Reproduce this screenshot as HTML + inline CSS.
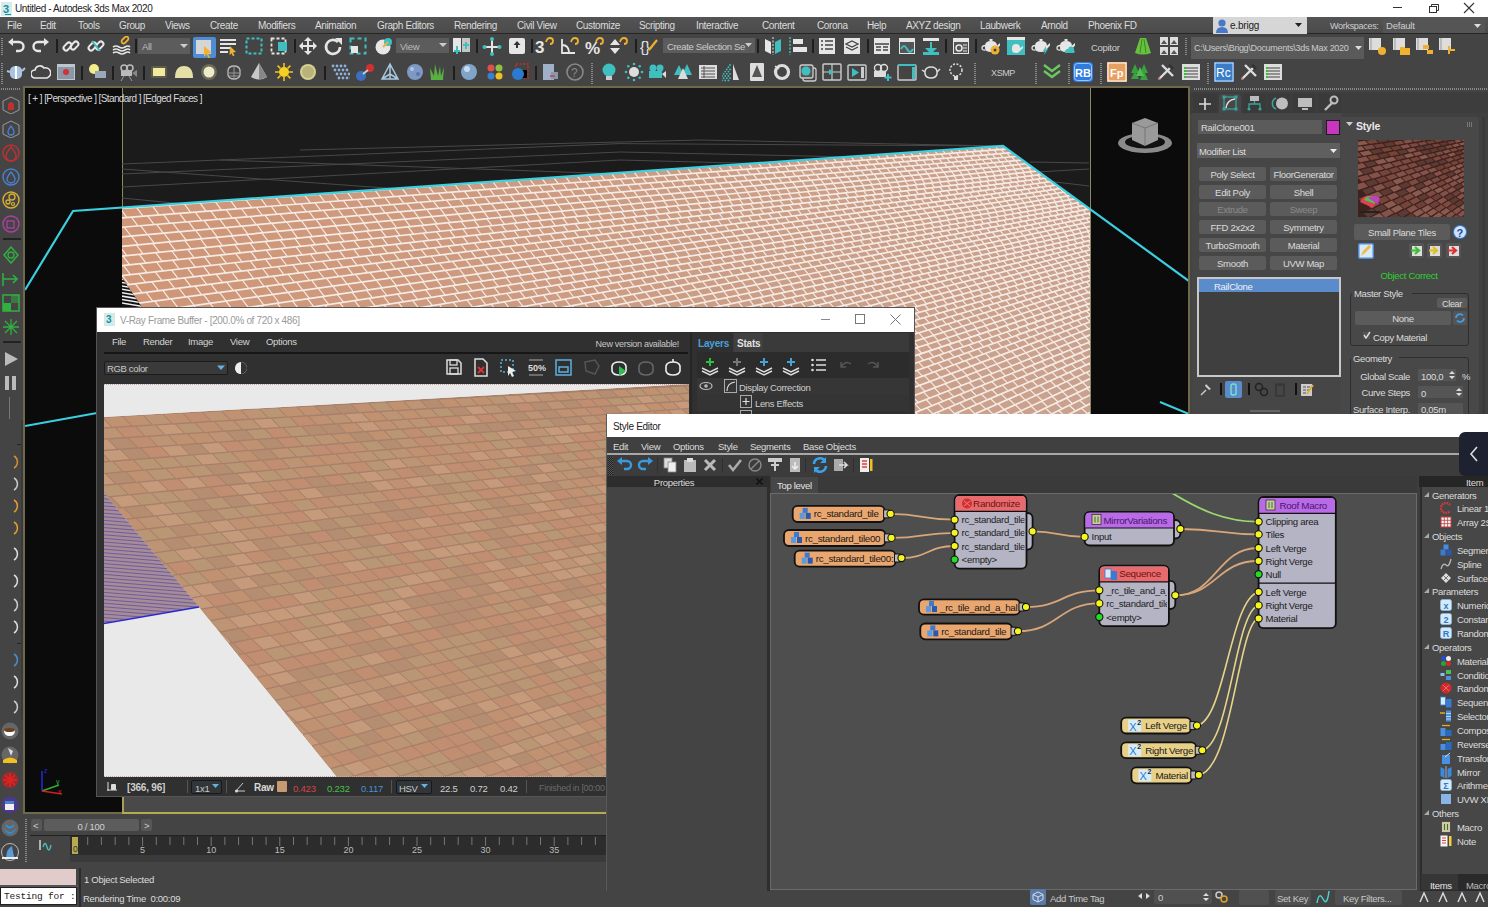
<!DOCTYPE html>
<html><head><meta charset="utf-8">
<style>
*{margin:0;padding:0;box-sizing:border-box}
html,body{width:1488px;height:907px;overflow:hidden;background:#444;position:relative}
body{font-family:"Liberation Sans",sans-serif;font-size:10px;color:#ddd}
.a{position:absolute;display:block}
.t{position:absolute;white-space:nowrap;line-height:1}
</style></head><body>
<div class="a" style="left:0px;top:0px;width:1488px;height:17px;background:#ffffff;"></div>
<div class="a" style="left:1px;top:2px;width:11px;height:14px;background:#d4ecec;"></div>
<div class="t" style="left:3px;top:4px;font-size:11px;color:#1a8e96;letter-spacing:0px;font-weight:bold;">3</div>
<div class="a" style="left:5px;top:14px;width:6px;height:1px;background:#1a8e96;"></div>
<div class="t" style="left:15px;top:4px;font-size:10px;color:#222;letter-spacing:-0.38px;">Untitled - Autodesk 3ds Max 2020</div>
<div class="a" style="left:1393px;top:7px;width:9px;height:1px;background:#333;"></div>
<svg class="a" style="left:1428px;top:3px;" width="11" height="11" viewBox="0 0 11 11"><rect x="1.5" y="3.5" width="7" height="6" fill="none" stroke="#333"/><path d="M3.5 3.5v-2h7v6h-2" fill="none" stroke="#333"/></svg>
<svg class="a" style="left:1463px;top:2px;" width="12" height="12" viewBox="0 0 12 12"><path d="M1 1l10 10M11 1L1 11" stroke="#333" stroke-width="1.1"/></svg>
<div class="a" style="left:0px;top:17px;width:1488px;height:17px;background:linear-gradient(#545454,#4a4a4a);"></div>
<div class="a" style="left:0px;top:33px;width:1488px;height:1px;background:#262626;"></div>
<div class="t" style="left:7px;top:21px;font-size:10px;color:#dcdcdc;letter-spacing:-0.36px;">File</div>
<div class="t" style="left:40px;top:21px;font-size:10px;color:#dcdcdc;letter-spacing:-0.36px;">Edit</div>
<div class="t" style="left:78px;top:21px;font-size:10px;color:#dcdcdc;letter-spacing:-0.36px;">Tools</div>
<div class="t" style="left:119px;top:21px;font-size:10px;color:#dcdcdc;letter-spacing:-0.36px;">Group</div>
<div class="t" style="left:165px;top:21px;font-size:10px;color:#dcdcdc;letter-spacing:-0.36px;">Views</div>
<div class="t" style="left:210px;top:21px;font-size:10px;color:#dcdcdc;letter-spacing:-0.36px;">Create</div>
<div class="t" style="left:258px;top:21px;font-size:10px;color:#dcdcdc;letter-spacing:-0.36px;">Modifiers</div>
<div class="t" style="left:315px;top:21px;font-size:10px;color:#dcdcdc;letter-spacing:-0.36px;">Animation</div>
<div class="t" style="left:377px;top:21px;font-size:10px;color:#dcdcdc;letter-spacing:-0.36px;">Graph Editors</div>
<div class="t" style="left:454px;top:21px;font-size:10px;color:#dcdcdc;letter-spacing:-0.36px;">Rendering</div>
<div class="t" style="left:517px;top:21px;font-size:10px;color:#dcdcdc;letter-spacing:-0.36px;">Civil View</div>
<div class="t" style="left:576px;top:21px;font-size:10px;color:#dcdcdc;letter-spacing:-0.36px;">Customize</div>
<div class="t" style="left:639px;top:21px;font-size:10px;color:#dcdcdc;letter-spacing:-0.36px;">Scripting</div>
<div class="t" style="left:696px;top:21px;font-size:10px;color:#dcdcdc;letter-spacing:-0.36px;">Interactive</div>
<div class="t" style="left:762px;top:21px;font-size:10px;color:#dcdcdc;letter-spacing:-0.36px;">Content</div>
<div class="t" style="left:817px;top:21px;font-size:10px;color:#dcdcdc;letter-spacing:-0.36px;">Corona</div>
<div class="t" style="left:867px;top:21px;font-size:10px;color:#dcdcdc;letter-spacing:-0.36px;">Help</div>
<div class="t" style="left:906px;top:21px;font-size:10px;color:#dcdcdc;letter-spacing:-0.36px;">AXYZ design</div>
<div class="t" style="left:980px;top:21px;font-size:10px;color:#dcdcdc;letter-spacing:-0.36px;">Laubwerk</div>
<div class="t" style="left:1041px;top:21px;font-size:10px;color:#dcdcdc;letter-spacing:-0.36px;">Arnold</div>
<div class="t" style="left:1088px;top:21px;font-size:10px;color:#dcdcdc;letter-spacing:-0.36px;">Phoenix FD</div>
<div class="a" style="left:1213px;top:17px;width:94px;height:17px;background:#d6d6d6;"></div>
<svg class="a" style="left:1215px;top:18px;" width="14" height="15" viewBox="0 0 14 15"><circle cx="7" cy="5" r="3.6" fill="#4a78c8"/><path d="M1 15q0-6 6-6t6 6z" fill="#4a78c8"/></svg>
<div class="t" style="left:1230px;top:21px;font-size:10px;color:#222;letter-spacing:-0.2px;">e.brigg</div>
<svg class="a" style="left:1295px;top:22px;" width="7" height="6" viewBox="0 0 7 6"><path d="M0 1h7L3.5 5z" fill="#222"/></svg>
<div class="t" style="left:1330px;top:22px;font-size:9px;color:#cfcfcf;letter-spacing:-0.3px;">Workspaces:</div>
<div class="a" style="left:1383px;top:18px;width:102px;height:15px;background:#555555;"></div>
<div class="t" style="left:1386px;top:21px;font-size:9.5px;color:#cfcfcf;letter-spacing:-0.2px;">Default</div>
<svg class="a" style="left:1474px;top:23px;" width="7" height="6" viewBox="0 0 7 6"><path d="M0 1h7L3.5 5z" fill="#ddd"/></svg>
<div class="a" style="left:0px;top:34px;width:1488px;height:52px;background:#444444;"></div>
<div class="a" style="left:1px;top:38px;width:2px;height:18px;background:repeating-linear-gradient(#8a8a8a 0 1px,transparent 1px 2px)"></div>
<div class="a" style="left:1px;top:63px;width:2px;height:21px;background:repeating-linear-gradient(#8a8a8a 0 1px,transparent 1px 2px)"></div>
<svg class="a" style="left:6px;top:36px;" width="20" height="20" viewBox="0 0 20 20"><path d="M6 6h7a4.5 4.5 0 0 1 0 9h-3" fill="none" stroke="#e6e6e6" stroke-width="2.4"/><path d="M2 6l5-4v8z" fill="#e6e6e6"/></svg>
<svg class="a" style="left:31px;top:36px;" width="20" height="20" viewBox="0 0 20 20"><path d="M14 6H7a4.5 4.5 0 0 0 0 9h3" fill="none" stroke="#e6e6e6" stroke-width="2.4"/><path d="M18 6l-5-4v8z" fill="#e6e6e6"/></svg>
<div class="a" style="left:56px;top:39px;width:2px;height:14px;background:#1e1e1e;"></div>
<svg class="a" style="left:61px;top:36px;" width="20" height="20" viewBox="0 0 20 20"><g fill="none" stroke="#e6e6e6" stroke-width="2"><rect x="2" y="8" width="9" height="5" rx="2.5" transform="rotate(-45 6.5 10.5)"/><rect x="9" y="7" width="9" height="5" rx="2.5" transform="rotate(-45 13.5 9.5)"/></g></svg>
<svg class="a" style="left:86px;top:36px;" width="20" height="20" viewBox="0 0 20 20"><g fill="none" stroke="#e6e6e6" stroke-width="2"><rect x="2" y="8" width="9" height="5" rx="2.5" transform="rotate(-45 6.5 10.5)"/><rect x="9" y="7" width="9" height="5" rx="2.5" transform="rotate(-45 13.5 9.5)"/></g><path d="M6 5l8 10" stroke="#3fbfbf" stroke-width="2"/></svg>
<svg class="a" style="left:111px;top:36px;" width="20" height="20" viewBox="0 0 20 20"><g fill="none" stroke="#e6e6e6" stroke-width="1.6"><path d="M2 11q3-2 6 0t6 0 5 0"/><path d="M2 14q3-2 6 0t6 0 5 0"/><path d="M2 17q3-2 6 0t6 0 5 0"/></g><rect x="10" y="2" width="8" height="4" rx="2" transform="rotate(-45 14 4)" fill="none" stroke="#f0b030" stroke-width="1.8"/></svg>
<div class="a" style="left:135px;top:39px;width:2px;height:14px;background:#1e1e1e;"></div>
<div class="a" style="left:138px;top:38px;width:52px;height:16px;background:#5c5c5c;"></div>
<div class="t" style="left:142px;top:42px;font-size:9.5px;color:#bbb;letter-spacing:-0.3px;">All</div>
<svg class="a" style="left:180px;top:43px;" width="8" height="6" viewBox="0 0 8 6"><path d="M0 1h8L4 5z" fill="#ccc"/></svg>
<div class="a" style="left:193px;top:37px;width:23px;height:21px;background:#4f8cd6;border-radius:2px"></div>
<div class="a" style="left:196px;top:40px;width:15px;height:14px;background:#d5d5d5;"></div>
<svg class="a" style="left:203px;top:46px;" width="10" height="12" viewBox="0 0 10 12"><path d="M1 0l8 7-4 .5 2 4-1.5.8-2-4L1 11z" fill="#f0b030"/></svg>
<svg class="a" style="left:218px;top:36px;" width="20" height="20" viewBox="0 0 20 20"><g stroke="#e6e6e6" stroke-width="2"><path d="M2 4h16M2 8h16M2 12h10M2 16h8"/></g><path d="M12 10l6 6-3 .5 1.5 3-1.5.8-1.5-3-2 2z" fill="#f0b030"/></svg>
<svg class="a" style="left:244px;top:36px;" width="20" height="20" viewBox="0 0 20 20"><rect x="2.5" y="2.5" width="15" height="15" fill="none" stroke="#3fbfbf" stroke-width="2" stroke-dasharray="3 2"/></svg>
<svg class="a" style="left:269px;top:36px;" width="20" height="20" viewBox="0 0 20 20"><rect x="2.5" y="2.5" width="14" height="15" fill="none" stroke="#e6e6e6" stroke-width="1.8" stroke-dasharray="3 2"/><rect x="9" y="6" width="9" height="9" fill="#3fbfbf"/></svg>
<div class="a" style="left:294px;top:39px;width:2px;height:14px;background:#1e1e1e;"></div>
<svg class="a" style="left:298px;top:36px;" width="20" height="20" viewBox="0 0 20 20"><path d="M10 1l4 4h-3v4h4V6l4 4-4 4v-3h-4v4h3l-4 4-4-4h3v-4H5v3l-4-4 4-4v3h4V5H6z" fill="#e6e6e6"/></svg>
<svg class="a" style="left:323px;top:36px;" width="20" height="20" viewBox="0 0 20 20"><path d="M15 6a7 7 0 1 0 2 5" fill="none" stroke="#e6e6e6" stroke-width="2.6"/><path d="M12 2h7v7z" fill="#e6e6e6"/></svg>
<svg class="a" style="left:348px;top:36px;" width="20" height="20" viewBox="0 0 20 20"><rect x="2.5" y="2.5" width="15" height="15" fill="none" stroke="#3fbfbf" stroke-width="2" stroke-dasharray="4 3"/><rect x="3" y="10" width="7" height="7" fill="#e6e6e6"/></svg>
<svg class="a" style="left:374px;top:36px;" width="20" height="20" viewBox="0 0 20 20"><circle cx="9" cy="11" r="7.5" fill="#e6e6e6"/><circle cx="14" cy="6" r="4" fill="#3fbfbf"/><path d="M9 11l5-5" stroke="#f0b030" stroke-width="2"/></svg>
<div class="a" style="left:396px;top:38px;width:53px;height:15px;background:#5c5c5c;"></div>
<div class="t" style="left:400px;top:42px;font-size:9.5px;color:#bbb;letter-spacing:-0.3px;">View</div>
<svg class="a" style="left:439px;top:42px;" width="8" height="6" viewBox="0 0 8 6"><path d="M0 1h8L4 5z" fill="#ccc"/></svg>
<svg class="a" style="left:452px;top:36px;" width="20" height="20" viewBox="0 0 20 20"><rect x="1" y="2" width="8" height="14" fill="#e6e6e6"/><rect x="10" y="2" width="8" height="14" fill="#e6e6e6" opacity=".8"/><path d="M5 10v8M2 15h6M14 6v7M11 9h6" stroke="#3fbfbf" stroke-width="2"/></svg>
<div class="a" style="left:476px;top:39px;width:2px;height:14px;background:#1e1e1e;"></div>
<svg class="a" style="left:482px;top:36px;" width="20" height="20" viewBox="0 0 20 20"><path d="M10 3v15M2 11h16" stroke="#e6e6e6" stroke-width="2"/><circle cx="10" cy="3" r="2" fill="#3fbfbf"/><circle cx="2.5" cy="11" r="2" fill="#3fbfbf"/><circle cx="17.5" cy="11" r="2" fill="#3fbfbf"/><circle cx="10" cy="18" r="2" fill="#3fbfbf"/></svg>
<svg class="a" style="left:507px;top:36px;" width="20" height="20" viewBox="0 0 20 20"><rect x="2" y="2" width="16" height="16" rx="2" fill="#e6e6e6"/><path d="M10 5l-3.5 4h2.5v3h2V9h2.5z" fill="#333"/></svg>
<div class="a" style="left:531px;top:39px;width:2px;height:14px;background:#1e1e1e;"></div>
<svg class="a" style="left:535px;top:36px;" width="20" height="20" viewBox="0 0 20 20"><text x="0" y="17" font-size="17" font-weight="bold" fill="#e6e6e6" font-family="Liberation Sans">3</text><path d="M11 6q1-4 4-4t3 3-3 3" fill="none" stroke="#f0b030" stroke-width="1.8"/></svg>
<svg class="a" style="left:560px;top:36px;" width="20" height="20" viewBox="0 0 20 20"><path d="M2 3v14h13M2 9q7 0 7 8" fill="none" stroke="#e6e6e6" stroke-width="1.8"/><path d="M11 6q1-4 4-4t3 3-3 3" fill="none" stroke="#f0b030" stroke-width="1.8"/></svg>
<svg class="a" style="left:585px;top:36px;" width="20" height="20" viewBox="0 0 20 20"><text x="0" y="18" font-size="17" font-weight="bold" fill="#e6e6e6" font-family="Liberation Sans">%</text><path d="M11 6q1-4 4-4t3 3-3 3" fill="none" stroke="#f0b030" stroke-width="1.8"/></svg>
<svg class="a" style="left:609px;top:36px;" width="20" height="20" viewBox="0 0 20 20"><path d="M6 3l5 6H1zM6 18l5-6H1z" fill="#e6e6e6"/><path d="M11 6q1-4 4-4t3 3-3 3" fill="none" stroke="#f0b030" stroke-width="1.8"/></svg>
<div class="a" style="left:635px;top:39px;width:2px;height:14px;background:#1e1e1e;"></div>
<svg class="a" style="left:640px;top:36px;" width="20" height="20" viewBox="0 0 20 20"><text x="0" y="16" font-size="15" fill="#e6e6e6" font-family="Liberation Sans">{}</text><path d="M9 14l8-10" stroke="#f0b030" stroke-width="2.2"/></svg>
<div class="a" style="left:663px;top:38px;width:92px;height:15px;background:#5c5c5c;"></div>
<div class="t" style="left:667px;top:42px;font-size:9.5px;color:#ccc;letter-spacing:-0.35px;">Create Selection Se</div>
<svg class="a" style="left:745px;top:42px;" width="7" height="6" viewBox="0 0 7 6"><path d="M0 1h7L3.5 5z" fill="#ccc"/></svg>
<div class="a" style="left:757px;top:39px;width:2px;height:14px;background:#1e1e1e;"></div>
<svg class="a" style="left:763px;top:36px;" width="20" height="20" viewBox="0 0 20 20"><path d="M2 3l6 3v12l-6-3z" fill="#e6e6e6"/><path d="M18 3l-6 3v12l6-3z" fill="#3fbfbf"/><path d="M10 1v18" stroke="#e6e6e6" stroke-width="1" stroke-dasharray="2 1.5"/></svg>
<svg class="a" style="left:788px;top:36px;" width="20" height="20" viewBox="0 0 20 20"><path d="M2 1v18" stroke="#3fbfbf" stroke-width="1.5" stroke-dasharray="2 1.5"/><rect x="5" y="3" width="10" height="5" fill="#e6e6e6"/><rect x="5" y="11" width="14" height="5" fill="#e6e6e6"/></svg>
<div class="a" style="left:812px;top:39px;width:2px;height:14px;background:#1e1e1e;"></div>
<svg class="a" style="left:817px;top:36px;" width="20" height="20" viewBox="0 0 20 20"><rect x="2" y="2" width="16" height="16" fill="#e6e6e6"/><path d="M4 5h2M8 5h8M4 9h2M8 9h8M4 13h2M8 13h8" stroke="#444" stroke-width="1.5"/></svg>
<svg class="a" style="left:842px;top:36px;" width="20" height="20" viewBox="0 0 20 20"><rect x="2" y="2" width="16" height="16" fill="#e6e6e6"/><path d="M10 5l6 3-6 3-6-3zM4 11l6 3 6-3" fill="none" stroke="#444" stroke-width="1.3"/></svg>
<div class="a" style="left:867px;top:39px;width:2px;height:14px;background:#1e1e1e;"></div>
<svg class="a" style="left:872px;top:36px;" width="20" height="20" viewBox="0 0 20 20"><rect x="2" y="2" width="16" height="16" fill="#e6e6e6"/><path d="M3 8h14M4 11h5M11 11h5M4 14h5M11 14h5" stroke="#444" stroke-width="1.5"/></svg>
<svg class="a" style="left:897px;top:36px;" width="20" height="20" viewBox="0 0 20 20"><rect x="2" y="2" width="16" height="16" fill="#e6e6e6"/><rect x="3" y="6" width="14" height="11" fill="#555"/><path d="M4 13q3-6 6 0t6 0" fill="none" stroke="#3fbfbf" stroke-width="2"/></svg>
<svg class="a" style="left:921px;top:36px;" width="20" height="20" viewBox="0 0 20 20"><rect x="2" y="2" width="16" height="3" fill="#e6e6e6"/><path d="M10 6v7" stroke="#3fbfbf" stroke-width="2"/><path d="M4 12l6 6 6-6z" fill="#3fbfbf"/><rect x="2" y="16" width="16" height="3" fill="#3fbfbf"/></svg>
<div class="a" style="left:945px;top:39px;width:2px;height:14px;background:#1e1e1e;"></div>
<svg class="a" style="left:951px;top:36px;" width="20" height="20" viewBox="0 0 20 20"><rect x="2" y="2" width="16" height="16" fill="#e6e6e6"/><rect x="3" y="6" width="14" height="11" fill="#555"/><circle cx="8" cy="12" r="3" fill="none" stroke="#e6e6e6" stroke-width="1.5"/><path d="M12 9h4M12 12h4M12 15h4" stroke="#e6e6e6" stroke-width="1"/></svg>
<div class="a" style="left:975px;top:39px;width:2px;height:14px;background:#1e1e1e;"></div>
<svg class="a" style="left:981px;top:36px;" width="20" height="20" viewBox="0 0 20 20"><path d="M4 10q0-5 6-5t6 5v2q0 4-6 4t-6-4z" fill="#e6e6e6"/><path d="M15.5 10l3.5-3v2.5l-3.5 4z" fill="#e6e6e6"/><path d="M4.5 9.5q-3.5 0-3.5 2.5t3.5 2" fill="none" stroke="#e6e6e6" stroke-width="1.3"/><rect x="8.5" y="3" width="3" height="2" fill="#e6e6e6"/><circle cx="14" cy="14" r="4.5" fill="#f0b030"/><circle cx="14" cy="14" r="1.5" fill="#444"/></svg>
<svg class="a" style="left:1006px;top:36px;" width="20" height="20" viewBox="0 0 20 20"><rect x="1" y="1" width="18" height="18" fill="#3fbfbf"/><rect x="1" y="1" width="18" height="3" fill="#e6e6e6"/><path d="M6 12q0-4 4-4t4 4v2q0 3-4 3t-4-3z" fill="#e6e6e6"/><path d="M14 12l3-2v2l-3 3z" fill="#e6e6e6"/></svg>
<svg class="a" style="left:1031px;top:36px;" width="20" height="20" viewBox="0 0 20 20"><path d="M4 10q0-5 6-5t6 5v2q0 4-6 4t-6-4z" fill="#e6e6e6"/><path d="M15.5 10l3.5-3v2.5l-3.5 4z" fill="#e6e6e6"/><path d="M4.5 9.5q-3.5 0-3.5 2.5t3.5 2" fill="none" stroke="#e6e6e6" stroke-width="1.3"/><rect x="8.5" y="3" width="3" height="2" fill="#e6e6e6"/><path d="M15 10l-3 5h2l-1 4 4-6h-2z" fill="#3fbfbf"/></svg>
<svg class="a" style="left:1056px;top:36px;" width="20" height="20" viewBox="0 0 20 20"><path d="M4 10q0-5 6-5t6 5v2q0 4-6 4t-6-4z" fill="#e6e6e6"/><path d="M15.5 10l3.5-3v2.5l-3.5 4z" fill="#e6e6e6"/><path d="M4.5 9.5q-3.5 0-3.5 2.5t3.5 2" fill="none" stroke="#e6e6e6" stroke-width="1.3"/><rect x="8.5" y="3" width="3" height="2" fill="#e6e6e6"/><path d="M9 17a3 3 0 0 1 3-4 3 3 0 0 1 6 1 2 2 0 0 1 0 3z" fill="#3fbfbf"/></svg>
<div class="t" style="left:1091px;top:43px;font-size:9.5px;color:#ccc;letter-spacing:-0.3px;">Copitor</div>
<svg class="a" style="left:1133px;top:36px;" width="20" height="20" viewBox="0 0 20 20"><path d="M7 2h6l5 15q-8 3-16 0z" fill="#68c040"/><path d="M9 3l-2 14M11 3l2 14" stroke="#3a8a20"/></svg>
<svg class="a" style="left:1159px;top:36px;" width="20" height="20" viewBox="0 0 20 20"><rect x="1" y="1" width="8" height="8" fill="#ddd"/><rect x="11" y="1" width="8" height="8" fill="#ddd"/><rect x="1" y="11" width="8" height="8" fill="#ddd"/><rect x="11" y="11" width="8" height="8" fill="#ddd"/><path d="M2 8l3-4 3 4M12 8l3-4 3 4M2 18l3-4 3 4M12 18l3-4 3 4" fill="#555"/></svg>
<div class="a" style="left:1185px;top:38px;width:2px;height:18px;background:repeating-linear-gradient(#8a8a8a 0 1px,transparent 1px 2px)"></div>
<div class="a" style="left:1191px;top:37px;width:173px;height:22px;background:#5a5a5a;"></div>
<div class="t" style="left:1194px;top:44px;font-size:9px;color:#ccc;letter-spacing:-0.3px;">C:\Users\Brigg\Documents\3ds Max 2020</div>
<svg class="a" style="left:1355px;top:45px;" width="7" height="6" viewBox="0 0 7 6"><path d="M0 1h7L3.5 5z" fill="#ddd"/></svg>
<svg class="a" style="left:1367px;top:36px;" width="20" height="20" viewBox="0 0 20 20"><path d="M2 2h12v12H2z" fill="#ddd"/><path d="M4 2v12" stroke="#999"/><circle cx="15" cy="15" r="4" fill="#f0b030"/></svg>
<svg class="a" style="left:1391px;top:36px;" width="20" height="20" viewBox="0 0 20 20"><path d="M2 2h12v12H2z" fill="#ddd"/><path d="M4 2v12" stroke="#999"/><path d="M9 11h4l1 1h5v7H9z" fill="#f0b030"/></svg>
<svg class="a" style="left:1414px;top:36px;" width="20" height="20" viewBox="0 0 20 20"><path d="M2 2h12v12H2z" fill="#ddd"/><path d="M4 2v12" stroke="#999"/><rect x="9" y="9" width="6" height="4" fill="#f0b030"/><rect x="13" y="14" width="6" height="4" fill="#f0b030"/></svg>
<svg class="a" style="left:1437px;top:36px;" width="20" height="20" viewBox="0 0 20 20"><path d="M2 2h12v12H2z" fill="#ddd"/><path d="M4 2v12" stroke="#999"/><path d="M12 10v8M12 14h6" stroke="#f0b030" stroke-width="2"/></svg>
<svg class="a" style="left:6px;top:62px;" width="20" height="20" viewBox="0 0 20 20"><path d="M4 8q1-4 6-4t6 4v5q-1 4-6 4t-6-4z" fill="#a9c4e0"/><path d="M10 4v13" stroke="#fff" stroke-width="2"/><path d="M16 9l3-3M4 10l-3-1" stroke="#a9c4e0" stroke-width="2"/></svg>
<svg class="a" style="left:31px;top:62px;" width="20" height="20" viewBox="0 0 20 20"><path d="M4 16a4 4 0 0 1 0-8 5 5 0 0 1 9-2 4 4 0 0 1 3 10z" fill="none" stroke="#e6e6e6" stroke-width="1.6"/></svg>
<svg class="a" style="left:56px;top:62px;" width="20" height="20" viewBox="0 0 20 20"><rect x="1" y="2" width="18" height="16" fill="#bfc5cc"/><rect x="2" y="5" width="16" height="12" fill="#8a97a8"/><circle cx="10" cy="10" r="3" fill="#c33"/></svg>
<div class="a" style="left:81px;top:66px;width:2px;height:14px;background:#1e1e1e;"></div>
<svg class="a" style="left:87px;top:62px;" width="20" height="20" viewBox="0 0 20 20"><circle cx="7" cy="7" r="5" fill="#f3ec8a"/><rect x="8" y="9" width="11" height="7" fill="#9aa8b8"/></svg>
<div class="a" style="left:112px;top:66px;width:2px;height:14px;background:#1e1e1e;"></div>
<svg class="a" style="left:118px;top:62px;" width="20" height="20" viewBox="0 0 20 20"><circle cx="6" cy="6" r="3" fill="none" stroke="#bbb" stroke-width="1.5"/><circle cx="12" cy="6" r="3" fill="none" stroke="#bbb" stroke-width="1.5"/><rect x="3" y="9" width="11" height="5" fill="#bbb"/><path d="M14 11l5-3v7z" fill="#888"/><path d="M6 14l-3 5M11 14l3 5" stroke="#999"/></svg>
<div class="a" style="left:143px;top:66px;width:2px;height:14px;background:#1e1e1e;"></div>
<svg class="a" style="left:149px;top:62px;" width="20" height="20" viewBox="0 0 20 20"><rect x="2" y="4" width="16" height="12" rx="2" fill="#5f5e48"/><rect x="4" y="6" width="12" height="8" fill="#f1eaa0"/></svg>
<svg class="a" style="left:174px;top:62px;" width="20" height="20" viewBox="0 0 20 20"><path d="M1 16q0-12 9-12t9 12z" fill="#e5e0a8"/></svg>
<svg class="a" style="left:199px;top:62px;" width="20" height="20" viewBox="0 0 20 20"><circle cx="10" cy="10" r="8" fill="#6a6a55"/><circle cx="10" cy="10" r="5.5" fill="#eeeacc"/></svg>
<svg class="a" style="left:224px;top:62px;" width="20" height="20" viewBox="0 0 20 20"><path d="M4 8q1-4 6-4t6 4v5q-1 4-6 4t-6-4z" fill="none" stroke="#bbb" stroke-width="1.3"/><path d="M5 11h10M5 14h10M10 4v13" stroke="#999"/></svg>
<svg class="a" style="left:249px;top:62px;" width="20" height="20" viewBox="0 0 20 20"><path d="M10 1L2 15q8 5 16 0z" fill="#c8c8c8"/><path d="M10 1L10 18 18 15z" fill="#888"/></svg>
<svg class="a" style="left:274px;top:62px;" width="20" height="20" viewBox="0 0 20 20"><circle cx="10" cy="10" r="5" fill="#f5d020"/><path d="M10 1v4M10 15v4M1 10h4M15 10h4M3.6 3.6l2.8 2.8M13.6 13.6l2.8 2.8M3.6 16.4l2.8-2.8M13.6 6.4l2.8-2.8" stroke="#f5c020" stroke-width="1.6"/></svg>
<svg class="a" style="left:298px;top:62px;" width="20" height="20" viewBox="0 0 20 20"><circle cx="10" cy="10" r="8" fill="#d6d090"/><circle cx="10" cy="10" r="6" fill="#b9b27a"/></svg>
<div class="a" style="left:324px;top:66px;width:2px;height:14px;background:#1e1e1e;"></div>
<svg class="a" style="left:330px;top:62px;" width="20" height="20" viewBox="0 0 20 20"><g fill="#8fb0d8"><circle cx="3" cy="4" r="1.4"/><circle cx="5" cy="8" r="1.4"/><circle cx="7" cy="12" r="1.4"/><circle cx="9" cy="16" r="1.4"/><circle cx="7" cy="4" r="1.4"/><circle cx="9" cy="8" r="1.4"/><circle cx="11" cy="12" r="1.4"/><circle cx="13" cy="16" r="1.4"/><circle cx="11" cy="4" r="1.4"/><circle cx="13" cy="8" r="1.4"/><circle cx="15" cy="12" r="1.4"/><circle cx="17" cy="16" r="1.4"/><circle cx="15" cy="4" r="1.4"/><circle cx="17" cy="8" r="1.4"/><circle cx="19" cy="12" r="1.4"/><circle cx="21" cy="16" r="1.4"/></g></svg>
<svg class="a" style="left:355px;top:62px;" width="20" height="20" viewBox="0 0 20 20"><circle cx="6" cy="14" r="5" fill="#3d6fc0"/><circle cx="15" cy="6" r="4" fill="#d03030"/><path d="M8 12l5-4" stroke="#ccc" stroke-width="2"/></svg>
<svg class="a" style="left:380px;top:62px;" width="20" height="20" viewBox="0 0 20 20"><path d="M10 2L2 17h16z M10 2v15M2 17l8-5 8 5" fill="none" stroke="#a8c8e0" stroke-width="1.5"/></svg>
<svg class="a" style="left:405px;top:62px;" width="20" height="20" viewBox="0 0 20 20"><circle cx="10" cy="10" r="8" fill="#7d99c4"/><circle cx="7" cy="7" r="2" fill="#b0c4e4"/><circle cx="13" cy="12" r="2" fill="#5a78a8"/></svg>
<svg class="a" style="left:428px;top:62px;" width="20" height="20" viewBox="0 0 20 20"><path d="M3 18L2 6l4 8 1-12 3 12 2-10 1 10 3-9-1 13z" fill="#58b040"/></svg>
<div class="a" style="left:453px;top:66px;width:2px;height:14px;background:#1e1e1e;"></div>
<svg class="a" style="left:459px;top:62px;" width="20" height="20" viewBox="0 0 20 20"><circle cx="10" cy="10" r="8" fill="#7fa5c8"/><circle cx="8" cy="7" r="3" fill="#c8dcef"/></svg>
<svg class="a" style="left:485px;top:62px;" width="20" height="20" viewBox="0 0 20 20"><circle cx="6" cy="6" r="3.5" fill="#e05050"/><circle cx="14" cy="6" r="3.5" fill="#90c040"/><circle cx="6" cy="14" r="3.5" fill="#3a80d0"/><circle cx="14" cy="14" r="3.5" fill="#f0c020"/></svg>
<svg class="a" style="left:510px;top:62px;" width="20" height="20" viewBox="0 0 20 20"><rect x="6" y="2" width="12" height="14" fill="none" stroke="#c03030" stroke-width="1.5" stroke-dasharray="2 1.5"/><rect x="11" y="8" width="6" height="8" fill="#000"/><circle cx="8" cy="12" r="6" fill="#2a7ad0"/></svg>
<div class="a" style="left:535px;top:66px;width:2px;height:14px;background:#1e1e1e;"></div>
<svg class="a" style="left:540px;top:62px;" width="20" height="20" viewBox="0 0 20 20"><rect x="3" y="2" width="11" height="16" fill="#a0b0c8"/><rect x="11" y="10" width="7" height="7" fill="#8898b0"/><path d="M10 14h5" stroke="#d04040" stroke-width="1.5"/></svg>
<svg class="a" style="left:565px;top:62px;" width="20" height="20" viewBox="0 0 20 20"><circle cx="10" cy="10" r="8" fill="none" stroke="#888" stroke-width="1.6"/><text x="6" y="15" font-size="12" fill="#888" font-family="Liberation Sans">?</text></svg>
<div class="a" style="left:591px;top:63px;width:2px;height:21px;background:repeating-linear-gradient(#8a8a8a 0 1px,transparent 1px 2px)"></div>
<svg class="a" style="left:599px;top:62px;" width="20" height="20" viewBox="0 0 20 20"><circle cx="10" cy="8" r="6.5" fill="#3fbfbf"/><rect x="7" y="14" width="6" height="4" fill="#ccc"/></svg>
<svg class="a" style="left:624px;top:62px;" width="20" height="20" viewBox="0 0 20 20"><circle cx="10" cy="10" r="5" fill="#ddd"/><g fill="#3fbfbf"><circle cx="10" cy="2" r="1.3"/><circle cx="10" cy="18" r="1.3"/><circle cx="2" cy="10" r="1.3"/><circle cx="18" cy="10" r="1.3"/><circle cx="4.3" cy="4.3" r="1.3"/><circle cx="15.7" cy="15.7" r="1.3"/><circle cx="4.3" cy="15.7" r="1.3"/><circle cx="15.7" cy="4.3" r="1.3"/></g></svg>
<svg class="a" style="left:647px;top:62px;" width="20" height="20" viewBox="0 0 20 20"><circle cx="6" cy="6" r="3.5" fill="#3fbfbf"/><circle cx="13" cy="6" r="3.5" fill="#3fbfbf"/><rect x="2" y="9" width="13" height="7" fill="#3fbfbf"/><path d="M15 12l4-3v7z" fill="#ddd"/></svg>
<svg class="a" style="left:673px;top:62px;" width="20" height="20" viewBox="0 0 20 20"><path d="M6 3l-5 10h10zM14 2l-5 11h10z" fill="#3fbfbf"/><path d="M10 6l-5 11h10z" fill="#ddd"/></svg>
<svg class="a" style="left:698px;top:62px;" width="20" height="20" viewBox="0 0 20 20"><rect x="1" y="3" width="18" height="14" fill="#ddd"/><path d="M3 6h14M3 9h14M3 12h14M3 15h14" stroke="#555"/><path d="M6 4v12" stroke="#555"/></svg>
<svg class="a" style="left:722px;top:62px;" width="20" height="20" viewBox="0 0 20 20"><g fill="#3fbfbf"><circle cx="8.0" cy="3.0" r="0.9"/><circle cx="6.4" cy="5.2" r="0.9"/><circle cx="4.8" cy="7.4" r="0.9"/><circle cx="8.0" cy="7.4" r="0.9"/><circle cx="3.2" cy="9.6" r="0.9"/><circle cx="6.4" cy="9.6" r="0.9"/><circle cx="1.6" cy="11.8" r="0.9"/><circle cx="4.8" cy="11.8" r="0.9"/><circle cx="8.0" cy="11.8" r="0.9"/><circle cx="0.0" cy="14.0" r="0.9"/><circle cx="3.2" cy="14.0" r="0.9"/><circle cx="6.4" cy="14.0" r="0.9"/><circle cx="-1.6" cy="16.2" r="0.9"/><circle cx="1.6" cy="16.2" r="0.9"/><circle cx="4.8" cy="16.2" r="0.9"/><circle cx="8.0" cy="16.2" r="0.9"/><circle cx="-3.2" cy="18.4" r="0.9"/><circle cx="0.0" cy="18.4" r="0.9"/><circle cx="3.2" cy="18.4" r="0.9"/><circle cx="6.4" cy="18.4" r="0.9"/></g><path d="M11 2l6 16h-6z" fill="#ddd"/></svg>
<svg class="a" style="left:747px;top:62px;" width="20" height="20" viewBox="0 0 20 20"><rect x="3" y="1" width="14" height="18" rx="1" fill="#ddd"/><path d="M10 3l-5 12h10z" fill="#555"/></svg>
<svg class="a" style="left:772px;top:62px;" width="20" height="20" viewBox="0 0 20 20"><circle cx="10" cy="10" r="6.5" fill="none" stroke="#ddd" stroke-width="3.2"/><path d="M3 4l4 3M2 9l3 1" stroke="#ddd" stroke-width="1.5"/></svg>
<svg class="a" style="left:797px;top:62px;" width="20" height="20" viewBox="0 0 20 20"><rect x="6" y="6" width="13" height="13" rx="2" fill="none" stroke="#ccc" stroke-width="1.3"/><rect x="3" y="3" width="13" height="13" rx="2" fill="#555" stroke="#ccc" stroke-width="1.3"/><circle cx="9" cy="9" r="4.5" fill="#3fbfbf"/></svg>
<svg class="a" style="left:822px;top:62px;" width="20" height="20" viewBox="0 0 20 20"><rect x="1" y="2" width="18" height="16" rx="1" fill="none" stroke="#ccc" stroke-width="1.4"/><path d="M10 2v16M1 10h18" stroke="#ccc" stroke-width="1.2"/><path d="M7 7l5 3-5 3z" fill="#3fbfbf"/></svg>
<svg class="a" style="left:847px;top:62px;" width="20" height="20" viewBox="0 0 20 20"><rect x="1" y="3" width="18" height="15" rx="1" fill="none" stroke="#ccc" stroke-width="1.4"/><path d="M5 6l7 4.5-7 4.5z" fill="#3fbfbf"/><rect x="14" y="5" width="3" height="11" fill="#ccc"/></svg>
<svg class="a" style="left:872px;top:62px;" width="20" height="20" viewBox="0 0 20 20"><circle cx="6" cy="6" r="3.5" fill="none" stroke="#ddd" stroke-width="1.4"/><circle cx="12" cy="6" r="3.5" fill="none" stroke="#ddd" stroke-width="1.4"/><rect x="2" y="9" width="12" height="6" fill="#ddd"/><path d="M16 12v7M12.5 15.5h7" stroke="#3fbfbf" stroke-width="2"/></svg>
<svg class="a" style="left:897px;top:62px;" width="20" height="20" viewBox="0 0 20 20"><rect x="1" y="3" width="18" height="15" rx="1" fill="none" stroke="#ccc" stroke-width="1.4"/><rect x="1" y="2" width="18" height="2" fill="#3fbfbf"/><rect x="15" y="5" width="3" height="12" fill="#3fbfbf"/></svg>
<svg class="a" style="left:921px;top:62px;" width="20" height="20" viewBox="0 0 20 20"><path d="M4 9q1-4 6-4t6 4v3q-1 4-6 4t-6-4z" fill="none" stroke="#ddd" stroke-width="1.5"/><path d="M16 10l3-3M4 10L1 8" stroke="#ddd" stroke-width="1.5"/></svg>
<svg class="a" style="left:946px;top:62px;" width="20" height="20" viewBox="0 0 20 20"><circle cx="10" cy="8" r="6" fill="none" stroke="#ddd" stroke-width="1.5" stroke-dasharray="2 1.5"/><rect x="8" y="14" width="4" height="4" fill="#ddd"/></svg>
<div class="a" style="left:974px;top:63px;width:2px;height:21px;background:repeating-linear-gradient(#8a8a8a 0 1px,transparent 1px 2px)"></div>
<div class="t" style="left:1003px;transform:translateX(-50%);top:69px;font-size:9px;color:#ccc;letter-spacing:-0.4px;">XSMP</div>
<div class="a" style="left:1035px;top:63px;width:2px;height:21px;background:repeating-linear-gradient(#8a8a8a 0 1px,transparent 1px 2px)"></div>
<svg class="a" style="left:1042px;top:62px;" width="20" height="20" viewBox="0 0 20 20"><path d="M2 3l8 6 8-6M2 9l8 6 8-6" fill="none" stroke="#6cc860" stroke-width="2.4"/></svg>
<div class="a" style="left:1068px;top:63px;width:2px;height:21px;background:repeating-linear-gradient(#8a8a8a 0 1px,transparent 1px 2px)"></div>
<svg class="a" style="left:1073px;top:62px;" width="20" height="20" viewBox="0 0 20 20"><rect x="0" y="0" width="20" height="20" rx="4" fill="#2f7ce0"/><rect x="1.5" y="1.5" width="17" height="17" rx="3" fill="none" stroke="#9cc6ff" stroke-width="1"/><text x="2" y="15" font-size="11" font-weight="bold" fill="#fff" font-family="Liberation Sans">RB</text></svg>
<div class="a" style="left:1100px;top:63px;width:2px;height:21px;background:repeating-linear-gradient(#8a8a8a 0 1px,transparent 1px 2px)"></div>
<svg class="a" style="left:1107px;top:62px;" width="20" height="20" viewBox="0 0 20 20"><rect x="0" y="0" width="20" height="20" fill="#e6a060"/><rect x="1" y="1" width="18" height="18" fill="none" stroke="#fff" stroke-width="1"/><text x="3" y="15" font-size="11" font-weight="bold" fill="#fff" font-family="Liberation Sans">Fp</text></svg>
<svg class="a" style="left:1130px;top:62px;" width="20" height="20" viewBox="0 0 20 20"><path d="M5 2l-4 9h3l-3 6h8l-3-6h3zM14 2l-4 9h3l-3 7h8l-3-7h3z" fill="#3aa040"/><path d="M10 5l-4 9h8z" fill="#50c050"/></svg>
<svg class="a" style="left:1156px;top:62px;" width="20" height="20" viewBox="0 0 20 20"><path d="M3 17L14 6M6 3l11 11" stroke="#ddd" stroke-width="2.4"/><path d="M2 18l3-1-2-2z" fill="#d08070"/><path d="M14 2l4 4-2 2-4-4z" fill="#333"/></svg>
<svg class="a" style="left:1181px;top:62px;" width="20" height="20" viewBox="0 0 20 20"><rect x="1" y="2" width="18" height="16" fill="#ddd"/><path d="M3 6h14M3 9h14M3 12h14M3 15h14" stroke="#777" stroke-width="1.5"/><path d="M3 6h2M3 9h2M3 12h2M3 15h2" stroke="#30c030" stroke-width="2"/></svg>
<div class="a" style="left:1207px;top:63px;width:2px;height:21px;background:repeating-linear-gradient(#8a8a8a 0 1px,transparent 1px 2px)"></div>
<svg class="a" style="left:1214px;top:62px;" width="20" height="20" viewBox="0 0 20 20"><rect x="0" y="0" width="20" height="20" fill="#3a7cc8"/><rect x="1" y="1" width="18" height="18" fill="none" stroke="#cfe3ff" stroke-width="1"/><text x="2" y="15" font-size="12" fill="#fff" font-family="Liberation Sans">Rc</text></svg>
<svg class="a" style="left:1239px;top:62px;" width="20" height="20" viewBox="0 0 20 20"><path d="M3 17L14 6M6 3l11 11" stroke="#ddd" stroke-width="2.4"/><path d="M2 18l3-1-2-2z" fill="#d08070"/><path d="M14 2l4 4-2 2-4-4z" fill="#333"/></svg>
<svg class="a" style="left:1263px;top:62px;" width="20" height="20" viewBox="0 0 20 20"><rect x="1" y="2" width="18" height="16" fill="#ddd"/><path d="M3 6h14M3 9h14M3 12h14M3 15h14" stroke="#777" stroke-width="1.5"/><path d="M3 6h2M3 9h2M3 12h2M3 15h2" stroke="#30c030" stroke-width="2"/></svg>
<div class="a" style="left:23px;top:86px;width:1167px;height:728px;background:#6f684a;"></div>
<div class="a" style="left:25px;top:88px;width:1163px;height:724px;background:#0b0b0b;"></div>
<div class="a" style="left:123px;top:88px;width:967px;height:708px;background:#1b1b1b;"></div>
<div class="a" style="left:123px;top:795px;width:967px;height:17px;background:#494949;"></div>
<div class="a" style="left:122px;top:88px;width:1px;height:724px;background:#8c8a62;"></div>
<div class="a" style="left:1090px;top:88px;width:1px;height:326px;background:#8c8a62;"></div>
<div class="a" style="left:122px;top:795px;width:2px;height:19px;background:#a8a050;"></div>
<div class="a" style="left:122px;top:812px;width:485px;height:2px;background:#b4ac52;"></div>
<div class="t" style="left:28px;top:94px;font-size:10px;color:#d8d8d8;letter-spacing:-0.6px;">[ + ] [Perspective ] [Standard ] [Edged Faces ]</div>
<svg class="a" style="left:0;top:0" width="1488" height="907" viewBox="0 0 1488 907"><defs><clipPath id="vpc"><rect x="25" y="88" width="1163" height="724"/></clipPath></defs><g clip-path="url(#vpc)"><g stroke="#484848" stroke-width="1"><polyline points="122,164 620,143.6 1000,146" fill="none"/><polyline points="122,174 620,152 900,158" fill="none"/><polyline points="122,187 620,160 850,166" fill="none"/><polyline points="122,169 422,190.6 560,198" fill="none"/><polyline points="122,198 215,207" fill="none"/><polyline points="220,160 620,174 800,178" fill="none"/><polyline points="300,150 700,140 1000,146" fill="none"/><polyline points="1030,162 1089,163" fill="none"/><polyline points="1037,172 1089,169" fill="none"/><polyline points="1047,181 1089,186" fill="none"/></g><defs><clipPath id="rc"><polygon points="122,207.6 1003,146 1090,209.5 1090,416 912,416 912,309 143,309 122,278"/></clipPath></defs><defs><linearGradient id="rg" gradientUnits="userSpaceOnUse" x1="122" y1="0" x2="1090" y2="0"><stop offset="0" stop-color="#cf9677"/><stop offset="1" stop-color="#c9a28f"/></linearGradient></defs><g clip-path="url(#rc)"><polygon points="122,207.6 1003,146 1090,209.5 1090,416 912,416 912,309 143,309 122,278" fill="url(#rg)"/><path d="M100 210L1092 138.7M100 219.5L1092 142.3M100 229.1L1092 146M100 238.8L1092 149.6M100 248.5L1092 153.3M100 258.3L1092 157M100 268.1L1092 160.8M100 278.1L1092 164.6M100 288.1L1092 168.4M100 298.2L1092 172.2M100 308.4L1092 176.1M100 318.7L1092 180M100 329.1L1092 183.9M100 339.5L1092 187.9M100 350.2L1092 192M100 360.9L1092 196M100 371.7L1092 200.2M100 382.7L1092 204.3M100 393.8L1092 208.5M100 405.1L1092 212.8M100 416.5L1092 217.2M100 428L1092 221.5M100 439.7L1092 226M100 451.6L1092 230.5M100 463.7L1092 235.1M100 476L1092 239.8M100 488.4L1092 244.5M100 501.1L1092 249.3M100 514L1092 254.2M100 527.1L1092 259.2M100 540.5L1092 264.3M100 554.1L1092 269.5M100 568L1092 274.7M100 582.1L1092 280.1M100 596.6L1092 285.6M100 611.3L1092 291.2M100 626.4L1092 296.9M100 641.8L1092 302.8M100 657.5L1092 308.8M100 673.6L1092 314.9M100 690.2L1092 321.2M100 707.1L1092 327.6M100 724.5L1092 334.2M100 742.3L1092 341M100 760.6L1092 347.9M100 779.4L1092 355.1M100 798.7L1092 362.4M100 818.6L1092 370M100 839.2L1092 377.8M100 860.3L1092 385.8M100 882.1L1092 394.1M100 904.7L1092 402.7M100 928L1092 411.5" stroke="#f6ebe4" stroke-width="1.7" fill="none"/><path d="M103.8 209.7l6.7 9M120.3 208.5l6.6 8.9M136.5 207.3l6.5 8.8M152.6 206.2l6.5 8.7M168.5 205l6.4 8.6M184.3 203.9l6.3 8.6M199.9 202.8l6.3 8.5M215.3 201.7l6.2 8.4M230.6 200.6l6.1 8.3M245.7 199.5l6.1 8.2M260.7 198.4l6 8.1M275.5 197.4l5.9 8M290.2 196.3l5.9 8M304.7 195.3l5.8 7.9M319 194.2l5.8 7.8M333.2 193.2l5.7 7.7M347.3 192.2l5.6 7.6M361.2 191.2l5.6 7.6M375 190.2l5.5 7.5M388.6 189.2l5.5 7.4M402.1 188.3l5.4 7.3M415.5 187.3l5.4 7.2M428.7 186.3l5.3 7.2M441.8 185.4l5.3 7.1M454.7 184.5l5.2 7M467.5 183.6l5.1 7M480.2 182.6l5.1 6.9M492.8 181.7l5 6.8M505.2 180.8l5 6.7M517.5 180l4.9 6.7M529.7 179.1l4.9 6.6M541.7 178.2l4.8 6.5M553.6 177.4l4.8 6.5M565.4 176.5l4.7 6.4M577.1 175.7l4.7 6.3M588.7 174.9l4.6 6.3M600.1 174l4.6 6.2M611.4 173.2l4.5 6.1M622.6 172.4l4.5 6.1M633.7 171.6l4.5 6M644.7 170.8l4.4 6M655.5 170l4.4 5.9M666.3 169.3l4.3 5.8M676.9 168.5l4.3 5.8M687.5 167.8l4.2 5.7M697.9 167l4.2 5.7M708.2 166.3l4.1 5.6M718.4 165.5l4.1 5.5M728.5 164.8l4.1 5.5M738.5 164.1l4 5.4M748.4 163.4l4 5.4M758.2 162.7l3.9 5.3M767.9 162l3.9 5.3M777.5 161.3l3.9 5.2M787 160.6l3.8 5.2M796.4 159.9l3.8 5.1M805.7 159.3l3.7 5M814.9 158.6l3.7 5M824 157.9l3.7 4.9M833 157.3l3.6 4.9M841.9 156.7l3.6 4.8M850.7 156l3.5 4.8M859.5 155.4l3.5 4.7M868.1 154.8l3.5 4.7M876.7 154.2l3.4 4.6M885.2 153.5l3.4 4.6M893.5 152.9l3.4 4.5M901.8 152.3l3.3 4.5M910.1 151.8l3.3 4.5M918.2 151.2l3.3 4.4M926.2 150.6l3.2 4.4M934.2 150l3.2 4.3M942.1 149.5l3.2 4.3M949.9 148.9l3.1 4.2M957.6 148.3l3.1 4.2M965.2 147.8l3.1 4.1M972.8 147.3l3 4.1M980.3 146.7l3 4.1M987.7 146.2l3 4M995 145.7l2.9 4M1002.3 145.1l2.9 3.9M1009.4 144.6l2.9 3.9M1016.6 144.1l2.9 3.9M1023.6 143.6l2.8 3.8M1030.5 143.1l2.8 3.8M1037.4 142.6l2.8 3.7M1044.3 142.1l2.7 3.7M1051 141.6l2.7 3.7M1057.7 141.2l2.7 3.6M1064.3 140.7l2.7 3.6M1070.8 140.2l2.6 3.5M1077.3 139.7l2.6 3.5M1083.7 139.3l2.6 3.5M1090.1 138.8l2.5 3.4M115.1 218.3l6.7 9M131.4 217.1l6.6 8.9M147.6 215.8l6.5 8.8M163.6 214.6l6.5 8.7M179.5 213.3l6.4 8.6M195.2 212.1l6.3 8.5M210.7 210.9l6.3 8.4M226.1 209.7l6.2 8.3M241.3 208.5l6.1 8.2M256.3 207.3l6.1 8.2M271.2 206.2l6 8.1M286 205l5.9 8M300.6 203.9l5.9 7.9M315 202.8l5.8 7.8M329.3 201.7l5.8 7.7M343.4 200.6l5.7 7.7M357.4 199.5l5.6 7.6M371.3 198.4l5.6 7.5M385 197.3l5.5 7.4M398.5 196.3l5.5 7.4M412 195.2l5.4 7.3M425.3 194.2l5.4 7.2M438.4 193.2l5.3 7.1M451.4 192.2l5.2 7.1M464.3 191.2l5.2 7M477.1 190.2l5.1 6.9M489.7 189.2l5.1 6.8M502.2 188.2l5 6.8M514.5 187.3l5 6.7M526.7 186.3l4.9 6.6M538.9 185.4l4.9 6.6M550.8 184.4l4.8 6.5M562.7 183.5l4.8 6.4M574.4 182.6l4.7 6.4M586 181.7l4.7 6.3M597.5 180.8l4.6 6.2M608.9 179.9l4.6 6.2M620.2 179l4.5 6.1M631.3 178.2l4.5 6M642.3 177.3l4.4 6M653.2 176.5l4.4 5.9M664 175.6l4.4 5.9M674.7 174.8l4.3 5.8M685.3 174l4.3 5.7M695.8 173.1l4.2 5.7M706.1 172.3l4.2 5.6M716.4 171.5l4.1 5.6M726.5 170.8l4.1 5.5M736.6 170l4 5.4M746.5 169.2l4 5.4M756.4 168.4l4 5.3M766.1 167.7l3.9 5.3M775.7 166.9l3.9 5.2M785.3 166.2l3.8 5.2M794.7 165.4l3.8 5.1M804 164.7l3.8 5.1M813.3 164l3.7 5M822.4 163.3l3.7 5M831.5 162.6l3.6 4.9M840.4 161.9l3.6 4.9M849.3 161.2l3.6 4.8M858.1 160.5l3.5 4.8M866.8 159.8l3.5 4.7M875.4 159.2l3.5 4.7M883.9 158.5l3.4 4.6M892.3 157.9l3.4 4.6M900.6 157.2l3.4 4.5M908.9 156.6l3.3 4.5M917 155.9l3.3 4.4M925.1 155.3l3.3 4.4M933.1 154.7l3.2 4.3M941 154.1l3.2 4.3M948.9 153.5l3.2 4.2M956.6 152.8l3.1 4.2M964.3 152.3l3.1 4.2M971.9 151.7l3.1 4.1M979.4 151.1l3 4.1M986.8 150.5l3 4M994.2 149.9l3 4M1001.5 149.4l2.9 3.9M1008.7 148.8l2.9 3.9M1015.8 148.2l2.9 3.9M1022.8 147.7l2.8 3.8M1029.8 147.2l2.8 3.8M1036.7 146.6l2.8 3.7M1043.6 146.1l2.8 3.7M1050.4 145.6l2.7 3.7M1057.1 145l2.7 3.6M1063.7 144.5l2.7 3.6M1070.3 144l2.6 3.6M1076.8 143.5l2.6 3.5M1083.2 143l2.6 3.5M1089.6 142.5l2.6 3.4M107.8 228.5l6.7 9M124.3 227.1l6.7 8.9M140.6 225.7l6.6 8.8M156.7 224.4l6.5 8.7M172.7 223l6.5 8.6M188.5 221.7l6.4 8.6M204.1 220.4l6.3 8.5M219.6 219.1l6.3 8.4M234.9 217.8l6.2 8.3M250.1 216.5l6.1 8.2M265.1 215.3l6.1 8.1M279.9 214l6 8M294.6 212.8l5.9 8M309.1 211.6l5.9 7.9M323.5 210.4l5.8 7.8M337.8 209.2l5.8 7.7M351.9 208l5.7 7.6M365.8 206.8l5.6 7.5M379.6 205.7l5.6 7.5M393.3 204.5l5.5 7.4M406.8 203.4l5.5 7.3M420.2 202.3l5.4 7.2M433.4 201.2l5.4 7.2M446.5 200.1l5.3 7.1M459.5 199l5.2 7M472.3 197.9l5.2 6.9M485 196.8l5.1 6.9M497.6 195.8l5.1 6.8M510 194.7l5 6.7M522.3 193.7l5 6.7M534.5 192.7l4.9 6.6M546.6 191.7l4.9 6.5M558.5 190.7l4.8 6.5M570.3 189.7l4.8 6.4M582 188.7l4.7 6.3M593.6 187.7l4.7 6.3M605 186.8l4.6 6.2M616.3 185.8l4.6 6.1M627.5 184.9l4.5 6.1M638.6 184l4.5 6M649.6 183l4.4 5.9M660.5 182.1l4.4 5.9M671.2 181.2l4.3 5.8M681.9 180.3l4.3 5.8M692.4 179.5l4.3 5.7M702.8 178.6l4.2 5.6M713.2 177.7l4.2 5.6M723.4 176.9l4.1 5.5M733.5 176l4.1 5.5M743.5 175.2l4 5.4M753.4 174.3l4 5.4M763.2 173.5l4 5.3M772.8 172.7l3.9 5.2M782.4 171.9l3.9 5.2M791.9 171.1l3.8 5.1M801.3 170.3l3.8 5.1M810.6 169.5l3.8 5M819.8 168.8l3.7 5M828.9 168l3.7 4.9M837.9 167.3l3.6 4.9M846.9 166.5l3.6 4.8M855.7 165.8l3.6 4.8M864.4 165l3.5 4.7M873.1 164.3l3.5 4.7M881.6 163.6l3.5 4.6M890.1 162.9l3.4 4.6M898.5 162.2l3.4 4.5M906.8 161.5l3.4 4.5M915 160.8l3.3 4.4M923.1 160.1l3.3 4.4M931.1 159.4l3.2 4.3M939.1 158.8l3.2 4.3M946.9 158.1l3.2 4.3M954.7 157.5l3.1 4.2M962.4 156.8l3.1 4.2M970.1 156.2l3.1 4.1M977.6 155.5l3.1 4.1M985.1 154.9l3 4M992.5 154.3l3 4M999.8 153.7l3 4M1007.1 153.1l2.9 3.9M1014.2 152.5l2.9 3.9M1021.3 151.9l2.9 3.8M1028.3 151.3l2.8 3.8M1035.3 150.7l2.8 3.8M1042.2 150.1l2.8 3.7M1049 149.6l2.8 3.7M1055.7 149l2.7 3.6M1062.4 148.4l2.7 3.6M1069 147.9l2.7 3.6M1075.5 147.3l2.6 3.5M1082 146.8l2.6 3.5M1088.3 146.3l2.6 3.5M114.9 237.4l6.7 9M131.4 235.9l6.7 8.9M147.7 234.5l6.6 8.8M163.8 233l6.5 8.7M179.7 231.6l6.5 8.6M195.5 230.2l6.4 8.5M211.1 228.8l6.3 8.4M226.5 227.4l6.3 8.4M241.8 226l6.2 8.3M256.9 224.7l6.1 8.2M271.9 223.3l6.1 8.1M286.7 222l6 8M301.4 220.7l5.9 7.9M315.9 219.4l5.9 7.8M330.3 218.1l5.8 7.8M344.5 216.8l5.8 7.7M358.5 215.5l5.7 7.6M372.5 214.3l5.6 7.5M386.2 213l5.6 7.4M399.9 211.8l5.5 7.4M413.4 210.6l5.5 7.3M426.7 209.4l5.4 7.2M439.9 208.2l5.4 7.1M453 207.1l5.3 7.1M465.9 205.9l5.2 7M478.7 204.7l5.2 6.9M491.4 203.6l5.1 6.9M503.9 202.5l5.1 6.8M516.4 201.4l5 6.7M528.6 200.3l5 6.6M540.8 199.2l4.9 6.6M552.8 198.1l4.9 6.5M564.7 197l4.8 6.4M576.5 196l4.8 6.4M588.2 194.9l4.7 6.3M599.7 193.9l4.7 6.2M611.1 192.8l4.6 6.2M622.4 191.8l4.6 6.1M633.6 190.8l4.5 6M644.6 189.8l4.5 6M655.6 188.8l4.4 5.9M666.4 187.9l4.4 5.9M677.2 186.9l4.4 5.8M687.8 186l4.3 5.7M698.3 185l4.3 5.7M708.7 184.1l4.2 5.6M718.9 183.2l4.2 5.6M729.1 182.2l4.1 5.5M739.2 181.3l4.1 5.4M749.2 180.4l4 5.4M759 179.6l4 5.3M768.8 178.7l4 5.3M778.5 177.8l3.9 5.2M788 176.9l3.9 5.2M797.5 176.1l3.8 5.1M806.8 175.3l3.8 5.1M816.1 174.4l3.8 5M825.3 173.6l3.7 5M834.4 172.8l3.7 4.9M843.3 172l3.6 4.9M852.2 171.2l3.6 4.8M861 170.4l3.6 4.8M869.7 169.6l3.5 4.7M878.3 168.8l3.5 4.7M886.9 168.1l3.5 4.6M895.3 167.3l3.4 4.6M903.6 166.6l3.4 4.5M911.9 165.8l3.4 4.5M920.1 165.1l3.3 4.4M928.2 164.4l3.3 4.4M936.2 163.6l3.2 4.3M944.1 162.9l3.2 4.3M952 162.2l3.2 4.2M959.7 161.5l3.1 4.2M967.4 160.8l3.1 4.2M975 160.1l3.1 4.1M982.5 159.5l3.1 4.1M990 158.8l3 4M997.3 158.1l3 4M1004.6 157.5l3 3.9M1011.8 156.8l2.9 3.9M1019 156.2l2.9 3.9M1026 155.6l2.9 3.8M1033 154.9l2.8 3.8M1040 154.3l2.8 3.7M1046.8 153.7l2.8 3.7M1053.6 153.1l2.7 3.7M1060.3 152.5l2.7 3.6M1066.9 151.9l2.7 3.6M1073.5 151.3l2.7 3.6M1080 150.7l2.6 3.5M1086.4 150.1l2.6 3.5M103.3 248.2l6.8 9.1M120 246.6l6.8 9M136.4 245l6.7 8.9M152.7 243.4l6.6 8.8M168.8 241.9l6.6 8.7M184.7 240.4l6.5 8.6M200.5 238.8l6.4 8.5M216.1 237.4l6.4 8.4M231.5 235.9l6.3 8.3M246.8 234.4l6.2 8.3M261.9 233l6.2 8.2M276.9 231.5l6.1 8.1M291.7 230.1l6 8M306.4 228.7l6 7.9M320.9 227.3l5.9 7.8M335.2 225.9l5.8 7.8M349.4 224.6l5.8 7.7M363.5 223.2l5.7 7.6M377.4 221.9l5.7 7.5M391.2 220.6l5.6 7.4M404.8 219.3l5.5 7.4M418.3 218l5.5 7.3M431.6 216.7l5.4 7.2M444.8 215.4l5.4 7.1M457.9 214.2l5.3 7.1M470.8 212.9l5.3 7M483.6 211.7l5.2 6.9M496.3 210.5l5.2 6.8M508.8 209.3l5.1 6.8M521.2 208.1l5 6.7M533.4 206.9l5 6.6M545.6 205.7l4.9 6.6M557.6 204.6l4.9 6.5M569.5 203.5l4.8 6.4M581.3 202.3l4.8 6.4M592.9 201.2l4.7 6.3M604.4 200.1l4.7 6.2M615.8 199l4.6 6.2M627.1 197.9l4.6 6.1M638.3 196.9l4.5 6M649.3 195.8l4.5 6M660.3 194.7l4.5 5.9M671.1 193.7l4.4 5.8M681.8 192.7l4.4 5.8M692.4 191.7l4.3 5.7M702.9 190.7l4.3 5.7M713.2 189.7l4.2 5.6M723.5 188.7l4.2 5.5M733.7 187.7l4.1 5.5M743.7 186.7l4.1 5.4M753.7 185.8l4.1 5.4M763.5 184.8l4 5.3M773.3 183.9l4 5.3M782.9 183l3.9 5.2M792.5 182.1l3.9 5.2M801.9 181.2l3.8 5.1M811.3 180.3l3.8 5M820.5 179.4l3.8 5M829.7 178.5l3.7 4.9M838.7 177.6l3.7 4.9M847.7 176.8l3.6 4.8M856.6 175.9l3.6 4.8M865.3 175.1l3.6 4.7M874 174.2l3.5 4.7M882.6 173.4l3.5 4.6M891.1 172.6l3.5 4.6M899.5 171.8l3.4 4.5M907.9 171l3.4 4.5M916.1 170.2l3.4 4.5M924.3 169.4l3.3 4.4M932.4 168.6l3.3 4.4M940.3 167.9l3.3 4.3M948.2 167.1l3.2 4.3M956.1 166.4l3.2 4.2M963.8 165.6l3.2 4.2M971.5 164.9l3.1 4.1M979.1 164.2l3.1 4.1M986.6 163.4l3.1 4.1M994 162.7l3 4M1001.3 162l3 4M1008.6 161.3l3 3.9M1015.8 160.6l2.9 3.9M1022.9 160l2.9 3.8M1030 159.3l2.9 3.8M1036.9 158.6l2.8 3.8M1043.8 157.9l2.8 3.7M1050.7 157.3l2.8 3.7M1057.4 156.6l2.8 3.7M1064.1 156l2.7 3.6M1070.7 155.4l2.7 3.6M1077.3 154.7l2.7 3.5M1083.8 154.1l2.6 3.5M1090.2 153.5l2.6 3.5M106.2 257.6l6.9 9.1M122.9 255.9l6.8 9M139.3 254.3l6.7 8.9M155.6 252.6l6.7 8.8M171.8 251l6.6 8.7M187.7 249.3l6.5 8.6M203.5 247.7l6.5 8.5M219.1 246.1l6.4 8.4M234.6 244.5l6.3 8.3M249.9 243l6.3 8.3M265 241.4l6.2 8.2M280 239.9l6.1 8.1M294.8 238.4l6.1 8M309.5 236.9l6 7.9M324 235.4l5.9 7.8M338.4 233.9l5.9 7.8M352.6 232.5l5.8 7.7M366.7 231.1l5.8 7.6M380.6 229.6l5.7 7.5M394.4 228.2l5.6 7.4M408 226.8l5.6 7.4M421.5 225.5l5.5 7.3M434.9 224.1l5.5 7.2M448.1 222.8l5.4 7.1M461.1 221.4l5.3 7.1M474.1 220.1l5.3 7M486.9 218.8l5.2 6.9M499.5 217.5l5.2 6.8M512.1 216.2l5.1 6.8M524.5 215l5.1 6.7M536.8 213.7l5 6.6M548.9 212.5l5 6.6M560.9 211.2l4.9 6.5M572.8 210l4.9 6.4M584.6 208.8l4.8 6.4M596.2 207.6l4.8 6.3M607.8 206.5l4.7 6.2M619.2 205.3l4.7 6.2M630.5 204.1l4.6 6.1M641.6 203l4.6 6M652.7 201.9l4.5 6M663.6 200.8l4.5 5.9M674.4 199.7l4.4 5.8M685.1 198.6l4.4 5.8M695.7 197.5l4.3 5.7M706.2 196.4l4.3 5.7M716.6 195.4l4.2 5.6M726.9 194.3l4.2 5.5M737 193.3l4.2 5.5M747.1 192.2l4.1 5.4M757 191.2l4.1 5.4M766.9 190.2l4 5.3M776.6 189.2l4 5.3M786.3 188.2l3.9 5.2M795.8 187.3l3.9 5.1M805.2 186.3l3.9 5.1M814.6 185.4l3.8 5M823.8 184.4l3.8 5M833 183.5l3.7 4.9M842 182.6l3.7 4.9M851 181.6l3.7 4.8M859.9 180.7l3.6 4.8M868.6 179.8l3.6 4.7M877.3 179l3.5 4.7M885.9 178.1l3.5 4.6M894.4 177.2l3.5 4.6M902.8 176.4l3.4 4.5M911.1 175.5l3.4 4.5M919.4 174.7l3.4 4.4M927.5 173.8l3.3 4.4M935.6 173l3.3 4.4M943.6 172.2l3.3 4.3M951.5 171.4l3.2 4.3M959.3 170.6l3.2 4.2M967 169.8l3.2 4.2M974.7 169l3.1 4.1M982.3 168.2l3.1 4.1M989.7 167.5l3.1 4M997.2 166.7l3 4M1004.5 166l3 4M1011.8 165.2l3 3.9M1018.9 164.5l2.9 3.9M1026.1 163.8l2.9 3.8M1033.1 163.1l2.9 3.8M1040.1 162.3l2.8 3.8M1047 161.6l2.8 3.7M1053.8 160.9l2.8 3.7M1060.5 160.3l2.8 3.6M1067.2 159.6l2.7 3.6M1073.8 158.9l2.7 3.6M1080.3 158.2l2.7 3.5M1086.8 157.6l2.6 3.5M106.9 267.4l6.9 9.1M123.6 265.6l6.9 9M140.1 263.8l6.8 8.9M156.5 262l6.7 8.8M172.7 260.3l6.6 8.7M188.7 258.5l6.6 8.6M204.5 256.8l6.5 8.5M220.2 255.1l6.4 8.5M235.7 253.5l6.4 8.4M251 251.8l6.3 8.3M266.2 250.2l6.2 8.2M281.2 248.5l6.2 8.1M296.1 246.9l6.1 8M310.8 245.3l6 7.9M325.4 243.8l6 7.9M339.8 242.2l5.9 7.8M354 240.7l5.9 7.7M368.1 239.1l5.8 7.6M382.1 237.6l5.7 7.5M395.9 236.1l5.7 7.4M409.5 234.6l5.6 7.4M423.1 233.2l5.6 7.3M436.5 231.7l5.5 7.2M449.7 230.3l5.4 7.1M462.8 228.9l5.4 7.1M475.8 227.5l5.3 7M488.6 226.1l5.3 6.9M501.3 224.7l5.2 6.8M513.8 223.4l5.2 6.8M526.3 222l5.1 6.7M538.6 220.7l5 6.6M550.7 219.4l5 6.6M562.8 218.1l4.9 6.5M574.7 216.8l4.9 6.4M586.5 215.5l4.8 6.4M598.2 214.2l4.8 6.3M609.7 213l4.7 6.2M621.1 211.7l4.7 6.2M632.4 210.5l4.6 6.1M643.6 209.3l4.6 6M654.7 208.1l4.5 6M665.6 206.9l4.5 5.9M676.5 205.8l4.4 5.8M687.2 204.6l4.4 5.8M697.8 203.4l4.4 5.7M708.3 202.3l4.3 5.7M718.7 201.2l4.3 5.6M729 200.1l4.2 5.5M739.2 199l4.2 5.5M749.2 197.9l4.1 5.4M759.2 196.8l4.1 5.4M769 195.7l4 5.3M778.8 194.7l4 5.3M788.5 193.6l4 5.2M798 192.6l3.9 5.2M807.5 191.6l3.9 5.1M816.8 190.6l3.8 5M826.1 189.6l3.8 5M835.2 188.6l3.8 4.9M844.3 187.6l3.7 4.9M853.2 186.6l3.7 4.8M862.1 185.7l3.6 4.8M870.9 184.7l3.6 4.7M879.6 183.8l3.6 4.7M888.2 182.8l3.5 4.6M896.7 181.9l3.5 4.6M905.1 181l3.5 4.5M913.4 180.1l3.4 4.5M921.7 179.2l3.4 4.4M929.8 178.3l3.3 4.4M937.9 177.5l3.3 4.4M945.9 176.6l3.3 4.3M953.8 175.7l3.2 4.3M961.6 174.9l3.2 4.2M969.3 174.1l3.2 4.2M977 173.2l3.1 4.1M984.6 172.4l3.1 4.1M992.1 171.6l3.1 4M999.5 170.8l3 4M1006.8 170l3 4M1014.1 169.2l3 3.9M1021.3 168.4l3 3.9M1028.4 167.7l2.9 3.8M1035.4 166.9l2.9 3.8M1042.4 166.2l2.9 3.8M1049.3 165.4l2.8 3.7M1056.1 164.7l2.8 3.7M1062.8 163.9l2.8 3.6M1069.5 163.2l2.7 3.6M1076.1 162.5l2.7 3.6M1082.7 161.8l2.7 3.5M1089.1 161.1l2.7 3.5M105.4 277.5l7 9.1M122.2 275.5l6.9 9M138.8 273.6l6.8 8.9M155.2 271.8l6.8 8.9M171.5 269.9l6.7 8.8M187.5 268.1l6.6 8.7M203.4 266.2l6.6 8.6M219.2 264.4l6.5 8.5M234.8 262.7l6.4 8.4M250.2 260.9l6.4 8.3M265.4 259.1l6.3 8.2M280.5 257.4l6.2 8.1M295.4 255.7l6.2 8M310.2 254l6.1 8M324.8 252.3l6 7.9M339.3 250.7l6 7.8M353.6 249.1l5.9 7.7M367.8 247.4l5.8 7.6M381.8 245.8l5.8 7.6M395.6 244.2l5.7 7.5M409.3 242.7l5.7 7.4M422.9 241.1l5.6 7.3M436.4 239.6l5.5 7.2M449.6 238.1l5.5 7.2M462.8 236.6l5.4 7.1M475.8 235.1l5.4 7M488.7 233.6l5.3 6.9M501.4 232.1l5.3 6.9M514 230.7l5.2 6.8M526.5 229.3l5.1 6.7M538.8 227.9l5.1 6.7M551 226.5l5 6.6M563.1 225.1l5 6.5M575.1 223.7l4.9 6.4M586.9 222.4l4.9 6.4M598.6 221l4.8 6.3M610.2 219.7l4.8 6.2M621.7 218.4l4.7 6.2M633 217.1l4.7 6.1M644.2 215.8l4.6 6.1M655.3 214.5l4.6 6M666.3 213.3l4.5 5.9M677.2 212l4.5 5.9M687.9 210.8l4.4 5.8M698.6 209.6l4.4 5.7M709.1 208.4l4.3 5.7M719.5 207.2l4.3 5.6M729.9 206l4.3 5.6M740.1 204.8l4.2 5.5M750.2 203.7l4.2 5.4M760.1 202.5l4.1 5.4M770 201.4l4.1 5.3M779.8 200.3l4 5.3M789.5 199.2l4 5.2M799.1 198.1l3.9 5.2M808.5 197l3.9 5.1M817.9 195.9l3.9 5.1M827.2 194.9l3.8 5M836.4 193.8l3.8 4.9M845.5 192.8l3.7 4.9M854.4 191.7l3.7 4.8M863.3 190.7l3.7 4.8M872.1 189.7l3.6 4.7M880.8 188.7l3.6 4.7M889.5 187.7l3.6 4.6M898 186.8l3.5 4.6M906.4 185.8l3.5 4.5M914.8 184.8l3.4 4.5M923 183.9l3.4 4.5M931.2 183l3.4 4.4M939.3 182l3.3 4.4M947.3 181.1l3.3 4.3M955.2 180.2l3.3 4.3M963 179.3l3.2 4.2M970.8 178.4l3.2 4.2M978.4 177.6l3.2 4.1M986 176.7l3.1 4.1M993.5 175.8l3.1 4M1001 175l3.1 4M1008.3 174.1l3 4M1015.6 173.3l3 3.9M1022.8 172.5l3 3.9M1029.9 171.7l2.9 3.8M1037 170.9l2.9 3.8M1043.9 170.1l2.9 3.8M1050.8 169.3l2.8 3.7M1057.7 168.5l2.8 3.7M1064.4 167.7l2.8 3.6M1071.1 167l2.8 3.6M1077.7 166.2l2.7 3.6M1084.3 165.5l2.7 3.5M1090.7 164.7l2.7 3.5M101.7 287.9l7.1 9.2M118.6 285.8l7 9.1M135.3 283.8l6.9 9M151.8 281.8l6.8 8.9M168.1 279.9l6.8 8.8M184.3 277.9l6.7 8.7M200.3 276l6.6 8.6M216.1 274.1l6.6 8.5M231.8 272.2l6.5 8.4M247.3 270.3l6.4 8.4M262.6 268.5l6.4 8.3M277.8 266.6l6.3 8.2M292.8 264.8l6.2 8.1M307.7 263l6.2 8M322.4 261.3l6.1 7.9M336.9 259.5l6 7.8M351.3 257.8l6 7.8M365.6 256l5.9 7.7M379.6 254.3l5.8 7.6M393.6 252.7l5.8 7.5M407.4 251l5.7 7.4M421 249.3l5.7 7.4M434.5 247.7l5.6 7.3M447.9 246.1l5.5 7.2M461.1 244.5l5.5 7.1M474.2 242.9l5.4 7.1M487.1 241.4l5.4 7M499.9 239.8l5.3 6.9M512.6 238.3l5.2 6.8M525.1 236.8l5.2 6.8M537.5 235.3l5.1 6.7M549.8 233.8l5.1 6.6M562 232.3l5 6.5M574 230.9l5 6.5M585.9 229.5l4.9 6.4M597.6 228l4.9 6.3M609.3 226.6l4.8 6.3M620.8 225.2l4.8 6.2M632.2 223.9l4.7 6.1M643.5 222.5l4.7 6.1M654.6 221.2l4.6 6M665.6 219.8l4.6 5.9M676.6 218.5l4.5 5.9M687.4 217.2l4.5 5.8M698.1 215.9l4.4 5.8M708.6 214.6l4.4 5.7M719.1 213.4l4.3 5.6M729.5 212.1l4.3 5.6M739.7 210.9l4.2 5.5M749.8 209.7l4.2 5.5M759.9 208.5l4.2 5.4M769.8 207.3l4.1 5.4M779.6 206.1l4.1 5.3M789.3 204.9l4 5.2M799 203.7l4 5.2M808.5 202.6l3.9 5.1M817.9 201.5l3.9 5.1M827.2 200.3l3.9 5M836.4 199.2l3.8 5M845.5 198.1l3.8 4.9M854.6 197l3.7 4.9M863.5 196l3.7 4.8M872.3 194.9l3.7 4.8M881 193.8l3.6 4.7M889.7 192.8l3.6 4.7M898.2 191.8l3.5 4.6M906.7 190.7l3.5 4.6M915.1 189.7l3.5 4.5M923.4 188.7l3.4 4.5M931.6 187.7l3.4 4.4M939.7 186.8l3.4 4.4M947.7 185.8l3.3 4.3M955.7 184.8l3.3 4.3M963.5 183.9l3.3 4.2M971.3 182.9l3.2 4.2M979 182l3.2 4.1M986.6 181.1l3.2 4.1M994.1 180.2l3.1 4.1M1001.6 179.3l3.1 4M1009 178.4l3.1 4M1016.3 177.5l3 3.9M1023.5 176.6l3 3.9M1030.6 175.8l3 3.9M1037.7 174.9l2.9 3.8M1044.7 174.1l2.9 3.8M1051.6 173.3l2.9 3.7M1058.4 172.4l2.8 3.7M1065.2 171.6l2.8 3.7M1071.9 170.8l2.8 3.6M1078.5 170l2.7 3.6M1085.1 169.2l2.7 3.5M1091.6 168.4l2.7 3.5M112.6 296.6l7.1 9.2M129.4 294.5l7 9.1M146.1 292.3l6.9 9M162.6 290.2l6.9 8.9M178.9 288.2l6.8 8.8M195 286.1l6.7 8.7M210.9 284.1l6.6 8.6M226.7 282.1l6.6 8.5M242.3 280.1l6.5 8.4M257.8 278.2l6.4 8.3M273.1 276.2l6.4 8.2M288.2 274.3l6.3 8.2M303.2 272.4l6.2 8.1M318 270.5l6.2 8M332.6 268.6l6.1 7.9M347.1 266.8l6 7.8M361.5 265l6 7.7M375.7 263.2l5.9 7.6M389.7 261.4l5.8 7.6M403.6 259.6l5.8 7.5M417.3 257.9l5.7 7.4M430.9 256.2l5.7 7.3M444.4 254.5l5.6 7.3M457.7 252.8l5.5 7.2M470.9 251.1l5.5 7.1M483.9 249.4l5.4 7M496.8 247.8l5.4 6.9M509.6 246.2l5.3 6.9M522.2 244.6l5.3 6.8M534.7 243l5.2 6.7M547 241.4l5.1 6.7M559.2 239.9l5.1 6.6M571.3 238.3l5 6.5M583.3 236.8l5 6.4M595.1 235.3l4.9 6.4M606.8 233.8l4.9 6.3M618.4 232.4l4.8 6.2M629.9 230.9l4.8 6.2M641.2 229.5l4.7 6.1M652.5 228l4.7 6M663.6 226.6l4.6 6M674.6 225.2l4.6 5.9M685.4 223.8l4.5 5.9M696.2 222.5l4.5 5.8M706.8 221.1l4.4 5.7M717.4 219.8l4.4 5.7M727.8 218.5l4.3 5.6M738.1 217.2l4.3 5.6M748.3 215.9l4.2 5.5M758.4 214.6l4.2 5.4M768.4 213.3l4.2 5.4M778.2 212.1l4.1 5.3M788 210.8l4.1 5.3M797.7 209.6l4 5.2M807.2 208.4l4 5.2M816.7 207.2l3.9 5.1M826.1 206l3.9 5M835.3 204.8l3.9 5M844.5 203.6l3.8 4.9M853.6 202.5l3.8 4.9M862.5 201.4l3.7 4.8M871.4 200.2l3.7 4.8M880.2 199.1l3.7 4.7M888.9 198l3.6 4.7M897.5 196.9l3.6 4.6M906 195.8l3.5 4.6M914.4 194.8l3.5 4.5M922.7 193.7l3.5 4.5M931 192.7l3.4 4.4M939.1 191.6l3.4 4.4M947.2 190.6l3.4 4.3M955.2 189.6l3.3 4.3M963.1 188.6l3.3 4.3M970.9 187.6l3.3 4.2M978.6 186.6l3.2 4.2M986.3 185.6l3.2 4.1M993.8 184.7l3.1 4.1M1001.3 183.7l3.1 4M1008.7 182.8l3.1 4M1016.1 181.9l3 3.9M1023.3 180.9l3 3.9M1030.5 180l3 3.9M1037.6 179.1l3 3.8M1044.6 178.2l2.9 3.8M1051.5 177.3l2.9 3.7M1058.4 176.5l2.9 3.7M1065.2 175.6l2.8 3.7M1072 174.8l2.8 3.6M1078.6 173.9l2.8 3.6M1085.2 173.1l2.7 3.6M1091.7 172.2l2.7 3.5M104.3 307.8l7.2 9.3M121.3 305.5l7.1 9.2M138.1 303.3l7 9.1M154.7 301.1l7 9M171.2 298.9l6.9 8.9M187.5 296.7l6.8 8.8M203.6 294.6l6.7 8.7M219.5 292.4l6.7 8.6M235.3 290.3l6.6 8.5M250.8 288.3l6.5 8.4M266.3 286.2l6.5 8.3M281.5 284.2l6.4 8.2M296.6 282.2l6.3 8.1M311.6 280.2l6.2 8.1M326.4 278.2l6.2 8M341 276.2l6.1 7.9M355.5 274.3l6.1 7.8M369.8 272.4l6 7.7M383.9 270.5l5.9 7.6M398 268.6l5.9 7.6M411.8 266.8l5.8 7.5M425.5 265l5.7 7.4M439.1 263.2l5.7 7.3M452.5 261.4l5.6 7.2M465.8 259.6l5.6 7.2M478.9 257.8l5.5 7.1M491.9 256.1l5.4 7M504.8 254.4l5.4 6.9M517.5 252.7l5.3 6.9M530.1 251l5.3 6.8M542.6 249.4l5.2 6.7M554.9 247.7l5.2 6.6M567.1 246.1l5.1 6.6M579.2 244.5l5 6.5M591.1 242.9l5 6.4M602.9 241.3l4.9 6.4M614.6 239.8l4.9 6.3M626.1 238.2l4.8 6.2M637.6 236.7l4.8 6.2M648.9 235.2l4.7 6.1M660.1 233.7l4.7 6M671.1 232.2l4.6 6M682.1 230.8l4.6 5.9M692.9 229.3l4.5 5.8M703.7 227.9l4.5 5.8M714.3 226.5l4.4 5.7M724.8 225.1l4.4 5.7M735.1 223.7l4.3 5.6M745.4 222.3l4.3 5.5M755.6 221l4.3 5.5M765.6 219.6l4.2 5.4M775.6 218.3l4.2 5.4M785.4 217l4.1 5.3M795.2 215.7l4.1 5.2M804.8 214.4l4 5.2M814.3 213.1l4 5.1M823.8 211.9l3.9 5.1M833.1 210.6l3.9 5M842.3 209.4l3.9 5M851.4 208.2l3.8 4.9M860.5 207l3.8 4.9M869.4 205.8l3.7 4.8M878.3 204.6l3.7 4.8M887 203.4l3.7 4.7M895.7 202.3l3.6 4.7M904.2 201.1l3.6 4.6M912.7 200l3.5 4.6M921.1 198.9l3.5 4.5M929.4 197.8l3.5 4.5M937.6 196.7l3.4 4.4M945.7 195.6l3.4 4.4M953.7 194.5l3.4 4.3M961.7 193.5l3.3 4.3M969.5 192.4l3.3 4.2M977.3 191.4l3.3 4.2M985 190.4l3.2 4.1M992.6 189.3l3.2 4.1M1000.2 188.3l3.1 4.1M1007.6 187.3l3.1 4M1015 186.4l3.1 4M1022.3 185.4l3 3.9M1029.5 184.4l3 3.9M1036.6 183.5l3 3.8M1043.7 182.5l3 3.8M1050.7 181.6l2.9 3.8M1057.6 180.7l2.9 3.7M1064.4 179.8l2.9 3.7M1071.2 178.9l2.8 3.6M1077.9 178l2.8 3.6M1084.5 177.1l2.8 3.6M1091.1 176.2l2.7 3.5M161.1 310.1l7 9M177.6 307.8l6.9 8.9M193.9 305.5l6.8 8.8M210 303.3l6.8 8.7M225.9 301.1l6.7 8.6M241.7 298.9l6.6 8.5M257.3 296.7l6.6 8.4M272.7 294.5l6.5 8.3M288 292.4l6.4 8.2M303.1 290.3l6.3 8.1M318 288.2l6.3 8.1M332.8 286.1l6.2 8M347.4 284.1l6.1 7.9M361.9 282.1l6.1 7.8M376.2 280.1l6 7.7M390.4 278.1l6 7.6M404.4 276.1l5.9 7.5M418.2 274.2l5.8 7.5M431.9 272.3l5.8 7.4M445.5 270.4l5.7 7.3M458.9 268.5l5.6 7.2M472.2 266.6l5.6 7.2M485.3 264.8l5.5 7.1M498.3 263l5.5 7M511.2 261.2l5.4 6.9M523.9 259.4l5.3 6.9M536.5 257.7l5.3 6.8M548.9 255.9l5.2 6.7M561.2 254.2l5.2 6.6M573.4 252.5l5.1 6.6M585.4 250.8l5.1 6.5M597.4 249.1l5 6.4M609.2 247.5l5 6.4M620.8 245.9l4.9 6.3M632.4 244.2l4.9 6.2M643.8 242.7l4.8 6.2M655.1 241.1l4.7 6.1M666.3 239.5l4.7 6M677.3 238l4.6 6M688.2 236.4l4.6 5.9M699.1 234.9l4.5 5.8M709.8 233.4l4.5 5.8M720.4 231.9l4.5 5.7M730.8 230.5l4.4 5.6M741.2 229l4.4 5.6M751.5 227.6l4.3 5.5M761.6 226.2l4.3 5.5M771.6 224.8l4.2 5.4M781.6 223.4l4.2 5.4M791.4 222l4.1 5.3M801.1 220.7l4.1 5.2M810.7 219.3l4 5.2M820.2 218l4 5.1M829.6 216.7l4 5.1M839 215.4l3.9 5M848.2 214.1l3.9 5M857.3 212.8l3.8 4.9M866.3 211.5l3.8 4.9M875.2 210.3l3.7 4.8M884 209.1l3.7 4.8M892.8 207.8l3.7 4.7M901.4 206.6l3.6 4.7M909.9 205.4l3.6 4.6M918.4 204.3l3.6 4.6M926.7 203.1l3.5 4.5M935 201.9l3.5 4.5M943.2 200.8l3.4 4.4M951.3 199.7l3.4 4.4M959.3 198.5l3.4 4.3M967.2 197.4l3.3 4.3M975.1 196.3l3.3 4.2M982.8 195.3l3.3 4.2M990.5 194.2l3.2 4.1M998.1 193.1l3.2 4.1M1005.6 192.1l3.2 4M1013 191l3.1 4M1020.3 190l3.1 4M1027.6 189l3.1 3.9M1034.8 188l3 3.9M1041.9 187l3 3.8M1049 186l3 3.8M1055.9 185l2.9 3.8M1062.8 184.1l2.9 3.7M1069.6 183.1l2.9 3.7M1076.4 182.2l2.8 3.6M1083 181.2l2.8 3.6M1089.6 180.3l2.8 3.6M230.2 310l6.7 8.6M246 307.7l6.7 8.5M261.6 305.4l6.6 8.4M277.1 303.1l6.5 8.3M292.4 300.9l6.5 8.2M307.5 298.7l6.4 8.2M322.5 296.5l6.3 8.1M337.3 294.3l6.3 8M351.9 292.2l6.2 7.9M366.4 290.1l6.1 7.8M380.8 288l6.1 7.7M394.9 285.9l6 7.6M409 283.9l5.9 7.6M422.8 281.8l5.9 7.5M436.6 279.8l5.8 7.4M450.1 277.8l5.7 7.3M463.6 275.9l5.7 7.2M476.8 273.9l5.6 7.2M490 272l5.6 7.1M503 270.1l5.5 7M515.9 268.2l5.4 6.9M528.6 266.4l5.4 6.9M541.2 264.5l5.3 6.8M553.6 262.7l5.3 6.7M565.9 260.9l5.2 6.6M578.1 259.1l5.1 6.6M590.2 257.3l5.1 6.5M602.1 255.6l5 6.4M613.9 253.9l5 6.4M625.6 252.2l4.9 6.3M637.1 250.5l4.9 6.2M648.5 248.8l4.8 6.2M659.8 247.2l4.8 6.1M671 245.5l4.7 6M682.1 243.9l4.7 6M693 242.3l4.6 5.9M703.8 240.7l4.6 5.8M714.5 239.2l4.5 5.8M725.1 237.6l4.5 5.7M735.6 236.1l4.4 5.6M746 234.6l4.4 5.6M756.2 233.1l4.3 5.5M766.4 231.6l4.3 5.5M776.4 230.1l4.2 5.4M786.3 228.7l4.2 5.4M796.1 227.2l4.1 5.3M805.9 225.8l4.1 5.2M815.5 224.4l4.1 5.2M825 223l4 5.1M834.4 221.6l4 5.1M843.7 220.3l3.9 5M852.9 218.9l3.9 5M862 217.6l3.8 4.9M871 216.3l3.8 4.9M879.9 215l3.8 4.8M888.7 213.7l3.7 4.8M897.4 212.4l3.7 4.7M906.1 211.1l3.6 4.6M914.6 209.9l3.6 4.6M923 208.7l3.6 4.6M931.4 207.4l3.5 4.5M939.6 206.2l3.5 4.5M947.8 205l3.5 4.4M955.9 203.9l3.4 4.4M963.9 202.7l3.4 4.3M971.8 201.5l3.3 4.3M979.6 200.4l3.3 4.2M987.4 199.2l3.3 4.2M995 198.1l3.2 4.1M1002.6 197l3.2 4.1M1010.1 195.9l3.2 4M1017.5 194.8l3.1 4M1024.8 193.8l3.1 4M1032.1 192.7l3.1 3.9M1039.3 191.7l3 3.9M1046.4 190.6l3 3.8M1053.4 189.6l3 3.8M1060.3 188.6l2.9 3.7M1067.2 187.6l2.9 3.7M1074 186.6l2.9 3.7M1080.7 185.6l2.8 3.6M1087.4 184.6l2.8 3.6M294.8 309.8l6.5 8.3M309.9 307.5l6.4 8.2M324.9 305.2l6.4 8.1M339.8 302.9l6.3 8M354.5 300.7l6.2 7.9M369 298.4l6.2 7.8M383.4 296.2l6.1 7.8M397.6 294.1l6 7.7M411.7 291.9l6 7.6M425.6 289.8l5.9 7.5M439.4 287.7l5.8 7.4M453 285.6l5.8 7.3M466.4 283.5l5.7 7.3M479.8 281.5l5.7 7.2M492.9 279.5l5.6 7.1M506 277.5l5.5 7M518.9 275.5l5.5 7M531.6 273.6l5.4 6.9M544.2 271.6l5.4 6.8M556.7 269.7l5.3 6.7M569.1 267.9l5.2 6.7M581.3 266l5.2 6.6M593.4 264.1l5.1 6.5M605.3 262.3l5.1 6.4M617.1 260.5l5 6.4M628.8 258.7l5 6.3M640.4 257l4.9 6.2M651.8 255.2l4.9 6.2M663.2 253.5l4.8 6.1M674.4 251.8l4.8 6M685.4 250.1l4.7 6M696.4 248.4l4.7 5.9M707.2 246.7l4.6 5.8M718 245.1l4.6 5.8M728.6 243.5l4.5 5.7M739.1 241.9l4.5 5.7M749.4 240.3l4.4 5.6M759.7 238.7l4.4 5.5M769.9 237.2l4.3 5.5M779.9 235.6l4.3 5.4M789.8 234.1l4.2 5.4M799.7 232.6l4.2 5.3M809.4 231.1l4.1 5.2M819 229.7l4.1 5.2M828.5 228.2l4 5.1M837.9 226.8l4 5.1M847.2 225.3l4 5M856.4 223.9l3.9 5M865.6 222.5l3.9 4.9M874.6 221.2l3.8 4.9M883.5 219.8l3.8 4.8M892.3 218.4l3.7 4.8M901 217.1l3.7 4.7M909.7 215.8l3.7 4.7M918.2 214.5l3.6 4.6M926.6 213.2l3.6 4.6M935 211.9l3.5 4.5M943.2 210.7l3.5 4.5M951.4 209.4l3.5 4.4M959.5 208.2l3.4 4.4M967.5 207l3.4 4.3M975.4 205.7l3.4 4.3M983.2 204.6l3.3 4.2M991 203.4l3.3 4.2M998.6 202.2l3.3 4.1M1006.2 201l3.2 4.1M1013.7 199.9l3.2 4M1021.1 198.8l3.1 4M1028.4 197.6l3.1 4M1035.7 196.5l3.1 3.9M1042.9 195.4l3 3.9M1050 194.4l3 3.8M1057 193.3l3 3.8M1063.9 192.2l3 3.7M1070.8 191.2l2.9 3.7M1077.6 190.1l2.9 3.7M1084.3 189.1l2.9 3.6M1091 188.1l2.8 3.6M355.1 309.5l6.3 8M369.7 307.1l6.2 7.9M384.1 304.8l6.2 7.8M398.4 302.6l6.1 7.7M412.5 300.3l6 7.6M426.5 298.1l6 7.5M440.3 295.9l5.9 7.5M454 293.7l5.8 7.4M467.5 291.5l5.8 7.3M480.9 289.4l5.7 7.2M494.1 287.3l5.7 7.1M507.2 285.2l5.6 7.1M520.2 283.1l5.5 7M533 281.1l5.5 6.9M545.6 279.1l5.4 6.8M558.2 277.1l5.4 6.8M570.6 275.1l5.3 6.7M582.8 273.2l5.2 6.6M595 271.2l5.2 6.5M607 269.3l5.1 6.5M618.8 267.4l5.1 6.4M630.6 265.5l5 6.3M642.2 263.7l5 6.3M653.7 261.9l4.9 6.2M665 260l4.9 6.1M676.3 258.3l4.8 6.1M687.4 256.5l4.7 6M698.4 254.7l4.7 5.9M709.2 253l4.6 5.9M720 251.3l4.6 5.8M730.6 249.6l4.5 5.7M741.2 247.9l4.5 5.7M751.6 246.2l4.4 5.6M761.9 244.6l4.4 5.6M772 243l4.4 5.5M782.1 241.4l4.3 5.4M792.1 239.8l4.3 5.4M801.9 238.2l4.2 5.3M811.7 236.7l4.2 5.3M821.3 235.1l4.1 5.2M830.9 233.6l4.1 5.1M840.3 232.1l4 5.1M849.6 230.6l4 5M858.9 229.1l3.9 5M868 227.7l3.9 4.9M877 226.2l3.9 4.9M886 224.8l3.8 4.8M894.8 223.4l3.8 4.8M903.5 222l3.7 4.7M912.2 220.6l3.7 4.7M920.7 219.3l3.7 4.6M929.2 217.9l3.6 4.6M937.6 216.6l3.6 4.5M945.8 215.3l3.5 4.5M954 214l3.5 4.4M962.1 212.7l3.5 4.4M970.1 211.4l3.4 4.3M978.1 210.1l3.4 4.3M985.9 208.9l3.3 4.2M993.7 207.6l3.3 4.2M1001.3 206.4l3.3 4.1M1008.9 205.2l3.2 4.1M1016.4 204l3.2 4M1023.8 202.8l3.2 4M1031.2 201.7l3.1 4M1038.4 200.5l3.1 3.9M1045.6 199.4l3.1 3.9M1052.7 198.2l3 3.8M1059.7 197.1l3 3.8M1066.7 196l3 3.7M1073.6 194.9l2.9 3.7M1080.4 193.8l2.9 3.7M1087.1 192.7l2.9 3.6M411.4 309.1l6.1 7.7M425.5 306.8l6 7.6M439.4 304.5l6 7.5M453.1 302.2l5.9 7.4M466.8 299.9l5.9 7.3M480.2 297.7l5.8 7.3M493.5 295.5l5.7 7.2M506.7 293.3l5.7 7.1M519.7 291.1l5.6 7M532.6 289l5.5 7M545.4 286.9l5.5 6.9M558 284.8l5.4 6.8M570.4 282.7l5.4 6.7M582.7 280.7l5.3 6.7M594.9 278.6l5.2 6.6M607 276.6l5.2 6.5M618.9 274.6l5.1 6.4M630.7 272.7l5.1 6.4M642.4 270.7l5 6.3M654 268.8l5 6.2M665.4 266.9l4.9 6.2M676.7 265l4.9 6.1M687.8 263.2l4.8 6M698.9 261.4l4.7 6M709.8 259.5l4.7 5.9M720.6 257.7l4.6 5.8M731.3 256l4.6 5.8M741.9 254.2l4.5 5.7M752.3 252.5l4.5 5.6M762.7 250.8l4.4 5.6M772.9 249.1l4.4 5.5M783 247.4l4.4 5.5M793 245.7l4.3 5.4M802.9 244.1l4.3 5.3M812.7 242.4l4.2 5.3M822.4 240.8l4.2 5.2M832 239.2l4.1 5.2M841.5 237.7l4.1 5.1M850.8 236.1l4 5.1M860.1 234.6l4 5M869.3 233l3.9 4.9M878.3 231.5l3.9 4.9M887.3 230l3.9 4.8M896.2 228.6l3.8 4.8M905 227.1l3.8 4.7M913.6 225.7l3.7 4.7M922.2 224.2l3.7 4.6M930.7 222.8l3.6 4.6M939.1 221.4l3.6 4.5M947.4 220.1l3.6 4.5M955.6 218.7l3.5 4.4M963.8 217.3l3.5 4.4M971.8 216l3.5 4.3M979.7 214.7l3.4 4.3M987.6 213.4l3.4 4.2M995.4 212.1l3.3 4.2M1003.1 210.8l3.3 4.2M1010.7 209.5l3.3 4.1M1018.2 208.3l3.2 4.1M1025.6 207.1l3.2 4M1033 205.8l3.2 4M1040.3 204.6l3.1 3.9M1047.5 203.4l3.1 3.9M1054.6 202.2l3.1 3.8M1061.6 201.1l3 3.8M1068.6 199.9l3 3.8M1075.5 198.8l3 3.7M1082.3 197.6l2.9 3.7M1089.1 196.5l2.9 3.6M464.1 308.7l5.9 7.4M477.7 306.4l5.9 7.3M491.1 304.1l5.8 7.2M504.4 301.8l5.7 7.2M517.5 299.5l5.7 7.1M530.5 297.3l5.6 7M543.3 295l5.6 6.9M556 292.9l5.5 6.9M568.6 290.7l5.4 6.8M581 288.5l5.4 6.7M593.3 286.4l5.3 6.6M605.4 284.3l5.3 6.6M617.4 282.2l5.2 6.5M629.3 280.2l5.1 6.4M641.1 278.1l5.1 6.3M652.7 276.1l5 6.3M664.2 274.1l5 6.2M675.6 272.2l4.9 6.1M686.8 270.2l4.9 6.1M697.9 268.3l4.8 6M708.9 266.4l4.8 5.9M719.8 264.5l4.7 5.9M730.6 262.7l4.7 5.8M741.2 260.8l4.6 5.7M751.7 259l4.6 5.7M762.1 257.2l4.5 5.6M772.4 255.4l4.5 5.6M782.6 253.7l4.4 5.5M792.7 251.9l4.4 5.4M802.6 250.2l4.3 5.4M812.5 248.5l4.3 5.3M822.2 246.8l4.2 5.3M831.9 245.1l4.2 5.2M841.4 243.5l4.1 5.1M850.8 241.9l4.1 5.1M860.2 240.2l4 5M869.4 238.7l4 5M878.5 237.1l3.9 4.9M887.5 235.5l3.9 4.9M896.4 234l3.9 4.8M905.2 232.5l3.8 4.8M914 230.9l3.8 4.7M922.6 229.4l3.7 4.7M931.1 228l3.7 4.6M939.6 226.5l3.7 4.6M947.9 225.1l3.6 4.5M956.2 223.6l3.6 4.5M964.3 222.2l3.5 4.4M972.4 220.8l3.5 4.4M980.4 219.5l3.5 4.3M988.3 218.1l3.4 4.3M996.1 216.7l3.4 4.2M1003.8 215.4l3.3 4.2M1011.5 214.1l3.3 4.1M1019 212.8l3.3 4.1M1026.5 211.5l3.2 4M1033.9 210.2l3.2 4M1041.2 208.9l3.2 3.9M1048.5 207.7l3.1 3.9M1055.6 206.4l3.1 3.9M1062.7 205.2l3.1 3.8M1069.7 204l3 3.8M1076.6 202.8l3 3.7M1083.4 201.6l3 3.7M1090.2 200.5l2.9 3.7M500.1 310.7l5.8 7.2M513.4 308.4l5.8 7.2M526.5 306l5.7 7.1M539.4 303.7l5.6 7M552.3 301.4l5.6 6.9M564.9 299.1l5.5 6.9M577.5 296.8l5.5 6.8M589.9 294.6l5.4 6.7M602.1 292.4l5.3 6.6M614.2 290.2l5.3 6.6M626.2 288.1l5.2 6.5M638.1 285.9l5.2 6.4M649.8 283.8l5.1 6.3M661.4 281.7l5 6.3M672.9 279.7l5 6.2M684.2 277.6l4.9 6.1M695.4 275.6l4.9 6.1M706.5 273.6l4.8 6M717.5 271.7l4.8 5.9M728.4 269.7l4.7 5.9M739.1 267.8l4.7 5.8M749.7 265.9l4.6 5.7M760.2 264l4.6 5.7M770.6 262.1l4.5 5.6M780.8 260.3l4.5 5.5M791 258.4l4.4 5.5M801 256.6l4.4 5.4M810.9 254.9l4.3 5.4M820.8 253.1l4.3 5.3M830.5 251.3l4.2 5.2M840.1 249.6l4.2 5.2M849.6 247.9l4.1 5.1M859 246.2l4.1 5.1M868.3 244.6l4 5M877.4 242.9l4 5M886.5 241.3l4 4.9M895.5 239.7l3.9 4.9M904.4 238.1l3.9 4.8M913.2 236.5l3.8 4.7M921.9 234.9l3.8 4.7M930.5 233.4l3.7 4.6M939 231.8l3.7 4.6M947.4 230.3l3.7 4.5M955.7 228.8l3.6 4.5M963.9 227.4l3.6 4.4M972 225.9l3.5 4.4M980.1 224.5l3.5 4.3M988 223l3.5 4.3M995.9 221.6l3.4 4.2M1003.6 220.2l3.4 4.2M1011.3 218.8l3.3 4.2M1018.9 217.5l3.3 4.1M1026.5 216.1l3.3 4.1M1033.9 214.8l3.2 4M1041.3 213.4l3.2 4M1048.5 212.1l3.2 3.9M1055.7 210.8l3.1 3.9M1062.8 209.6l3.1 3.8M1069.9 208.3l3.1 3.8M1076.8 207.1l3 3.8M1083.7 205.8l3 3.7M1090.5 204.6l3 3.7M546.7 310.4l5.7 7M559.5 308l5.6 6.9M572.2 305.6l5.6 6.9M584.7 303.3l5.5 6.8M597.1 301l5.4 6.7M609.3 298.7l5.4 6.6M621.5 296.4l5.3 6.6M633.4 294.2l5.3 6.5M645.3 292l5.2 6.4M657 289.8l5.1 6.3M668.6 287.6l5.1 6.3M680.1 285.5l5 6.2M691.4 283.4l5 6.1M702.6 281.3l4.9 6.1M713.7 279.2l4.9 6M724.6 277.1l4.8 5.9M735.5 275.1l4.7 5.9M746.2 273.1l4.7 5.8M756.8 271.1l4.6 5.7M767.3 269.2l4.6 5.7M777.6 267.3l4.5 5.6M787.9 265.3l4.5 5.5M798 263.4l4.4 5.5M808 261.6l4.4 5.4M817.9 259.7l4.3 5.4M827.7 257.9l4.3 5.3M837.4 256.1l4.2 5.2M847 254.3l4.2 5.2M856.5 252.5l4.2 5.1M865.9 250.8l4.1 5.1M875.1 249l4.1 5M884.3 247.3l4 5M893.4 245.6l4 4.9M902.3 244l3.9 4.8M911.2 242.3l3.9 4.8M920 240.7l3.8 4.7M928.6 239.1l3.8 4.7M937.2 237.5l3.8 4.6M945.7 235.9l3.7 4.6M954.1 234.3l3.7 4.5M962.3 232.8l3.6 4.5M970.5 231.2l3.6 4.4M978.6 229.7l3.6 4.4M986.7 228.2l3.5 4.3M994.6 226.7l3.5 4.3M1002.4 225.3l3.4 4.2M1010.2 223.8l3.4 4.2M1017.8 222.4l3.4 4.1M1025.4 221l3.3 4.1M1032.9 219.6l3.3 4.1M1040.3 218.2l3.2 4M1047.7 216.8l3.2 4M1054.9 215.5l3.2 3.9M1062.1 214.1l3.1 3.9M1069.2 212.8l3.1 3.8M1076.2 211.5l3.1 3.8M1083.1 210.2l3 3.7M1090 208.9l3 3.7M590.2 310.1l5.5 6.8M602.6 307.7l5.5 6.7M614.9 305.3l5.4 6.6M627 302.9l5.4 6.6M639 300.6l5.3 6.5M650.9 298.3l5.2 6.4M662.6 296l5.2 6.4M674.2 293.8l5.1 6.3M685.7 291.6l5.1 6.2M697 289.4l5 6.1M708.2 287.2l4.9 6.1M719.3 285l4.9 6M730.3 282.9l4.8 5.9M741.1 280.8l4.8 5.9M751.9 278.7l4.7 5.8M762.5 276.7l4.7 5.7M773 274.6l4.6 5.7M783.3 272.6l4.6 5.6M793.6 270.6l4.5 5.6M803.7 268.7l4.5 5.5M813.7 266.7l4.4 5.4M823.6 264.8l4.4 5.4M833.4 262.9l4.3 5.3M843.1 261l4.3 5.2M852.7 259.2l4.2 5.2M862.2 257.4l4.2 5.1M871.6 255.5l4.1 5.1M880.8 253.7l4.1 5M890 252l4 5M899 250.2l4 4.9M908 248.5l4 4.9M916.9 246.8l3.9 4.8M925.6 245.1l3.9 4.7M934.3 243.4l3.8 4.7M942.8 241.7l3.8 4.6M951.3 240.1l3.7 4.6M959.7 238.5l3.7 4.5M968 236.9l3.7 4.5M976.1 235.3l3.6 4.4M984.2 233.7l3.6 4.4M992.2 232.2l3.5 4.3M1000.2 230.6l3.5 4.3M1008 229.1l3.5 4.2M1015.7 227.6l3.4 4.2M1023.4 226.1l3.4 4.1M1030.9 224.7l3.3 4.1M1038.4 223.2l3.3 4.1M1045.8 221.8l3.3 4M1053.1 220.3l3.2 4M1060.4 218.9l3.2 3.9M1067.5 217.6l3.2 3.9M1074.6 216.2l3.1 3.8M1081.6 214.8l3.1 3.8M1088.5 213.5l3.1 3.7M630.9 309.8l5.4 6.6M642.9 307.4l5.3 6.5M654.8 305l5.3 6.5M666.6 302.6l5.2 6.4M678.2 300.3l5.2 6.3M689.7 298l5.1 6.2M701.1 295.7l5.1 6.2M712.4 293.4l5 6.1M723.5 291.2l4.9 6M734.5 289l4.9 6M745.3 286.8l4.8 5.9M756.1 284.6l4.8 5.8M766.7 282.5l4.7 5.8M777.2 280.4l4.7 5.7M787.6 278.3l4.6 5.6M797.9 276.2l4.6 5.6M808 274.2l4.5 5.5M818.1 272.2l4.5 5.4M828 270.2l4.4 5.4M837.8 268.2l4.4 5.3M847.5 266.3l4.3 5.3M857.1 264.3l4.3 5.2M866.6 262.4l4.2 5.1M876 260.5l4.2 5.1M885.3 258.7l4.1 5M894.5 256.8l4.1 5M903.5 255l4 4.9M912.5 253.2l4 4.9M921.4 251.4l3.9 4.8M930.1 249.7l3.9 4.8M938.8 247.9l3.8 4.7M947.4 246.2l3.8 4.6M955.8 244.5l3.8 4.6M964.2 242.8l3.7 4.5M972.5 241.2l3.7 4.5M980.7 239.5l3.6 4.4M988.8 237.9l3.6 4.4M996.8 236.3l3.6 4.3M1004.7 234.7l3.5 4.3M1012.5 233.1l3.5 4.2M1020.3 231.6l3.4 4.2M1027.9 230l3.4 4.1M1035.5 228.5l3.4 4.1M1043 227l3.3 4.1M1050.4 225.5l3.3 4M1057.7 224l3.2 4M1064.9 222.6l3.2 3.9M1072.1 221.2l3.2 3.9M1079.1 219.7l3.1 3.8M1086.1 218.3l3.1 3.8M669 309.6l5.3 6.4M680.7 307.2l5.2 6.3M692.2 304.8l5.2 6.3M703.6 302.4l5.1 6.2M714.9 300l5.1 6.1M726.1 297.7l5 6.1M737.2 295.4l4.9 6M748.1 293.1l4.9 5.9M758.9 290.9l4.8 5.9M769.5 288.7l4.8 5.8M780.1 286.5l4.7 5.7M790.5 284.3l4.7 5.7M800.8 282.1l4.6 5.6M811 280l4.6 5.5M821.1 277.9l4.5 5.5M831.1 275.9l4.5 5.4M840.9 273.8l4.4 5.3M850.7 271.8l4.4 5.3M860.3 269.8l4.3 5.2M869.8 267.8l4.3 5.2M879.2 265.8l4.2 5.1M888.5 263.9l4.2 5M897.7 262l4.1 5M906.8 260.1l4.1 4.9M915.8 258.2l4 4.9M924.7 256.4l4 4.8M933.5 254.5l3.9 4.8M942.2 252.7l3.9 4.7M950.8 250.9l3.8 4.7M959.3 249.2l3.8 4.6M967.7 247.4l3.8 4.6M976 245.7l3.7 4.5M984.2 244l3.7 4.5M992.3 242.3l3.6 4.4M1000.3 240.6l3.6 4.4M1008.2 239l3.5 4.3M1016.1 237.3l3.5 4.3M1023.8 235.7l3.5 4.2M1031.5 234.1l3.4 4.2M1039.1 232.6l3.4 4.1M1046.6 231l3.4 4.1M1054 229.5l3.3 4M1061.3 227.9l3.3 4M1068.6 226.4l3.2 3.9M1075.7 224.9l3.2 3.9M1082.8 223.5l3.2 3.8M1089.8 222l3.1 3.8M704.6 309.5l5.2 6.2M715.9 307l5.1 6.2M727.2 304.6l5.1 6.1M738.3 302.2l5 6M749.3 299.8l4.9 6M760.1 297.5l4.9 5.9M770.9 295.2l4.8 5.8M781.5 292.9l4.8 5.8M792 290.6l4.7 5.7M802.3 288.4l4.7 5.6M812.6 286.2l4.6 5.6M822.7 284l4.6 5.5M832.7 281.9l4.5 5.4M842.6 279.7l4.5 5.4M852.4 277.6l4.4 5.3M862.1 275.5l4.4 5.3M871.7 273.5l4.3 5.2M881.1 271.4l4.3 5.1M890.5 269.4l4.2 5.1M899.7 267.4l4.2 5M908.9 265.5l4.1 5M917.9 263.5l4.1 4.9M926.8 261.6l4 4.9M935.7 259.7l4 4.8M944.4 257.8l3.9 4.7M953 255.9l3.9 4.7M961.6 254.1l3.8 4.6M970 252.3l3.8 4.6M978.3 250.5l3.8 4.5M986.6 248.7l3.7 4.5M994.7 247l3.7 4.4M1002.8 245.2l3.6 4.4M1010.7 243.5l3.6 4.3M1018.6 241.8l3.5 4.3M1026.4 240.1l3.5 4.2M1034.1 238.5l3.5 4.2M1041.7 236.8l3.4 4.1M1049.2 235.2l3.4 4.1M1056.6 233.6l3.3 4M1064 232l3.3 4M1071.3 230.5l3.3 3.9M1078.4 228.9l3.2 3.9M1085.5 227.4l3.2 3.9M737.8 309.5l5.1 6.1M748.9 307l5 6M759.9 304.6l5 6M770.7 302.1l4.9 5.9M781.4 299.8l4.9 5.8M791.9 297.4l4.8 5.7M802.4 295.1l4.7 5.7M812.7 292.8l4.7 5.6M822.9 290.5l4.6 5.6M833 288.2l4.6 5.5M843 286l4.5 5.4M852.9 283.8l4.5 5.4M862.6 281.6l4.4 5.3M872.2 279.5l4.4 5.2M881.8 277.4l4.3 5.2M891.2 275.3l4.3 5.1M900.5 273.2l4.2 5.1M909.7 271.2l4.2 5M918.8 269.1l4.1 4.9M927.8 267.1l4.1 4.9M936.7 265.1l4 4.8M945.5 263.2l4 4.8M954.1 261.2l3.9 4.7M962.7 259.3l3.9 4.7M971.2 257.4l3.9 4.6M979.6 255.6l3.8 4.6M987.9 253.7l3.8 4.5M996.1 251.9l3.7 4.5M1004.2 250.1l3.7 4.4M1012.2 248.3l3.6 4.4M1020.1 246.5l3.6 4.3M1027.9 244.8l3.6 4.3M1035.7 243.1l3.5 4.2M1043.3 241.4l3.5 4.2M1050.9 239.7l3.4 4.1M1058.3 238l3.4 4.1M1065.7 236.4l3.4 4M1073 234.8l3.3 4M1080.2 233.1l3.3 3.9M1087.4 231.6l3.2 3.9M768.9 309.6l5 5.9M779.7 307.1l4.9 5.9M790.4 304.6l4.9 5.8M800.9 302.2l4.8 5.7M811.4 299.8l4.8 5.7M821.7 297.4l4.7 5.6M831.9 295.1l4.7 5.5M841.9 292.7l4.6 5.5M851.9 290.4l4.6 5.4M861.7 288.2l4.5 5.4M871.4 285.9l4.4 5.3M881.1 283.7l4.4 5.2M890.6 281.5l4.3 5.2M899.9 279.4l4.3 5.1M909.2 277.2l4.2 5.1M918.4 275.1l4.2 5M927.5 273l4.1 4.9M936.4 271l4.1 4.9M945.3 268.9l4 4.8M954 266.9l4 4.8M962.7 264.9l4 4.7M971.2 262.9l3.9 4.7M979.7 261l3.9 4.6M988 259.1l3.8 4.5M996.3 257.2l3.8 4.5M1004.5 255.3l3.7 4.4M1012.5 253.4l3.7 4.4M1020.5 251.6l3.6 4.3M1028.4 249.8l3.6 4.3M1036.2 248l3.6 4.2M1043.9 246.2l3.5 4.2M1051.5 244.4l3.5 4.1M1059 242.7l3.4 4.1M1066.4 241l3.4 4M1073.8 239.3l3.4 4M1081 237.6l3.3 4M1088.2 236l3.3 3.9M797.9 309.8l4.9 5.8M808.5 307.3l4.9 5.7M818.9 304.8l4.8 5.7M829.2 302.3l4.7 5.6M839.4 299.9l4.7 5.6M849.5 297.5l4.6 5.5M859.4 295.2l4.6 5.4M869.2 292.8l4.5 5.4M878.9 290.5l4.5 5.3M888.6 288.2l4.4 5.2M898 286l4.4 5.2M907.4 283.7l4.3 5.1M916.7 281.5l4.3 5.1M925.8 279.3l4.2 5M934.9 277.2l4.2 4.9M943.8 275l4.1 4.9M952.7 272.9l4.1 4.8M961.4 270.9l4 4.8M970.1 268.8l4 4.7M978.6 266.8l3.9 4.7M987 264.8l3.9 4.6M995.4 262.8l3.8 4.5M1003.6 260.8l3.8 4.5M1011.8 258.9l3.8 4.4M1019.8 257l3.7 4.4M1027.8 255.1l3.7 4.3M1035.6 253.2l3.6 4.3M1043.4 251.3l3.6 4.2M1051.1 249.5l3.5 4.2M1058.7 247.7l3.5 4.1M1066.2 245.9l3.5 4.1M1073.6 244.2l3.4 4M1080.9 242.4l3.4 4M1088.1 240.7l3.3 3.9M825 310.2l4.9 5.7M835.3 307.6l4.8 5.6M845.5 305.1l4.7 5.6M855.6 302.6l4.7 5.5M865.5 300.2l4.6 5.4M875.4 297.8l4.6 5.4M885.1 295.4l4.5 5.3M894.7 293l4.5 5.2M904.2 290.7l4.4 5.2M913.6 288.4l4.4 5.1M922.9 286.1l4.3 5.1M932 283.8l4.3 5M941.1 281.6l4.2 4.9M950.1 279.4l4.2 4.9M958.9 277.2l4.1 4.8M967.6 275.1l4.1 4.8M976.3 273l4 4.7M984.8 270.9l4 4.7M993.2 268.8l3.9 4.6M1001.6 266.7l3.9 4.5M1009.8 264.7l3.8 4.5M1018 262.7l3.8 4.4M1026 260.7l3.7 4.4M1033.9 258.8l3.7 4.3M1041.8 256.8l3.6 4.3M1049.6 254.9l3.6 4.2M1057.2 253.1l3.6 4.2M1064.8 251.2l3.5 4.1M1072.3 249.3l3.5 4.1M1079.7 247.5l3.4 4M1087 245.7l3.4 4M850.2 310.7l4.8 5.6M860.3 308.1l4.7 5.5M870.3 305.6l4.7 5.5M880.2 303.1l4.6 5.4M889.9 300.6l4.6 5.3M899.6 298.2l4.5 5.3M909.1 295.7l4.5 5.2M918.5 293.4l4.4 5.1M927.8 291l4.4 5.1M937 288.7l4.3 5M946.1 286.4l4.3 5M955 284.1l4.2 4.9M963.9 281.8l4.2 4.8M972.7 279.6l4.1 4.8M981.3 277.4l4.1 4.7M989.9 275.2l4 4.7M998.3 273.1l4 4.6M1006.7 271l3.9 4.6M1014.9 268.9l3.9 4.5M1023.1 266.8l3.8 4.5M1031.1 264.8l3.8 4.4M1039.1 262.8l3.7 4.3M1046.9 260.8l3.7 4.3M1054.7 258.8l3.6 4.2M1062.4 256.8l3.6 4.2M1070 254.9l3.6 4.1M1077.5 253l3.5 4.1M1084.9 251.1l3.5 4M883.5 308.8l4.7 5.4M893.4 306.2l4.6 5.4M903 303.7l4.6 5.3M912.6 301.2l4.5 5.2M922.1 298.7l4.5 5.2M931.4 296.3l4.4 5.1M940.6 293.9l4.4 5M949.8 291.5l4.3 5M958.8 289.1l4.3 4.9M967.7 286.8l4.2 4.9M976.5 284.5l4.2 4.8M985.1 282.2l4.1 4.8M993.7 280l4.1 4.7M1002.2 277.7l4 4.6M1010.6 275.5l4 4.6M1018.9 273.4l3.9 4.5M1027 271.2l3.9 4.5M1035.1 269.1l3.8 4.4M1043.1 267l3.8 4.4M1051 265l3.7 4.3M1058.8 262.9l3.7 4.3M1066.5 260.9l3.6 4.2M1074.1 258.9l3.6 4.2M1081.6 256.9l3.5 4.1M1089 255l3.5 4.1M905.1 309.7l4.6 5.3M914.8 307.1l4.6 5.3M924.3 304.5l4.5 5.2M933.7 302l4.5 5.2M943 299.4l4.4 5.1M952.2 297l4.4 5M961.2 294.5l4.3 5M970.2 292.1l4.3 4.9M979 289.7l4.2 4.8M987.8 287.4l4.2 4.8M996.4 285l4.1 4.7M1004.9 282.7l4.1 4.7M1013.4 280.4l4 4.6M1021.7 278.2l4 4.6M1029.9 276l3.9 4.5M1038 273.8l3.9 4.4M1046.1 271.6l3.8 4.4M1054 269.5l3.8 4.3M1061.8 267.4l3.7 4.3M1069.6 265.3l3.7 4.2M1077.2 263.2l3.6 4.2M1084.8 261.2l3.6 4.1M905.8 316.1l4.7 5.4M915.5 313.4l4.7 5.3M925.1 310.7l4.6 5.3M934.6 308.1l4.6 5.2M944 305.5l4.5 5.1M953.2 302.9l4.4 5.1M962.4 300.4l4.4 5M971.4 297.9l4.3 5M980.3 295.4l4.3 4.9M989.2 292.9l4.2 4.8M997.9 290.5l4.2 4.8M1006.5 288.1l4.1 4.7M1014.9 285.7l4.1 4.7M1023.3 283.4l4 4.6M1031.6 281.1l4 4.5M1039.8 278.8l3.9 4.5M1047.9 276.6l3.9 4.4M1055.9 274.3l3.8 4.4M1063.8 272.1l3.8 4.3M1071.6 270l3.7 4.3M1079.2 267.8l3.7 4.2M1086.8 265.7l3.7 4.2M905 323.1l4.8 5.5M914.8 320.3l4.8 5.4M924.5 317.5l4.7 5.3M934.1 314.7l4.6 5.3M943.6 312l4.6 5.2M953 309.3l4.5 5.1M962.2 306.7l4.5 5.1M971.3 304.1l4.4 5M980.4 301.5l4.4 4.9M989.3 298.9l4.3 4.9M998 296.4l4.3 4.8M1006.7 293.9l4.2 4.8M1015.3 291.5l4.2 4.7M1023.8 289l4.1 4.7M1032.1 286.6l4.1 4.6M1040.4 284.3l4 4.5M1048.6 281.9l4 4.5M1056.6 279.6l3.9 4.4M1064.6 277.3l3.9 4.4M1072.4 275.1l3.8 4.3M1080.2 272.8l3.8 4.3M1087.9 270.6l3.7 4.2M902.6 330.7l4.9 5.5M912.6 327.7l4.9 5.5M922.5 324.8l4.8 5.4M932.2 322l4.8 5.3M941.8 319.1l4.7 5.3M951.3 316.3l4.6 5.2M960.6 313.6l4.6 5.1M969.9 310.8l4.5 5.1M979 308.1l4.5 5M988 305.5l4.4 5M996.9 302.8l4.4 4.9M1005.7 300.2l4.3 4.8M1014.4 297.7l4.2 4.8M1023 295.1l4.2 4.7M1031.4 292.6l4.1 4.7M1039.8 290.2l4.1 4.6M1048 287.7l4 4.5M1056.2 285.3l4 4.5M1064.2 282.9l3.9 4.4M1072.2 280.6l3.9 4.4M1080 278.3l3.8 4.3M1087.8 276l3.8 4.3M908.8 335.9l5 5.6M918.8 332.8l4.9 5.5M928.7 329.8l4.9 5.4M938.4 326.9l4.8 5.4M948.1 323.9l4.8 5.3M957.6 321l4.7 5.2M967 318.2l4.6 5.2M976.2 315.3l4.6 5.1M985.4 312.6l4.5 5M994.4 309.8l4.5 5M1003.3 307.1l4.4 4.9M1012.1 304.4l4.3 4.8M1020.8 301.8l4.3 4.8M1029.4 299.2l4.2 4.7M1037.9 296.6l4.2 4.7M1046.3 294l4.1 4.6M1054.5 291.5l4.1 4.5M1062.7 289l4 4.5M1070.8 286.6l4 4.4M1078.7 284.1l3.9 4.4M1086.6 281.8l3.9 4.3M903.3 344.7l5.1 5.7M913.5 341.5l5.1 5.6M923.6 338.4l5 5.5M933.5 335.3l4.9 5.5M943.3 332.2l4.9 5.4M953 329.2l4.8 5.3M962.5 326.2l4.8 5.3M972 323.2l4.7 5.2M981.3 320.3l4.6 5.1M990.5 317.4l4.6 5.1M999.5 314.6l4.5 5M1008.5 311.8l4.5 4.9M1017.3 309l4.4 4.9M1026.1 306.3l4.3 4.8M1034.7 303.6l4.3 4.7M1043.2 300.9l4.2 4.7M1051.6 298.3l4.2 4.6M1059.9 295.7l4.1 4.6M1068.1 293.1l4.1 4.5M1076.2 290.6l4 4.5M1084.1 288.1l4 4.4M906.4 351.1l5.2 5.7M916.7 347.8l5.2 5.7M926.9 344.5l5.1 5.6M936.9 341.3l5 5.5M946.7 338.1l5 5.4M956.5 334.9l4.9 5.4M966.1 331.8l4.8 5.3M975.6 328.8l4.8 5.2M985 325.7l4.7 5.2M994.2 322.7l4.7 5.1M1003.4 319.8l4.6 5M1012.4 316.9l4.5 5M1021.3 314l4.5 4.9M1030.1 311.2l4.4 4.8M1038.7 308.4l4.4 4.8M1047.3 305.6l4.3 4.7M1055.8 302.9l4.2 4.7M1064.1 300.2l4.2 4.6M1072.3 297.5l4.1 4.5M1080.4 294.9l4.1 4.5M1088.5 292.3l4 4.4M908 358l5.3 5.8M918.4 354.6l5.3 5.7M928.6 351.2l5.2 5.6M938.7 347.8l5.1 5.6M948.7 344.5l5.1 5.5M958.6 341.2l5 5.4M968.3 338l4.9 5.4M977.9 334.8l4.9 5.3M987.3 331.7l4.8 5.2M996.7 328.6l4.7 5.2M1005.9 325.5l4.7 5.1M1015 322.5l4.6 5M1024 319.5l4.6 5M1032.8 316.6l4.5 4.9M1041.6 313.7l4.4 4.8M1050.2 310.8l4.4 4.8M1058.7 308l4.3 4.7M1067.1 305.2l4.3 4.6M1075.4 302.4l4.2 4.6M1083.6 299.7l4.2 4.5M1091.7 297l4.1 4.5M907.9 365.7l5.5 5.9M918.5 362.1l5.4 5.8M928.8 358.5l5.3 5.7M939.1 355l5.2 5.6M949.2 351.6l5.2 5.6M959.1 348.2l5.1 5.5M969 344.8l5 5.4M978.7 341.5l5 5.4M988.2 338.2l4.9 5.3M997.7 335l4.8 5.2M1007 331.8l4.8 5.1M1016.2 328.7l4.7 5.1M1025.3 325.6l4.7 5M1034.3 322.5l4.6 4.9M1043.1 319.5l4.5 4.9M1051.8 316.5l4.5 4.8M1060.4 313.6l4.4 4.7M1068.9 310.7l4.4 4.7M1077.3 307.8l4.3 4.6M1085.5 305l4.2 4.6M906.2 374.1l5.6 6M916.9 370.3l5.5 5.9M927.4 366.6l5.5 5.8M937.8 363l5.4 5.7M948.1 359.4l5.3 5.7M958.2 355.8l5.2 5.6M968.2 352.3l5.2 5.5M978 348.8l5.1 5.4M987.7 345.4l5 5.4M997.3 342.1l5 5.3M1006.7 338.7l4.9 5.2M1016.1 335.5l4.8 5.1M1025.3 332.2l4.8 5.1M1034.3 329l4.7 5M1043.3 325.9l4.6 4.9M1052.1 322.8l4.6 4.9M1060.9 319.7l4.5 4.8M1069.4 316.7l4.4 4.7M1077.9 313.7l4.4 4.7M1086.3 310.8l4.3 4.6M902.7 383.4l5.8 6.1M913.6 379.4l5.7 6M924.3 375.5l5.6 5.9M934.9 371.7l5.5 5.8M945.3 367.9l5.5 5.8M955.6 364.2l5.4 5.7M965.7 360.5l5.3 5.6M975.8 356.9l5.2 5.5M985.6 353.4l5.2 5.5M995.4 349.8l5.1 5.4M1005 346.4l5 5.3M1014.5 342.9l5 5.2M1023.8 339.5l4.9 5.2M1033 336.2l4.8 5.1M1042.1 332.9l4.8 5M1051.1 329.7l4.7 5M1060 326.5l4.6 4.9M1068.7 323.3l4.6 4.8M1077.3 320.2l4.5 4.8M1085.8 317.1l4.4 4.7M908.4 389.5l5.9 6.1M919.3 385.4l5.8 6M930.1 381.4l5.7 6M940.8 377.4l5.6 5.9M951.3 373.5l5.5 5.8M961.6 369.7l5.5 5.7M971.9 365.9l5.4 5.6M981.9 362.1l5.3 5.6M991.9 358.4l5.2 5.5M1001.7 354.8l5.2 5.4M1011.3 351.2l5.1 5.3M1020.9 347.6l5 5.3M1030.3 344.1l5 5.2M1039.5 340.7l4.9 5.1M1048.7 337.3l4.8 5M1057.7 333.9l4.8 5M1066.6 330.6l4.7 4.9M1075.3 327.4l4.6 4.8M1084 324.1l4.6 4.8M901.2 400.6l6.1 6.3M912.4 396.3l6 6.2M923.5 392.1l5.9 6.1M934.4 387.9l5.8 6M945.2 383.8l5.7 5.9M955.8 379.7l5.7 5.9M966.2 375.7l5.6 5.8M976.5 371.8l5.5 5.7M986.7 367.9l5.4 5.6M996.7 364.1l5.3 5.5M1006.6 360.3l5.3 5.5M1016.3 356.5l5.2 5.4M1025.9 352.9l5.1 5.3M1035.4 349.3l5 5.2M1044.7 345.7l5 5.2M1053.9 342.2l4.9 5.1M1063 338.7l4.8 5M1071.9 335.3l4.8 4.9M1080.8 331.9l4.7 4.9M1089.5 328.6l4.6 4.8M903.5 408.4l6.2 6.4M914.8 403.9l6.1 6.3M926 399.5l6 6.2M937.1 395.1l5.9 6.1M948 390.9l5.9 6M958.7 386.6l5.8 5.9M969.3 382.5l5.7 5.8M979.7 378.4l5.6 5.8M990 374.3l5.5 5.7M1000.1 370.4l5.5 5.6M1010.1 366.4l5.4 5.5M1019.9 362.6l5.3 5.4M1029.6 358.7l5.2 5.4M1039.2 355l5.2 5.3M1048.6 351.3l5.1 5.2M1057.9 347.6l5 5.1M1067.1 344l4.9 5.1M1076.1 340.5l4.9 5M1085 337l4.8 4.9M904 417l6.4 6.5M915.5 412.4l6.3 6.4M926.9 407.8l6.2 6.3M938.1 403.2l6.1 6.2M949.1 398.8l6 6.1M960 394.4l5.9 6M970.7 390l5.8 5.9M981.3 385.7l5.8 5.8M991.7 381.5l5.7 5.7M1002 377.4l5.6 5.7M1012.1 373.3l5.5 5.6M1022.1 369.2l5.4 5.5M1031.9 365.3l5.3 5.4M1041.6 361.4l5.3 5.3M1051.1 357.5l5.2 5.3M1060.5 353.7l5.1 5.2M1069.8 349.9l5 5.1M1078.9 346.2l5 5M1087.9 342.6l4.9 5M926 417l6.4 6.4M937.4 412.2l6.3 6.3M948.6 407.6l6.2 6.2M959.7 403l6.1 6.1M970.6 398.4l6 6M981.3 394l5.9 5.9M991.9 389.5l5.8 5.8M1002.4 385.2l5.7 5.7M1012.6 380.9l5.7 5.7M1022.8 376.7l5.6 5.6M1032.8 372.6l5.5 5.5M1042.6 368.5l5.4 5.4M1052.3 364.4l5.3 5.3M1061.8 360.5l5.3 5.3M1071.2 356.6l5.2 5.2M1080.5 352.7l5.1 5.1M1089.6 348.9l5 5M946.3 417.4l6.4 6.3M957.6 412.6l6.3 6.2M968.7 407.8l6.2 6.1M979.7 403.1l6.1 6M990.5 398.5l6 5.9M1001.1 393.9l5.9 5.8M1011.6 389.5l5.8 5.8M1021.9 385l5.7 5.7M1032.1 380.7l5.7 5.6M1042.1 376.4l5.6 5.5M1052 372.2l5.5 5.4M1061.7 368l5.4 5.3M1071.3 363.9l5.3 5.3M1080.7 359.9l5.2 5.2M1090 355.9l5.2 5.1M976.3 413.3l6.3 6.2M987.3 408.5l6.2 6.1M998.2 403.7l6.1 6M1008.9 399l6 5.9M1019.5 394.3l5.9 5.8M1029.9 389.7l5.8 5.7M1040.1 385.2l5.7 5.6M1050.2 380.8l5.7 5.5M1060.1 376.5l5.6 5.4M1069.9 372.2l5.5 5.4M1079.5 367.9l5.4 5.3M1089 363.8l5.3 5.2M993.5 414.5l6.3 6.1M1004.5 409.6l6.2 6M1015.3 404.7l6.1 5.9M1026 399.9l6 5.8M1036.5 395.1l6 5.7M1046.8 390.4l5.9 5.6M1056.9 385.8l5.8 5.6M1066.9 381.3l5.7 5.5M1076.8 376.9l5.6 5.4M1086.5 372.5l5.5 5.3M1009.3 416.2l6.4 6.1M1020.3 411.1l6.3 6M1031.1 406.1l6.2 5.9M1041.7 401.2l6.1 5.8M1052.1 396.3l6 5.7M1062.4 391.6l5.9 5.6M1072.5 386.9l5.8 5.5M1082.4 382.2l5.7 5.4M1034.7 413.2l6.4 5.9M1045.5 408.1l6.2 5.9M1056.1 403l6.1 5.8M1066.5 398l6 5.7M1076.8 393.1l6 5.6M1086.8 388.3l5.9 5.5M1047.9 415.8l6.4 5.9M1058.7 410.5l6.3 5.8M1069.3 405.3l6.2 5.7M1079.7 400.2l6.1 5.6M1089.9 395.1l6 5.5M1070.7 413.5l6.4 5.8M1081.3 408.1l6.3 5.7M1091.7 402.8l6.2 5.6M1081.5 417l6.5 5.8" stroke="#f6ebe4" stroke-width="1.2" fill="none"/></g><defs><clipPath id="st"><polygon points="122,278 143,309 122,309"/></clipPath></defs><g clip-path="url(#st)"><rect x="122" y="276" width="24" height="34" fill="#111"/><path d="M120 272.0l30 5" stroke="#eee" stroke-width="1.5"/><path d="M120 275.4l30 5" stroke="#eee" stroke-width="1.5"/><path d="M120 278.8l30 5" stroke="#eee" stroke-width="1.5"/><path d="M120 282.2l30 5" stroke="#eee" stroke-width="1.5"/><path d="M120 285.6l30 5" stroke="#eee" stroke-width="1.5"/><path d="M120 289.0l30 5" stroke="#eee" stroke-width="1.5"/><path d="M120 292.4l30 5" stroke="#eee" stroke-width="1.5"/><path d="M120 295.8l30 5" stroke="#eee" stroke-width="1.5"/><path d="M120 299.2l30 5" stroke="#eee" stroke-width="1.5"/><path d="M120 302.6l30 5" stroke="#eee" stroke-width="1.5"/></g><polyline points="25,290 73,211 1003,146 1189,281" fill="none" stroke="#3ccfe0" stroke-width="2.2"/><polyline points="25,426 97,413" fill="none" stroke="#3ccfe0" stroke-width="2"/><polyline points="1160,402 1189,414" fill="none" stroke="#3ccfe0" stroke-width="2"/></g></svg>
<svg class="a" style="left:1115px;top:115px;" width="60" height="42" viewBox="0 0 60 42"><ellipse cx="30" cy="28" rx="27" ry="10" fill="#8a8a8a"/><ellipse cx="30" cy="27" rx="20" ry="6.5" fill="#111"/><path d="M17 8l13-5 13 5v17l-13 6-13-6z" fill="#9a9a9a"/><path d="M30 13v18M17 8l13 5 13-5" stroke="#777" fill="none"/></svg>
<svg class="a" style="left:36px;top:765px;" width="32" height="32" viewBox="0 0 32 32"><path d="M6 26V6" stroke="#2a2adc" stroke-width="1.5"/><path d="M6 26l17-6" stroke="#30b030" stroke-width="1.5"/><path d="M6 26l20 3" stroke="#d02020" stroke-width="1.5"/><text x="8" y="8" font-size="7" fill="#2a2adc" font-family="Liberation Sans">z</text><text x="20" y="19" font-size="7" fill="#30b030" font-family="Liberation Sans">y</text><text x="22" y="29" font-size="7" fill="#d02020" font-family="Liberation Sans">x</text></svg>
<div class="a" style="left:0px;top:86px;width:23px;height:780px;background:#444444;"></div>
<div class="a" style="left:1px;top:88px;width:20px;height:2px;background:repeating-linear-gradient(90deg,#8a8a8a 0 1px,transparent 1px 2px)"></div>
<svg class="a" style="left:2px;top:96px;" width="18" height="18" viewBox="0 0 18 18"><path d="M9 1l8 4v9l-8 4-8-4V5z" fill="none" stroke="#999" stroke-width="1"/><path d="M6 8q3-4 6 0v6H6z" fill="#c03030"/></svg>
<svg class="a" style="left:2px;top:120px;" width="18" height="18" viewBox="0 0 18 18"><path d="M9 1l8 4v9l-8 4-8-4V5z" fill="none" stroke="#999" stroke-width="1"/><path d="M9 6q-3 4-3 6a3 3 0 0 0 6 0q0-2-3-6z" fill="none" stroke="#4a80d0" stroke-width="1.3"/></svg>
<svg class="a" style="left:2px;top:144px;" width="18" height="18" viewBox="0 0 18 18"><circle cx="9" cy="9" r="8" fill="none" stroke="#c03030" stroke-width="1.4"/><path d="M9 3q-5 6-5 9a5 5 0 0 0 10 0q0-3-5-9z" fill="none" stroke="#c03030" stroke-width="1.4"/></svg>
<svg class="a" style="left:2px;top:168px;" width="18" height="18" viewBox="0 0 18 18"><circle cx="9" cy="9" r="8" fill="none" stroke="#4a80d0" stroke-width="1.4"/><path d="M9 4q-4 5-4 7a4 4 0 0 0 8 0q0-2-4-7z" fill="none" stroke="#4a80d0" stroke-width="1.4"/></svg>
<svg class="a" style="left:2px;top:191px;" width="18" height="18" viewBox="0 0 18 18"><circle cx="9" cy="9" r="8" fill="none" stroke="#d8b030" stroke-width="1.4"/><circle cx="10" cy="6" r="3" fill="none" stroke="#d8b030" stroke-width="1.3"/><circle cx="6" cy="11" r="2" fill="none" stroke="#d8b030" stroke-width="1.3"/><circle cx="11" cy="13" r="1.5" fill="none" stroke="#d8b030" stroke-width="1.2"/></svg>
<svg class="a" style="left:2px;top:215px;" width="18" height="18" viewBox="0 0 18 18"><circle cx="9" cy="9" r="8" fill="none" stroke="#b040a0" stroke-width="1.4"/><rect x="5" y="6" width="7" height="7" fill="none" stroke="#b040a0" stroke-width="1.3"/></svg>
<svg class="a" style="left:2px;top:246px;" width="18" height="18" viewBox="0 0 18 18"><path d="M9 1l7 8-7 8-7-8z" fill="none" stroke="#30b040" stroke-width="1.5"/><circle cx="9" cy="9" r="3" fill="none" stroke="#30b040" stroke-width="1.3"/></svg>
<svg class="a" style="left:2px;top:270px;" width="18" height="18" viewBox="0 0 18 18"><path d="M1 3v13M1 9h14M11 5l4 4-4 4" fill="none" stroke="#30b040" stroke-width="1.6"/></svg>
<svg class="a" style="left:2px;top:294px;" width="18" height="18" viewBox="0 0 18 18"><rect x="1" y="1" width="16" height="16" fill="none" stroke="#30b040" stroke-width="1.5"/><rect x="1" y="9" width="8" height="8" fill="#30b040"/><rect x="9" y="1" width="8" height="8" fill="#30b040" opacity=".5"/></svg>
<svg class="a" style="left:2px;top:318px;" width="18" height="18" viewBox="0 0 18 18"><g stroke="#30b040" stroke-width="1.3"><path d="M9 1v16M1 9h16M3 3l12 12M15 3L3 15"/></g></svg>
<svg class="a" style="left:2px;top:350px;" width="18" height="18" viewBox="0 0 18 18"><path d="M3 2l13 7-13 7z" fill="#bbb"/></svg>
<svg class="a" style="left:2px;top:374px;" width="18" height="18" viewBox="0 0 18 18"><rect x="3" y="2" width="4" height="14" fill="#bbb"/><rect x="10" y="2" width="4" height="14" fill="#bbb"/></svg>
<div class="a" style="left:3px;top:238px;width:18px;height:2px;background:#222;"></div>
<div class="a" style="left:3px;top:341px;width:18px;height:2px;background:#222;"></div>
<div class="a" style="left:9px;top:397px;width:1px;height:22px;background:#777;"></div>
<svg class="a" style="left:12px;top:455px;" width="10" height="14" viewBox="0 0 10 14"><path d="M2 1a7 7 0 0 1 0 12" fill="none" stroke="#d89030" stroke-width="1.5"/></svg>
<svg class="a" style="left:12px;top:477px;" width="10" height="14" viewBox="0 0 10 14"><path d="M2 1a7 7 0 0 1 0 12" fill="none" stroke="#ccc" stroke-width="1.5"/></svg>
<svg class="a" style="left:12px;top:499px;" width="10" height="14" viewBox="0 0 10 14"><path d="M2 1a7 7 0 0 1 0 12" fill="none" stroke="#e0a030" stroke-width="1.5"/></svg>
<svg class="a" style="left:12px;top:521px;" width="10" height="14" viewBox="0 0 10 14"><path d="M2 1a7 7 0 0 1 0 12" fill="none" stroke="#e0a030" stroke-width="1.5"/></svg>
<svg class="a" style="left:12px;top:547px;" width="10" height="14" viewBox="0 0 10 14"><path d="M2 1a7 7 0 0 1 0 12" fill="none" stroke="#ddd" stroke-width="1.5"/></svg>
<svg class="a" style="left:12px;top:574px;" width="10" height="14" viewBox="0 0 10 14"><path d="M2 1a7 7 0 0 1 0 12" fill="none" stroke="#ddd" stroke-width="1.5"/></svg>
<svg class="a" style="left:12px;top:598px;" width="10" height="14" viewBox="0 0 10 14"><path d="M2 1a7 7 0 0 1 0 12" fill="none" stroke="#ccc" stroke-width="1.5"/></svg>
<svg class="a" style="left:12px;top:620px;" width="10" height="14" viewBox="0 0 10 14"><path d="M2 1a7 7 0 0 1 0 12" fill="none" stroke="#ddd" stroke-width="1.5"/></svg>
<svg class="a" style="left:12px;top:653px;" width="10" height="14" viewBox="0 0 10 14"><path d="M2 1a7 7 0 0 1 0 12" fill="none" stroke="#4a90d0" stroke-width="1.5"/></svg>
<svg class="a" style="left:12px;top:675px;" width="10" height="14" viewBox="0 0 10 14"><path d="M2 1a7 7 0 0 1 0 12" fill="none" stroke="#ddd" stroke-width="1.5"/></svg>
<svg class="a" style="left:12px;top:700px;" width="10" height="14" viewBox="0 0 10 14"><path d="M2 1a7 7 0 0 1 0 12" fill="none" stroke="#ccc" stroke-width="1.5"/></svg>
<div class="a" style="left:17px;top:444px;width:6px;height:1px;background:#222;"></div>
<div class="a" style="left:17px;top:643px;width:6px;height:1px;background:#222;"></div>
<div class="a" style="left:21px;top:420px;width:2px;height:300px;background:#3a3a3a;"></div>
<svg class="a" style="left:1px;top:722px;" width="18" height="18" viewBox="0 0 18 18"><circle cx="9" cy="9" r="8.5" fill="#666"/><path d="M3 8h11q0 6-5.5 6T3 8z" fill="#fff"/><ellipse cx="8.5" cy="8" rx="5.5" ry="2" fill="#6a4020"/></svg>
<svg class="a" style="left:1px;top:746px;" width="18" height="18" viewBox="0 0 18 18"><circle cx="9" cy="9" r="8.5" fill="#666"/><path d="M2 14q7-5 14 0v3H2z" fill="#f0c020"/><path d="M7 2l5 3-2 5z" fill="#ddd"/></svg>
<svg class="a" style="left:1px;top:771px;" width="18" height="18" viewBox="0 0 18 18"><circle cx="9" cy="9" r="8.5" fill="#8a3030"/><path d="M4 4l10 10M14 4L4 14M9 2v14M2 9h14" stroke="#e02020" stroke-width="2"/></svg>
<svg class="a" style="left:1px;top:796px;" width="18" height="18" viewBox="0 0 18 18"><circle cx="9" cy="9" r="8.5" fill="#4a3a8a"/><rect x="4" y="5" width="9" height="9" fill="#eee"/><rect x="4" y="5" width="9" height="3" fill="#4a80d0"/></svg>
<svg class="a" style="left:1px;top:819px;" width="18" height="18" viewBox="0 0 18 18"><circle cx="9" cy="9" r="8.5" fill="#666"/><path d="M2 8q7 10 14 0q-3 7-7 7T2 8z" fill="#2a90e0"/><path d="M5 6q4 5 8 0" fill="none" stroke="#2a90e0" stroke-width="2"/></svg>
<svg class="a" style="left:1px;top:843px;" width="18" height="18" viewBox="0 0 18 18"><circle cx="9" cy="9" r="8.5" fill="none" stroke="#bbb" stroke-width="1"/><path d="M5 16q0-10 6-13 1 8 3 13z" fill="#5a9ad8"/><path d="M1 15h16" stroke="#eee" stroke-width="2"/></svg>
<div class="a" style="left:23px;top:814px;width:584px;height:52px;background:#444444;"></div>
<div class="a" style="left:25px;top:819px;width:2px;height:44px;background:repeating-linear-gradient(#8a8a8a 0 1px,transparent 1px 2px)"></div>
<div class="a" style="left:31px;top:819px;width:11px;height:12px;background:#575757;border-radius:2px"></div>
<div class="t" style="left:33px;top:821px;font-size:9.5px;color:#ccc;letter-spacing:0px;">&lt;</div>
<div class="a" style="left:44px;top:819px;width:95px;height:12px;background:#5c5c5c;border-radius:2px"></div>
<div class="t" style="left:91px;transform:translateX(-50%);top:822px;font-size:9.5px;color:#d0d0d0;letter-spacing:-0.3px;">0 / 100</div>
<div class="a" style="left:141px;top:819px;width:11px;height:12px;background:#575757;border-radius:2px"></div>
<div class="t" style="left:144px;top:821px;font-size:9.5px;color:#ccc;letter-spacing:0px;">&gt;</div>
<div class="a" style="left:30px;top:835px;width:577px;height:1px;background:#222;"></div>
<div class="a" style="left:70px;top:836px;width:537px;height:19px;background:#2c2c2c;"></div>
<div class="a" style="left:70px;top:855px;width:537px;height:7px;background:#3a3a3a;"></div>
<svg class="a" style="left:38px;top:839px;" width="14" height="12" viewBox="0 0 14 12"><rect x="1" y="1" width="2" height="10" fill="#ccc" opacity=".8"/><path d="M5 8q2-7 4 0t4-2" fill="none" stroke="#4ac0c0" stroke-width="1.3"/></svg>
<div class="a" style="left:72px;top:837px;width:6px;height:17px;background:#b8a850;"></div>
<div class="t" style="left:73px;top:845px;font-size:8.5px;color:#333;letter-spacing:0px;">0</div>
<svg class="a" style="left:0px;top:0px;" width="607" height="907" viewBox="0 0 607 907"><path d="M87.7 837v8" stroke="#777" stroke-width="1"/><path d="M101.4 837v8" stroke="#777" stroke-width="1"/><path d="M115.2 837v8" stroke="#777" stroke-width="1"/><path d="M128.9 837v8" stroke="#777" stroke-width="1"/><path d="M142.6 837v9" stroke="#777" stroke-width="1"/><text x="142.6" y="853" text-anchor="middle" font-size="9" fill="#bbb" font-family="Liberation Sans">5</text><path d="M156.3 837v8" stroke="#777" stroke-width="1"/><path d="M170.0 837v8" stroke="#777" stroke-width="1"/><path d="M183.8 837v8" stroke="#777" stroke-width="1"/><path d="M197.5 837v8" stroke="#777" stroke-width="1"/><path d="M211.2 837v9" stroke="#777" stroke-width="1"/><text x="211.2" y="853" text-anchor="middle" font-size="9" fill="#bbb" font-family="Liberation Sans">10</text><path d="M224.9 837v8" stroke="#777" stroke-width="1"/><path d="M238.6 837v8" stroke="#777" stroke-width="1"/><path d="M252.4 837v8" stroke="#777" stroke-width="1"/><path d="M266.1 837v8" stroke="#777" stroke-width="1"/><path d="M279.8 837v9" stroke="#777" stroke-width="1"/><text x="279.8" y="853" text-anchor="middle" font-size="9" fill="#bbb" font-family="Liberation Sans">15</text><path d="M293.5 837v8" stroke="#777" stroke-width="1"/><path d="M307.2 837v8" stroke="#777" stroke-width="1"/><path d="M321.0 837v8" stroke="#777" stroke-width="1"/><path d="M334.7 837v8" stroke="#777" stroke-width="1"/><path d="M348.4 837v9" stroke="#777" stroke-width="1"/><text x="348.4" y="853" text-anchor="middle" font-size="9" fill="#bbb" font-family="Liberation Sans">20</text><path d="M362.1 837v8" stroke="#777" stroke-width="1"/><path d="M375.8 837v8" stroke="#777" stroke-width="1"/><path d="M389.6 837v8" stroke="#777" stroke-width="1"/><path d="M403.3 837v8" stroke="#777" stroke-width="1"/><path d="M417.0 837v9" stroke="#777" stroke-width="1"/><text x="417.0" y="853" text-anchor="middle" font-size="9" fill="#bbb" font-family="Liberation Sans">25</text><path d="M430.7 837v8" stroke="#777" stroke-width="1"/><path d="M444.4 837v8" stroke="#777" stroke-width="1"/><path d="M458.2 837v8" stroke="#777" stroke-width="1"/><path d="M471.9 837v8" stroke="#777" stroke-width="1"/><path d="M485.6 837v9" stroke="#777" stroke-width="1"/><text x="485.6" y="853" text-anchor="middle" font-size="9" fill="#bbb" font-family="Liberation Sans">30</text><path d="M499.3 837v8" stroke="#777" stroke-width="1"/><path d="M513.0 837v8" stroke="#777" stroke-width="1"/><path d="M526.8 837v8" stroke="#777" stroke-width="1"/><path d="M540.5 837v8" stroke="#777" stroke-width="1"/><path d="M554.2 837v9" stroke="#777" stroke-width="1"/><text x="554.2" y="853" text-anchor="middle" font-size="9" fill="#bbb" font-family="Liberation Sans">35</text><path d="M567.9 837v8" stroke="#777" stroke-width="1"/><path d="M581.6 837v8" stroke="#777" stroke-width="1"/><path d="M595.4 837v8" stroke="#777" stroke-width="1"/></svg>
<div class="a" style="left:0px;top:866px;width:607px;height:41px;background:#444444;"></div>
<div class="a" style="left:0px;top:869px;width:76px;height:16px;background:#e2cbcb;"></div>
<div class="a" style="left:0px;top:885px;width:78px;height:2px;background:#555;"></div>
<div class="a" style="left:0px;top:887px;width:77px;height:18px;background:#ffffff;border:1px solid #222"></div>
<div class="t" style="left:4px;top:892px;font-size:9.5px;color:#222;letter-spacing:-0.2px;font-family:'Liberation Mono';">Testing for :</div>
<div class="a" style="left:79px;top:868px;width:2px;height:39px;background:#2c2c2c;"></div>
<div class="t" style="left:84px;top:875px;font-size:9.5px;color:#dcdcdc;letter-spacing:-0.3px;">1 Object Selected</div>
<div class="t" style="left:83px;top:894px;font-size:9.5px;color:#dcdcdc;letter-spacing:-0.3px;">Rendering Time  0:00:09</div>
<div class="a" style="left:1190px;top:86px;width:298px;height:328px;background:#444444;"></div>
<div class="a" style="left:1194px;top:88px;width:294px;height:2px;background:repeating-linear-gradient(90deg,#8a8a8a 0 1px,transparent 1px 2px)"></div>
<div class="a" style="left:1190px;top:92px;width:298px;height:22px;background:#3d3d3d;"></div>
<div class="a" style="left:1193px;top:94px;width:24px;height:20px;background:#3a3a3a;border-radius:3px 3px 0 0"></div>
<div class="a" style="left:1219px;top:94px;width:22px;height:20px;background:#474747;border-radius:3px 3px 0 0"></div>
<div class="a" style="left:1243px;top:94px;width:23px;height:20px;background:#3a3a3a;border-radius:3px 3px 0 0"></div>
<div class="a" style="left:1268px;top:94px;width:22px;height:20px;background:#3a3a3a;border-radius:3px 3px 0 0"></div>
<div class="a" style="left:1293px;top:94px;width:22px;height:20px;background:#3a3a3a;border-radius:3px 3px 0 0"></div>
<div class="a" style="left:1318px;top:94px;width:23px;height:20px;background:#3a3a3a;border-radius:3px 3px 0 0"></div>
<svg class="a" style="left:1197px;top:96px;" width="16" height="16" viewBox="0 0 16 16"><path d="M8 2v12M2 8h12" stroke="#ddd" stroke-width="1.6"/></svg>
<svg class="a" style="left:1222px;top:95px;" width="16" height="17" viewBox="0 0 16 17"><rect x="2" y="2" width="12" height="12" fill="none" stroke="#3aa39c" stroke-width="1.3"/><g fill="#3aa39c"><rect x="0.5" y="0.5" width="3" height="3"/><rect x="12.5" y="0.5" width="3" height="3"/><rect x="0.5" y="12.5" width="3" height="3"/><rect x="12.5" y="12.5" width="3" height="3"/></g><path d="M4 13q1-8 9-9" fill="none" stroke="#ddd" stroke-width="1.5"/></svg>
<svg class="a" style="left:1246px;top:95px;" width="16" height="17" viewBox="0 0 16 17"><rect x="4" y="1" width="9" height="5" fill="#bbb"/><path d="M3 13V9h11v4M8.5 6v3" fill="none" stroke="#3aa39c" stroke-width="1.3"/><circle cx="3" cy="14" r="1.6" fill="#3aa39c"/><circle cx="14" cy="14" r="1.6" fill="#3aa39c"/></svg>
<svg class="a" style="left:1271px;top:95px;" width="18" height="17" viewBox="0 0 18 17"><circle cx="11" cy="8.5" r="6" fill="#bdbdbd"/><path d="M5 3a6 6 0 0 0 0 11" fill="none" stroke="#3aa39c" stroke-width="1.6"/></svg>
<svg class="a" style="left:1296px;top:95px;" width="18" height="17" viewBox="0 0 18 17"><rect x="2" y="3" width="14" height="9" fill="#bdbdbd"/><path d="M6 14h6" stroke="#bdbdbd" stroke-width="2"/></svg>
<svg class="a" style="left:1321px;top:95px;" width="18" height="17" viewBox="0 0 18 17"><path d="M4 15l8-8" stroke="#bdbdbd" stroke-width="2.4"/><circle cx="13" cy="5" r="3.5" fill="none" stroke="#bdbdbd" stroke-width="2"/></svg>
<div class="a" style="left:1192px;top:113px;width:150px;height:301px;background:#464646;"></div>
<div class="a" style="left:1198px;top:120px;width:124px;height:14px;background:#5b5b5b;"></div>
<div class="t" style="left:1201px;top:123px;font-size:9.5px;color:#dcdcdc;letter-spacing:-0.3px;">RailClone001</div>
<div class="a" style="left:1326px;top:120px;width:14px;height:15px;background:#1d1d1d;"></div>
<div class="a" style="left:1327px;top:121px;width:12px;height:13px;background:#c836c0;"></div>
<div class="a" style="left:1197px;top:143px;width:143px;height:15px;background:#5f5f5f;"></div>
<div class="t" style="left:1199px;top:147px;font-size:9.5px;color:#dcdcdc;letter-spacing:-0.35px;">Modifier List</div>
<svg class="a" style="left:1330px;top:148px;" width="7" height="6" viewBox="0 0 7 6"><path d="M0 1h7L3.5 5z" fill="#eee"/></svg>
<div class="a" style="left:1199px;top:167px;width:67px;height:14px;background:#5b5b5b;border-radius:2px"></div>
<div class="t" style="left:1232.5px;transform:translateX(-50%);top:170px;font-size:9.5px;color:#dcdcdc;letter-spacing:-0.3px;">Poly Select</div>
<div class="a" style="left:1270px;top:167px;width:67px;height:14px;background:#5b5b5b;border-radius:2px"></div>
<div class="t" style="left:1303.5px;transform:translateX(-50%);top:170px;font-size:9.5px;color:#dcdcdc;letter-spacing:-0.3px;">FloorGenerator</div>
<div class="a" style="left:1199px;top:185px;width:67px;height:14px;background:#5b5b5b;border-radius:2px"></div>
<div class="t" style="left:1232.5px;transform:translateX(-50%);top:188px;font-size:9.5px;color:#dcdcdc;letter-spacing:-0.3px;">Edit Poly</div>
<div class="a" style="left:1270px;top:185px;width:67px;height:14px;background:#5b5b5b;border-radius:2px"></div>
<div class="t" style="left:1303.5px;transform:translateX(-50%);top:188px;font-size:9.5px;color:#dcdcdc;letter-spacing:-0.3px;">Shell</div>
<div class="a" style="left:1199px;top:202px;width:67px;height:14px;background:#5b5b5b;border-radius:2px"></div>
<div class="t" style="left:1232.5px;transform:translateX(-50%);top:205px;font-size:9.5px;color:#8a8a8a;letter-spacing:-0.3px;">Extrude</div>
<div class="a" style="left:1270px;top:202px;width:67px;height:14px;background:#5b5b5b;border-radius:2px"></div>
<div class="t" style="left:1303.5px;transform:translateX(-50%);top:205px;font-size:9.5px;color:#8a8a8a;letter-spacing:-0.3px;">Sweep</div>
<div class="a" style="left:1199px;top:220px;width:67px;height:14px;background:#5b5b5b;border-radius:2px"></div>
<div class="t" style="left:1232.5px;transform:translateX(-50%);top:223px;font-size:9.5px;color:#dcdcdc;letter-spacing:-0.3px;">FFD 2x2x2</div>
<div class="a" style="left:1270px;top:220px;width:67px;height:14px;background:#5b5b5b;border-radius:2px"></div>
<div class="t" style="left:1303.5px;transform:translateX(-50%);top:223px;font-size:9.5px;color:#dcdcdc;letter-spacing:-0.3px;">Symmetry</div>
<div class="a" style="left:1199px;top:238px;width:67px;height:14px;background:#5b5b5b;border-radius:2px"></div>
<div class="t" style="left:1232.5px;transform:translateX(-50%);top:241px;font-size:9.5px;color:#dcdcdc;letter-spacing:-0.3px;">TurboSmooth</div>
<div class="a" style="left:1270px;top:238px;width:67px;height:14px;background:#5b5b5b;border-radius:2px"></div>
<div class="t" style="left:1303.5px;transform:translateX(-50%);top:241px;font-size:9.5px;color:#dcdcdc;letter-spacing:-0.3px;">Material</div>
<div class="a" style="left:1199px;top:256px;width:67px;height:14px;background:#5b5b5b;border-radius:2px"></div>
<div class="t" style="left:1232.5px;transform:translateX(-50%);top:259px;font-size:9.5px;color:#dcdcdc;letter-spacing:-0.3px;">Smooth</div>
<div class="a" style="left:1270px;top:256px;width:67px;height:14px;background:#5b5b5b;border-radius:2px"></div>
<div class="t" style="left:1303.5px;transform:translateX(-50%);top:259px;font-size:9.5px;color:#dcdcdc;letter-spacing:-0.3px;">UVW Map</div>
<div class="a" style="left:1197px;top:277px;width:144px;height:100px;background:#c8c8c8;"></div>
<div class="a" style="left:1199px;top:279px;width:140px;height:96px;background:#3f3f3f;"></div>
<div class="a" style="left:1199px;top:279px;width:140px;height:13px;background:#5a8ccc;"></div>
<div class="t" style="left:1214px;top:282px;font-size:9.5px;color:#f0f0f0;letter-spacing:-0.3px;">RailClone</div>
<svg class="a" style="left:1199px;top:382px;" width="14" height="14" viewBox="0 0 14 14"><path d="M2 13l5-5" stroke="#ccc" stroke-width="1.5"/><path d="M6 4l4 4 2-1-5-5z" fill="#ccc"/></svg>
<div class="a" style="left:1220px;top:383px;width:2px;height:12px;background:#111;"></div>
<div class="a" style="left:1225px;top:381px;width:17px;height:17px;background:#5a8ccc;border-radius:2px"></div>
<svg class="a" style="left:1229px;top:383px;" width="9" height="13" viewBox="0 0 9 13"><rect x="2" y="1" width="5" height="11" rx="2" fill="none" stroke="#7be0d0" stroke-width="1.4"/></svg>
<div class="a" style="left:1248px;top:383px;width:2px;height:12px;background:#111;"></div>
<svg class="a" style="left:1254px;top:382px;" width="16" height="15" viewBox="0 0 16 15"><circle cx="5" cy="5" r="3.5" fill="none" stroke="#222" stroke-width="1.5"/><circle cx="10" cy="10" r="3.5" fill="none" stroke="#222" stroke-width="1.5"/></svg>
<svg class="a" style="left:1274px;top:382px;" width="12" height="15" viewBox="0 0 12 15"><rect x="2" y="3" width="8" height="11" fill="none" stroke="#333" stroke-width="1.3"/><path d="M1 2h10" stroke="#333"/></svg>
<div class="a" style="left:1295px;top:383px;width:2px;height:12px;background:#111;"></div>
<svg class="a" style="left:1300px;top:382px;" width="15" height="15" viewBox="0 0 15 15"><rect x="1" y="2" width="11" height="12" fill="#ccc"/><path d="M3 5h3M3 8h3M3 11h3M7 5h3M7 8h3" stroke="#555"/><path d="M7 12l6-9" stroke="#e0b030" stroke-width="1.8"/></svg>
<div class="a" style="left:1250px;top:410px;width:30px;height:2px;background:#666;"></div>
<div class="a" style="left:1342px;top:113px;width:146px;height:301px;background:#404040;"></div>
<div class="a" style="left:1341px;top:117px;width:138px;height:297px;background:#484848;border-radius:3px"></div>
<div class="a" style="left:1482px;top:117px;width:3px;height:297px;background:#3a3a3a;"></div>
<svg class="a" style="left:1346px;top:121px;" width="7" height="6" viewBox="0 0 7 6"><path d="M0 1h7L3.5 5z" fill="#ccc"/></svg>
<div class="t" style="left:1356px;top:121px;font-size:10.5px;color:#e8e8e8;letter-spacing:-0.2px;font-weight:bold;">Style</div>
<div class="a" style="left:1467px;top:122px;width:5px;height:5px;background:repeating-linear-gradient(90deg,#777 0 1px,transparent 1px 2px)"></div>
<svg class="a" style="left:1358px;top:140px;" width="106" height="77" viewBox="0 0 106 77"><rect width="106" height="77" fill="#3e221d"/><path d="M67.3 -10.0L74.0 -10.8L76.2 -8.9L69.5 -8.0ZM83.0 -11.5L89.0 -12.3L91.0 -10.7L85.1 -9.8ZM-17.5 9.4L-7.4 7.8L-3.9 11.5L-14.0 13.3ZM5.1 6.3L14.3 4.8L17.5 8.0L8.3 9.7ZM35.5 2.0L43.5 0.7L46.3 3.4L38.4 4.9ZM53.8 -0.5L61.0 -1.7L63.6 0.7L56.4 2.0ZM51.2 4.3L58.4 2.9L61.2 5.4L54.0 7.0ZM59.8 2.9L66.8 1.6L69.4 3.9L62.5 5.5ZM109.4 -1.7L114.3 -2.8L116.4 -1.3L111.5 -0.0ZM86.8 6.5L92.6 5.0L95.1 7.1L89.3 8.7ZM33.6 23.0L41.6 20.8L45.1 24.1L37.1 26.5ZM43.0 20.8L50.6 18.7L54.0 21.8L46.4 24.1ZM76.9 13.0L83.1 11.2L85.9 13.6L79.7 15.6ZM91.8 9.6L97.4 8.0L100.0 10.0L94.4 11.8ZM-0.4 37.4L9.0 34.7L13.2 38.7L3.8 41.8ZM40.2 27.1L48.0 24.7L51.5 27.9L43.8 30.5ZM49.4 24.7L56.7 22.5L60.1 25.5L52.7 28.0ZM74.6 18.3L80.9 16.3L83.8 18.8L77.5 21.0ZM27.8 36.4L36.0 33.7L39.9 37.3L31.6 40.3ZM46.7 31.1L54.1 28.6L57.7 31.8L50.2 34.5ZM55.5 28.6L62.6 26.2L66.0 29.2L58.9 31.8ZM64.0 26.2L70.8 23.9L74.0 26.7L67.3 29.2ZM87.5 19.6L93.3 17.5L96.1 19.8L90.4 22.1ZM43.9 37.8L51.5 35.1L55.3 38.4L47.7 41.4ZM50.3 41.9L57.6 39.0L61.3 42.2L54.0 45.4ZM73.0 39.8L79.4 37.0L82.8 39.7L76.5 42.8ZM102.2 29.1L107.4 26.6L110.3 28.8L105.1 31.4ZM44.9 56.8L52.4 53.3L56.5 56.7L49.0 60.5ZM51.2 61.0L58.4 57.3L62.6 60.6L55.3 64.6ZM68.2 53.7L74.7 50.2L78.5 53.2L72.0 56.9ZM83.8 47.0L89.7 43.8L93.2 46.4L87.3 49.8ZM26.8 87.2L35.1 82.4L40.0 86.2L31.7 91.4ZM36.5 82.4L44.4 77.8L49.1 81.4L41.2 86.3ZM76.9 68.7L83.1 64.6L87.1 67.3L80.9 71.7ZM84.5 64.6L90.4 60.7L94.3 63.3L88.4 67.4ZM58.1 86.1L65.1 81.3L69.7 84.4L62.7 89.5ZM27.8 112.0L36.0 106.2L41.4 109.9L33.1 116.1ZM37.4 106.2L45.3 100.6L50.4 104.1L42.6 110.0ZM108.1 63.3L113.1 59.4L116.6 61.4L111.6 65.5ZM67.3 103.1L74.0 97.6L78.7 100.3L72.0 106.1ZM97.4 82.5L102.8 77.8L106.8 79.9L101.4 84.8ZM73.0 106.8L79.4 101.2L84.1 103.7L77.7 109.6Z" fill="#7c4a40"/><path d="M-22.3 -1.0L-11.9 -2.2L-8.7 1.2L-19.0 2.6ZM11.5 -4.4L20.4 -5.4L23.2 -2.6L14.3 -1.4ZM110.7 -14.3L115.5 -14.9L117.2 -13.8L112.4 -13.1ZM-14.0 3.4L-4.0 2.0L-0.7 5.5L-10.7 7.0ZM64.9 -6.0L71.6 -7.0L73.9 -4.9L67.2 -3.8ZM73.0 -7.0L79.4 -7.9L81.6 -6.0L75.2 -4.9ZM88.2 -8.8L94.0 -9.6L96.0 -8.0L90.3 -7.0ZM15.7 4.8L24.4 3.4L27.5 6.4L18.8 8.1ZM32.7 7.2L40.7 5.7L43.7 8.6L35.7 10.4ZM68.2 1.6L74.7 0.3L77.3 2.5L70.7 4.0ZM83.8 -1.0L89.7 -2.1L92.1 -0.2L86.1 1.2ZM88.9 2.0L94.7 0.7L97.1 2.7L91.3 4.1ZM36.5 16.8L44.4 14.9L47.7 18.0L39.8 20.1ZM107.5 2.2L112.4 0.9L114.7 2.6L109.7 4.0ZM105.5 6.4L110.6 4.9L112.9 6.7L107.9 8.4ZM17.7 39.3L26.4 36.4L30.4 40.2L21.7 43.3ZM94.7 17.5L100.1 15.6L102.9 17.8L97.4 19.9ZM24.8 43.8L33.2 40.7L37.2 44.5L28.9 47.8ZM77.7 27.4L83.9 25.0L87.0 27.6L80.8 30.2ZM110.7 21.5L115.5 19.4L118.2 21.3L113.4 23.6ZM35.5 60.6L43.5 56.8L47.8 60.5L39.8 64.5ZM57.3 65.1L64.3 61.2L68.5 64.4L61.4 68.5ZM73.8 57.4L80.1 53.8L83.9 56.6L77.6 60.5ZM71.4 65.0L77.8 61.1L81.8 63.9L75.4 68.1ZM94.0 53.8L99.5 50.3L103.0 52.7L97.5 56.3ZM13.6 102.5L22.4 97.0L27.8 101.1L18.9 107.0ZM33.6 91.8L41.6 86.8L46.6 90.4L38.6 95.8ZM30.7 101.7L38.8 96.2L44.0 99.9L35.9 105.7ZM49.4 91.0L56.7 86.1L61.5 89.3L54.1 94.7ZM89.7 68.1L95.4 64.1L99.2 66.5L93.5 70.8ZM17.7 118.1L26.4 112.0L32.0 116.0L23.3 122.5ZM55.5 95.2L62.6 90.0L67.4 93.1L60.3 98.6ZM80.0 80.3L86.1 75.8L90.2 78.4L84.2 83.2ZM52.9 104.7L60.1 99.2L65.1 102.3L57.8 108.2ZM83.0 92.3L89.0 87.3L93.3 89.7L87.4 95.0ZM90.4 87.3L96.0 82.5L100.2 84.7L94.5 89.8ZM64.9 112.7L71.6 106.8L76.5 109.5L69.8 115.7Z" fill="#6e4038"/><path d="M21.8 -5.4L30.3 -6.4L33.0 -3.8L24.5 -2.6ZM97.4 -13.0L102.8 -13.7L104.7 -12.3L99.3 -11.5ZM44.9 0.7L52.4 -0.5L55.1 2.0L47.6 3.4ZM62.4 -1.7L69.2 -2.9L71.7 -0.6L64.9 0.7ZM42.1 5.7L49.8 4.3L52.7 7.0L45.0 8.7ZM91.1 -2.1L96.7 -3.3L99.0 -1.5L93.4 -0.2ZM-1.5 18.5L8.0 16.6L11.6 20.3L2.2 22.5ZM48.5 9.4L55.9 7.8L58.8 10.5L51.5 12.4ZM96.1 0.7L101.5 -0.5L103.8 1.3L98.4 2.7ZM-4.9 25.3L4.7 23.1L8.6 27.0L-1.0 29.5ZM54.7 13.1L61.8 11.3L64.8 14.1L57.7 16.0ZM13.6 27.6L22.4 25.2L26.2 28.9L17.3 31.5ZM23.8 25.2L32.2 23.0L35.8 26.4L27.4 28.9ZM84.5 11.2L90.4 9.6L93.1 11.8L87.2 13.6ZM10.4 34.7L19.4 32.0L23.4 35.9L14.4 38.8ZM103.5 10.9L108.7 9.2L111.2 11.1L106.0 12.9ZM-3.7 45.3L5.8 42.2L10.2 46.5L0.6 49.9ZM37.4 33.7L45.3 31.1L49.0 34.5L41.1 37.3ZM108.1 13.7L113.1 12.0L115.6 13.8L110.7 15.8ZM14.6 46.9L23.4 43.8L27.6 47.7L18.9 51.2ZM52.9 35.1L60.1 32.4L63.7 35.5L56.5 38.4ZM61.5 32.4L68.4 29.8L71.8 32.8L65.0 35.5ZM69.8 29.8L76.3 27.4L79.6 30.1L73.1 32.8ZM75.4 33.4L81.6 30.8L84.9 33.5L78.7 36.3ZM8.3 63.6L17.3 59.8L22.0 64.0L13.0 68.2ZM28.8 56.1L37.0 52.6L41.3 56.3L33.1 60.1ZM47.6 49.2L55.0 45.9L59.0 49.3L51.5 52.8ZM64.9 42.8L71.6 39.8L75.2 42.8L68.5 46.0ZM95.4 31.6L100.8 29.1L103.9 31.3L98.4 34.1ZM70.6 46.6L77.1 43.4L80.7 46.3L74.2 49.7ZM86.0 40.4L91.9 37.5L95.2 40.0L89.4 43.1ZM100.2 34.8L105.4 32.1L108.5 34.3L103.3 37.2ZM22.8 73.2L31.3 69.0L36.0 72.9L27.5 77.5ZM91.1 43.8L96.7 40.8L100.1 43.2L94.5 46.4ZM98.1 40.8L103.5 37.9L106.7 40.1L101.4 43.2ZM19.8 82.5L28.3 77.9L33.3 81.9L24.7 86.9ZM48.5 69.2L55.9 65.1L60.2 68.5L52.8 72.8ZM65.7 61.2L72.4 57.4L76.4 60.4L69.7 64.4ZM81.5 53.8L87.5 50.4L91.2 53.0L85.2 56.7ZM88.9 50.4L94.7 47.1L98.2 49.6L92.5 53.1ZM102.9 43.9L108.0 40.9L111.2 43.0L106.1 46.3ZM109.4 40.9L114.3 38.0L117.4 40.0L112.5 43.1ZM79.2 61.1L85.4 57.3L89.2 60.0L83.1 64.0ZM107.5 47.0L112.4 43.9L115.7 45.9L110.7 49.3ZM23.8 97.0L32.2 91.8L37.4 95.7L29.0 101.3ZM98.8 57.0L104.1 53.4L107.6 55.7L102.3 59.5ZM105.5 53.4L110.6 50.0L113.9 52.1L108.9 55.7ZM66.5 81.3L73.2 76.7L77.5 79.6L70.9 84.5ZM110.1 56.5L114.9 52.9L118.3 54.9L113.4 58.7ZM64.0 90.0L70.8 85.1L75.3 88.0L68.6 93.3ZM87.5 75.8L93.3 71.4L97.3 73.8L91.5 78.5ZM94.7 71.4L100.1 67.3L104.0 69.5L98.5 74.0ZM34.6 116.6L42.5 110.5L47.9 114.0L39.9 120.4ZM69.8 93.9L76.3 88.8L80.8 91.5L74.3 96.9ZM85.3 83.9L91.1 79.2L95.3 81.6L89.4 86.6ZM99.5 74.7L104.8 70.4L108.6 72.5L103.3 77.0ZM31.7 127.5L39.8 121.0L45.3 124.4L37.3 131.3Z" fill="#84524a"/><path d="M41.2 -7.3L48.9 -8.3L51.4 -6.0L43.7 -4.9ZM90.4 -12.3L96.0 -13.0L98.0 -11.5L92.3 -10.7ZM8.3 0.7L17.3 -0.5L20.4 2.5L11.3 4.0ZM38.4 -2.8L46.2 -3.9L48.9 -1.4L41.1 -0.2ZM47.6 -3.9L55.0 -5.0L57.6 -2.6L50.2 -1.4ZM102.2 -10.4L107.4 -11.2L109.3 -9.8L104.1 -8.9ZM70.6 -2.9L77.1 -4.0L79.5 -1.9L73.0 -0.6ZM93.3 -6.0L98.8 -7.0L100.9 -5.3L95.4 -4.2ZM106.8 -7.9L111.8 -8.8L113.8 -7.4L108.8 -6.4ZM-9.4 14.0L0.4 12.2L4.0 15.9L-5.8 17.9ZM22.8 8.8L31.3 7.2L34.4 10.3L26.0 12.1ZM76.1 0.3L82.4 -1.0L84.8 1.1L78.6 2.5ZM104.9 -4.3L109.9 -5.4L112.0 -3.8L106.9 -2.6ZM9.4 16.6L18.4 14.7L21.9 18.2L12.9 20.3ZM29.7 12.8L37.9 11.1L41.1 14.2L33.0 16.2ZM73.8 4.8L80.1 3.4L82.7 5.6L76.4 7.2ZM52.0 18.7L59.3 16.7L62.5 19.6L55.2 21.8ZM69.0 14.8L75.5 13.0L78.4 15.5L71.9 17.6ZM98.8 8.0L104.1 6.4L106.6 8.3L101.3 10.0ZM20.8 32.0L29.3 29.5L33.1 33.1L24.6 35.9ZM30.7 29.5L38.8 27.1L42.5 30.5L34.4 33.2ZM82.3 16.3L88.3 14.4L91.1 16.8L85.1 18.8ZM101.5 15.6L106.7 13.7L109.4 15.7L104.2 17.8ZM85.3 25.0L91.1 22.8L94.2 25.2L88.3 27.7ZM92.5 22.8L98.1 20.6L101.0 22.9L95.4 25.2ZM99.5 20.6L104.8 18.6L107.6 20.7L102.3 22.9ZM0.7 58.7L10.1 55.1L14.7 59.4L5.3 63.3ZM83.0 30.8L89.0 28.3L92.2 30.8L86.2 33.6ZM18.7 59.8L27.4 56.1L31.8 60.1L23.2 64.1ZM80.8 37.0L86.8 34.2L90.1 36.8L84.1 39.8ZM108.8 26.6L113.7 24.3L116.5 26.3L111.6 28.8ZM78.5 43.4L84.6 40.4L88.1 43.1L82.0 46.3ZM42.1 64.9L49.8 61.0L54.1 64.5L46.4 68.7ZM9.4 87.3L18.4 82.5L23.5 86.7L14.5 91.9ZM16.7 92.2L25.4 87.2L30.5 91.3L21.8 96.7ZM52.0 82.0L59.3 77.4L63.8 80.6L56.6 85.5ZM40.2 96.2L48.0 91.0L52.9 94.5L45.2 100.1ZM103.5 60.2L108.7 56.5L112.2 58.6L107.1 62.5ZM61.5 99.2L68.4 93.9L73.1 96.8L66.2 102.4ZM92.5 79.2L98.1 74.7L102.1 76.9L96.5 81.7ZM21.8 134.3L30.3 127.5L36.1 131.2L27.6 138.3ZM41.2 121.0L48.9 114.8L54.2 118.0L46.5 124.6ZM59.0 108.8L65.9 103.1L70.9 106.0L63.9 112.0ZM75.4 97.6L81.6 92.3L86.1 94.9L79.9 100.4ZM104.2 77.8L109.3 73.4L113.1 75.3L108.0 80.0ZM38.4 131.9L46.2 125.2L51.7 128.5L43.9 135.5ZM88.2 95.8L94.0 90.6L98.3 92.8L92.5 98.3Z" fill="#744538"/><path d="M-10.5 -2.2L-0.7 -3.3L2.4 -0.1L-7.4 1.2ZM0.7 -3.3L10.1 -4.4L13.0 -1.4L3.7 -0.1ZM31.7 -6.4L39.8 -7.3L42.4 -4.9L34.3 -3.8ZM59.0 -9.1L65.9 -10.0L68.2 -8.0L61.3 -7.0ZM75.4 -10.8L81.6 -11.5L83.7 -9.8L77.5 -8.9ZM104.2 -13.7L109.3 -14.3L111.1 -13.1L106.0 -12.3ZM18.7 -0.5L27.4 -1.7L30.3 1.2L21.7 2.5ZM28.8 -1.7L37.0 -2.8L39.8 -0.2L31.6 1.2ZM95.4 -9.6L100.8 -10.4L102.8 -8.9L97.4 -8.0ZM25.8 3.4L34.1 2.0L37.1 4.9L28.8 6.5ZM78.5 -4.0L84.6 -5.0L86.9 -3.1L80.8 -1.9ZM12.5 10.5L21.4 8.8L24.7 12.1L15.8 14.0ZM19.8 14.7L28.3 12.8L31.7 16.1L23.1 18.2ZM39.3 11.1L47.1 9.4L50.2 12.3L42.4 14.2ZM57.3 7.8L64.3 6.3L67.1 8.8L60.1 10.6ZM65.7 6.3L72.4 4.8L75.1 7.2L68.4 8.9ZM81.5 3.4L87.5 2.0L90.1 4.1L84.0 5.7ZM6.1 23.1L15.3 20.9L19.0 24.6L9.9 27.0ZM63.2 11.3L70.0 9.7L72.9 12.2L66.1 14.1ZM71.4 9.7L77.8 8.0L80.6 10.4L74.2 12.2ZM79.2 8.0L85.4 6.5L88.0 8.7L81.9 10.5ZM2.9 30.0L12.2 27.6L16.1 31.5L6.8 34.2ZM58.1 22.5L65.1 20.3L68.4 23.2L61.4 25.5ZM66.5 20.3L73.2 18.3L76.3 20.9L69.6 23.2ZM96.8 12.6L102.1 10.9L104.8 12.9L99.4 14.8ZM110.1 9.2L114.9 7.6L117.3 9.4L112.5 11.1ZM7.2 42.2L16.3 39.3L20.5 43.3L11.4 46.5ZM72.2 23.9L78.6 21.7L81.7 24.3L75.3 26.7ZM80.0 21.7L86.1 19.6L89.1 22.0L83.0 24.3ZM4.0 50.2L13.2 46.9L17.6 51.1L8.4 54.7ZM106.2 18.6L111.2 16.6L113.8 18.5L108.8 20.7ZM21.8 51.6L30.3 48.2L34.6 52.1L26.1 55.7ZM41.2 45.0L48.9 41.9L52.8 45.3L45.1 48.7ZM59.0 39.0L65.9 36.1L69.5 39.2L62.6 42.2ZM67.3 36.1L74.0 33.4L77.4 36.3L70.8 39.2ZM38.4 52.6L46.2 49.2L50.3 52.7L42.5 56.4ZM56.4 45.9L63.5 42.8L67.3 45.9L60.2 49.3ZM88.2 34.2L94.0 31.6L97.2 34.0L91.4 36.9ZM5.1 72.7L14.3 68.5L19.1 72.8L10.0 77.4ZM15.7 68.5L24.4 64.4L29.1 68.5L20.3 72.9ZM106.8 32.1L111.8 29.6L114.8 31.6L109.8 34.3ZM59.8 57.3L66.8 53.7L70.7 56.8L63.8 60.7ZM29.7 77.9L37.9 73.4L42.6 77.2L34.5 82.0ZM39.3 73.4L47.1 69.2L51.6 72.7L43.8 77.3ZM96.1 47.1L101.5 43.9L104.8 46.2L99.4 49.6ZM45.8 77.8L53.3 73.3L57.8 76.7L50.3 81.5ZM86.8 57.3L92.6 53.8L96.2 56.3L90.4 60.1ZM91.8 60.7L97.4 57.0L101.1 59.4L95.5 63.4ZM96.8 64.1L102.1 60.2L105.8 62.4L100.4 66.5ZM46.7 100.6L54.1 95.2L59.1 98.5L51.6 104.2ZM72.2 85.1L78.6 80.3L82.9 83.1L76.5 88.1ZM24.8 122.9L33.2 116.6L38.8 120.3L30.4 127.0ZM43.9 110.5L51.5 104.7L56.7 108.0L49.1 114.2ZM77.7 88.8L83.9 83.9L88.2 86.4L82.0 91.6ZM50.3 114.8L57.6 108.8L62.7 111.9L55.4 118.2ZM110.7 73.4L115.5 69.1L119.2 70.9L114.3 75.4ZM28.8 138.9L37.0 131.9L42.8 135.3L34.6 142.7ZM47.6 125.2L55.0 118.8L60.3 121.9L52.9 128.6ZM108.8 80.9L113.7 76.3L117.5 78.1L112.6 82.9Z" fill="#5e3a34"/><path d="M50.3 -8.3L57.6 -9.1L60.0 -7.0L52.7 -5.9ZM-2.6 2.0L6.9 0.7L10.1 4.0L0.6 5.5ZM56.4 -5.0L63.5 -6.0L65.9 -3.8L58.9 -2.6ZM80.8 -7.9L86.8 -8.8L89.0 -7.0L82.9 -6.0ZM108.8 -11.2L113.7 -12.0L115.5 -10.7L110.6 -9.8ZM-6.0 7.8L3.7 6.3L7.0 9.7L-2.6 11.5ZM86.0 -5.0L91.9 -6.0L94.1 -4.2L88.2 -3.1ZM100.2 -7.0L105.4 -7.9L107.5 -6.4L102.2 -5.3ZM1.8 12.2L11.1 10.5L14.6 14.0L5.3 15.9ZM98.1 -3.3L103.5 -4.3L105.6 -2.7L100.3 -1.4ZM-12.8 20.6L-2.9 18.5L0.9 22.5L-9.0 24.8ZM102.9 -0.5L108.0 -1.7L110.2 -0.0L105.1 1.3ZM16.7 20.9L25.4 18.8L29.0 22.3L20.3 24.6ZM26.8 18.8L35.1 16.8L38.5 20.1L30.2 22.3ZM45.8 14.9L53.3 13.1L56.4 16.0L48.9 18.0ZM94.0 5.0L99.5 3.6L101.9 5.5L96.4 7.1ZM100.9 3.6L106.1 2.2L108.4 4.0L103.2 5.5ZM-8.3 32.6L1.5 30.0L5.6 34.1L-4.1 37.0ZM60.7 16.7L67.6 14.8L70.6 17.5L63.7 19.6ZM89.7 14.4L95.4 12.6L98.1 14.8L92.4 16.8ZM34.6 40.7L42.5 37.8L46.4 41.3L38.5 44.5ZM11.5 55.1L20.4 51.6L24.8 55.6L15.9 59.4ZM31.7 48.2L39.8 45.0L43.9 48.6L35.8 52.1ZM90.4 28.3L96.0 26.0L99.1 28.3L93.4 30.9ZM97.4 26.0L102.8 23.7L105.7 25.9L100.4 28.3ZM104.2 23.7L109.3 21.5L112.1 23.5L107.0 25.9ZM25.8 64.4L34.1 60.6L38.6 64.4L30.3 68.6ZM53.8 53.3L61.0 49.8L64.9 53.1L57.8 56.8ZM62.4 49.8L69.2 46.6L73.0 49.6L66.2 53.1ZM93.3 37.5L98.8 34.8L102.0 37.1L96.5 40.1ZM12.5 77.7L21.4 73.2L26.3 77.4L17.4 82.2ZM32.7 69.0L40.7 64.9L45.2 68.6L37.2 73.0ZM76.1 50.2L82.4 47.0L86.0 49.7L79.8 53.2ZM104.9 37.9L109.9 35.1L113.0 37.2L108.0 40.2ZM54.7 73.3L61.8 69.1L66.2 72.3L59.0 76.8ZM63.2 69.1L70.0 65.0L74.2 68.0L67.4 72.4ZM100.9 50.3L106.1 47.0L109.5 49.2L104.2 52.7ZM43.0 86.8L50.6 82.0L55.4 85.4L47.8 90.6ZM60.7 77.4L67.6 72.9L71.9 76.0L65.0 80.7ZM69.0 72.9L75.5 68.7L79.7 71.6L73.1 76.1ZM20.8 107.3L29.3 101.7L34.7 105.6L26.2 111.6ZM74.6 76.7L80.9 72.3L85.0 75.0L78.7 79.7ZM82.3 72.3L88.3 68.1L92.3 70.7L86.3 75.1ZM101.5 67.3L106.7 63.3L110.4 65.4L105.2 69.6ZM106.2 70.4L111.2 66.3L114.8 68.2L109.8 72.6ZM56.4 118.8L63.5 112.7L68.6 115.5L61.5 122.0ZM80.8 101.2L86.8 95.8L91.3 98.1L85.3 103.8ZM95.4 90.6L100.8 85.6L104.9 87.7L99.5 92.9ZM102.2 85.6L107.4 80.9L111.3 82.8L106.2 87.8Z" fill="#8a5a4e"/><path d="M2 62q4-8 12-6l5 4-4 8z" fill="#e04050"/><path d="M6 60q4-6 10-3l1 7z" fill="#50c050"/><path d="M10 58q6-4 12 0l-2 6z" fill="#c040c0"/><path d="M2 72h20" stroke="#222" stroke-width="2"/></svg>
<div class="a" style="left:1354px;top:224px;width:96px;height:16px;background:#5b5b5b;border-radius:2px"></div>
<div class="t" style="left:1402.0px;transform:translateX(-50%);top:228px;font-size:9.5px;color:#dcdcdc;letter-spacing:-0.3px;">Small Plane Tiles</div>
<svg class="a" style="left:1452px;top:224px;" width="16" height="16" viewBox="0 0 16 16"><circle cx="8" cy="8" r="7" fill="#3c7dd8"/><circle cx="8" cy="8" r="6" fill="#cfe3fb"/><text x="4.5" y="12.5" font-size="11" font-weight="bold" fill="#1a4a9a" font-family="Liberation Sans">?</text></svg>
<svg class="a" style="left:1358px;top:243px;" width="16" height="16" viewBox="0 0 16 16"><rect x="0" y="0" width="16" height="16" rx="2" fill="#4a8ad8"/><rect x="1.5" y="1.5" width="13" height="13" fill="#dbe8f8"/><path d="M3 13l2-5 6-6 2 2-6 6z" fill="#e8c040"/></svg>
<svg class="a" style="left:1409px;top:243px;" width="15" height="15" viewBox="0 0 15 15"><rect width="15" height="15" rx="2" fill="#555"/><rect x="3" y="3" width="10" height="10" fill="#ddd"/><path d="M2 7.5h7M6 4l4 3.5-4 3.5" stroke="#3ac030" stroke-width="2.2" fill="none"/></svg>
<svg class="a" style="left:1427px;top:243px;" width="15" height="15" viewBox="0 0 15 15"><rect width="15" height="15" rx="2" fill="#555"/><rect x="3" y="3" width="10" height="10" fill="#ddd"/><path d="M2 7.5h7M6 4l4 3.5-4 3.5" stroke="#e0c020" stroke-width="2.2" fill="none"/></svg>
<svg class="a" style="left:1446px;top:243px;" width="15" height="15" viewBox="0 0 15 15"><rect width="15" height="15" rx="2" fill="#555"/><rect x="3" y="3" width="10" height="10" fill="#ddd"/><path d="M2 7.5h7M6 4l4 3.5-4 3.5" stroke="#e03030" stroke-width="2.2" fill="none"/></svg>
<div class="t" style="left:1409px;transform:translateX(-50%);top:271px;font-size:9.5px;color:#2fcf2f;letter-spacing:-0.3px;">Object Correct</div>
<div class="a" style="left:1350px;top:293px;width:119px;height:53px;border:1px solid #2e2e2e;border-radius:3px"></div>
<div class="a" style="left:1352px;top:288px;width:60px;height:10px;background:#484848;"></div>
<div class="t" style="left:1354px;top:289px;font-size:9.5px;color:#dcdcdc;letter-spacing:-0.35px;">Master Style</div>
<div class="a" style="left:1437px;top:298px;width:30px;height:10px;background:#5b5b5b;border-radius:2px"></div>
<div class="t" style="left:1452.0px;transform:translateX(-50%);top:300px;font-size:9px;color:#dcdcdc;letter-spacing:-0.3px;">Clear</div>
<div class="a" style="left:1355px;top:311px;width:96px;height:14px;background:#5b5b5b;border-radius:2px"></div>
<div class="t" style="left:1403.0px;transform:translateX(-50%);top:314px;font-size:9.5px;color:#dcdcdc;letter-spacing:-0.3px;">None</div>
<svg class="a" style="left:1453px;top:311px;" width="14" height="14" viewBox="0 0 14 14"><rect width="14" height="14" rx="2" fill="#555"/><path d="M3 7a4 4 0 0 1 7-2.5M11 7a4 4 0 0 1-7 2.5" fill="none" stroke="#3ca0f0" stroke-width="1.8"/></svg>
<div class="a" style="left:1363px;top:332px;width:7px;height:7px;background:#555;"></div>
<svg class="a" style="left:1362px;top:330px;" width="10" height="10" viewBox="0 0 10 10"><path d="M2 5l2 3 4-6" stroke="#ddd" stroke-width="1.4" fill="none"/></svg>
<div class="t" style="left:1373px;top:333px;font-size:9.5px;color:#dcdcdc;letter-spacing:-0.35px;">Copy Material</div>
<div class="a" style="left:1350px;top:357px;width:119px;height:60px;border:1px solid #2e2e2e;border-radius:3px"></div>
<div class="a" style="left:1351px;top:352px;width:48px;height:10px;background:#484848;"></div>
<div class="t" style="left:1353px;top:354px;font-size:9.5px;color:#dcdcdc;letter-spacing:-0.35px;">Geometry</div>
<div class="t" style="right:78px;top:372px;font-size:9.5px;color:#dcdcdc;letter-spacing:-0.35px;">Global Scale</div>
<div class="a" style="left:1418px;top:369px;width:38px;height:12px;background:#555;"></div>
<div class="t" style="left:1421px;top:372px;font-size:9.5px;color:#dcdcdc;letter-spacing:-0.3px;">100,0</div>
<svg class="a" style="left:1449px;top:370px;" width="6" height="10" viewBox="0 0 6 10"><path d="M0 4l3-3 3 3zM0 6l3 3 3-3z" fill="#ddd"/></svg>
<div class="t" style="left:1462px;top:372px;font-size:9.5px;color:#dcdcdc;letter-spacing:0px;">%</div>
<div class="t" style="right:78px;top:388px;font-size:9.5px;color:#dcdcdc;letter-spacing:-0.35px;">Curve Steps</div>
<div class="a" style="left:1418px;top:386px;width:45px;height:12px;background:#555;"></div>
<div class="t" style="left:1421px;top:389px;font-size:9.5px;color:#dcdcdc;letter-spacing:-0.3px;">0</div>
<svg class="a" style="left:1456px;top:387px;" width="6" height="10" viewBox="0 0 6 10"><path d="M0 4l3-3 3 3zM0 6l3 3 3-3z" fill="#ddd"/></svg>
<div class="t" style="right:78px;top:405px;font-size:9.5px;color:#dcdcdc;letter-spacing:-0.35px;">Surface Interp.</div>
<div class="a" style="left:1418px;top:403px;width:45px;height:11px;background:#555;"></div>
<div class="t" style="left:1421px;top:405px;font-size:9.5px;color:#dcdcdc;letter-spacing:-0.3px;">0,05m</div>
<div class="a" style="left:96px;top:307px;width:819px;height:490px;background:#555555;"></div>
<div class="a" style="left:97px;top:308px;width:817px;height:488px;background:#303030;"></div>
<div class="a" style="left:97px;top:308px;width:817px;height:24px;background:#ffffff;"></div>
<div class="a" style="left:104px;top:313px;width:11px;height:13px;background:#d2ecec;"></div>
<div class="t" style="left:106px;top:315px;font-size:10px;color:#1a8e96;letter-spacing:0px;font-weight:bold;">3</div>
<div class="t" style="left:120px;top:316px;font-size:10px;color:#9a9a9a;letter-spacing:-0.35px;">V-Ray Frame Buffer - [200.0% of 720 x 486]</div>
<div class="a" style="left:821px;top:319px;width:9px;height:1px;background:#888;"></div>
<div class="a" style="left:855px;top:314px;width:10px;height:10px;background:transparent;border:1px solid #777"></div>
<svg class="a" style="left:890px;top:314px;" width="11" height="11" viewBox="0 0 11 11"><path d="M.5 .5l10 10M10.5 .5l-10 10" stroke="#777" stroke-width="1"/></svg>
<div class="t" style="left:112px;top:337px;font-size:9.5px;color:#d4d4d4;letter-spacing:-0.3px;">File</div>
<div class="t" style="left:143px;top:337px;font-size:9.5px;color:#d4d4d4;letter-spacing:-0.3px;">Render</div>
<div class="t" style="left:188px;top:337px;font-size:9.5px;color:#d4d4d4;letter-spacing:-0.3px;">Image</div>
<div class="t" style="left:230px;top:337px;font-size:9.5px;color:#d4d4d4;letter-spacing:-0.3px;">View</div>
<div class="t" style="left:266px;top:337px;font-size:9.5px;color:#d4d4d4;letter-spacing:-0.3px;">Options</div>
<div class="t" style="right:809px;top:340px;font-size:9px;color:#c8c8c8;letter-spacing:-0.3px;">New version available!</div>
<div class="a" style="left:104px;top:352px;width:584px;height:2px;background:#161616;"></div>
<div class="a" style="left:104px;top:361px;width:124px;height:14px;background:#3a3a3a;border:1px solid #1c1c1c;border-radius:2px"></div>
<div class="t" style="left:107px;top:364px;font-size:9.5px;color:#c8c8c8;letter-spacing:-0.35px;">RGB color</div>
<svg class="a" style="left:217px;top:365px;" width="8" height="6" viewBox="0 0 8 6"><path d="M0 .5h8L4 5z" fill="#6ab0d8"/></svg>
<svg class="a" style="left:234px;top:361px;" width="14" height="14" viewBox="0 0 14 14"><circle cx="7" cy="7" r="6" fill="#eee"/><path d="M7 1a6 6 0 0 1 0 12z M1 7h6" fill="#333"/><path d="M1 7a6 6 0 0 0 6 6V7z" fill="#eee"/></svg>
<svg class="a" style="left:445px;top:358px;" width="20" height="20" viewBox="0 0 20 20"><path d="M2 2h11l3 3v11H2z" fill="none" stroke="#ddd" stroke-width="1.5"/><rect x="5" y="2" width="7" height="5" fill="none" stroke="#ddd" stroke-width="1.3"/><rect x="5" y="10" width="8" height="6" fill="none" stroke="#ddd" stroke-width="1.3"/></svg>
<svg class="a" style="left:472px;top:358px;" width="20" height="20" viewBox="0 0 20 20"><path d="M3 1h8l4 4v13H3z" fill="none" stroke="#ddd" stroke-width="1.5"/><path d="M6 9l6 6M12 9l-6 6" stroke="#e03030" stroke-width="1.8"/></svg>
<svg class="a" style="left:499px;top:358px;" width="20" height="20" viewBox="0 0 20 20"><rect x="2" y="2" width="12" height="12" fill="none" stroke="#5ab0e0" stroke-width="1.5" stroke-dasharray="2 2"/><path d="M9 8l8 5-4 1 2 4-2 1-2-4-2 3z" fill="#eee"/></svg>
<svg class="a" style="left:527px;top:358px;" width="20" height="20" viewBox="0 0 20 20"><text x="1" y="13" font-size="9" font-weight="bold" fill="#ddd" font-family="Liberation Sans">50%</text><path d="M2 2h14M2 17h14" stroke="#aaa"/></svg>
<svg class="a" style="left:554px;top:358px;" width="20" height="20" viewBox="0 0 20 20"><rect x="2" y="2" width="15" height="15" fill="none" stroke="#5ab0e0" stroke-width="1.5"/><rect x="5" y="9" width="9" height="5" fill="none" stroke="#5ab0e0" stroke-width="1.5"/></svg>
<svg class="a" style="left:582px;top:358px;" width="20" height="20" viewBox="0 0 20 20"><path d="M3 4l10-2 4 6-4 8-9-3z" fill="none" stroke="#555" stroke-width="1.5"/></svg>
<svg class="a" style="left:609px;top:358px;" width="20" height="20" viewBox="0 0 20 20"><path d="M3 8q1-4 7-4t7 4v5q-1 4-7 4t-7-4z" fill="none" stroke="#eee" stroke-width="1.6"/><path d="M10 8l7 5-7 5z" fill="#30c050"/></svg>
<svg class="a" style="left:636px;top:358px;" width="20" height="20" viewBox="0 0 20 20"><path d="M3 8q1-4 7-4t7 4v5q-1 4-7 4t-7-4z" fill="none" stroke="#666" stroke-width="1.6"/></svg>
<svg class="a" style="left:663px;top:358px;" width="20" height="20" viewBox="0 0 20 20"><path d="M3 8q1-4 7-4t7 4v5q-1 4-7 4t-7-4z" fill="none" stroke="#eee" stroke-width="1.6"/><path d="M10 4V1" stroke="#eee" stroke-width="1.6"/></svg>
<svg class="a" style="left:0;top:0;filter:blur(0.45px)" width="1488" height="907" viewBox="0 0 1488 907"><defs><clipPath id="vfc"><rect x="104" y="384" width="585" height="393"/></clipPath></defs><g clip-path="url(#vfc)"><rect x="104" y="384" width="585" height="393" fill="#e9e9ea"/><defs><clipPath id="vt"><polygon points="104,417 689,384 689,777 337,777 199,607 104,493"/></clipPath><clipPath id="vs"><polygon points="104,493 199,607 104,623"/></clipPath></defs><g clip-path="url(#vt)"><polygon points="104,417 689,384 689,777 337,777 199,607 104,493" fill="#a8806a"/><path d="M103.4 417.8L122.4 416.7L131.2 425.6L112.2 426.8ZM123.8 416.7L142.6 415.6L151.3 424.4L132.5 425.6ZM164.0 414.5L182.3 413.5L190.8 422.1L172.5 423.2ZM222.6 411.4L240.3 410.3L248.5 418.6L230.8 419.8ZM279.2 408.3L296.3 407.3L304.2 415.3L287.2 416.4ZM297.7 407.3L314.5 406.4L322.4 414.2L305.5 415.3ZM351.9 404.4L368.1 403.5L375.7 411.0L359.5 412.1ZM387.0 402.5L402.9 401.6L410.3 409.0L394.5 410.0ZM438.3 399.8L453.6 398.9L460.8 406.0L445.5 407.0ZM471.5 398.0L486.4 397.1L493.5 404.0L478.5 405.0ZM551.4 393.7L565.5 392.9L572.1 399.3L558.1 400.2ZM612.2 390.5L625.6 389.7L632.0 395.7L618.6 396.6ZM641.7 388.9L654.7 388.1L660.9 394.0L647.9 394.9ZM75.1 430.4L94.4 429.2L103.4 438.4L84.1 439.8ZM196.0 423.2L214.0 422.1L222.5 430.6L204.5 431.9ZM309.2 416.5L326.0 415.4L333.9 423.3L317.1 424.5ZM363.0 413.3L379.2 412.2L386.8 419.8L370.7 420.9ZM397.9 411.2L413.7 410.2L421.2 417.5L405.4 418.7ZM665.1 395.3L677.9 394.4L684.1 400.3L671.3 401.2ZM169.1 435.6L187.4 434.3L196.1 443.1L177.9 444.5ZM188.8 434.3L206.9 433.0L215.5 441.7L197.4 443.1ZM338.7 424.5L355.1 423.3L363.0 431.1L346.6 432.4ZM374.1 422.1L390.1 421.0L397.8 428.6L381.8 429.8ZM555.5 410.2L569.5 409.2L576.3 415.8L562.3 416.9ZM570.9 409.2L584.7 408.2L591.5 414.7L577.6 415.8ZM645.4 404.3L658.4 403.4L664.8 409.4L651.8 410.4ZM659.8 403.4L672.7 402.4L679.0 408.4L666.2 409.4ZM239.6 441.4L257.1 440.1L265.6 448.5L248.1 450.0ZM332.0 434.8L348.5 433.5L356.6 441.4L340.1 442.8ZM367.6 432.2L383.7 431.0L391.6 438.7L375.5 440.1ZM518.2 421.4L532.7 420.3L539.8 427.1L525.4 428.4ZM114.0 461.9L132.9 460.3L142.2 469.5L123.3 471.2ZM232.5 452.6L250.1 451.1L258.7 459.7L241.2 461.3ZM343.3 444.0L359.7 442.6L367.8 450.5L351.4 452.0ZM590.1 424.7L603.7 423.5L610.5 430.0L596.9 431.3ZM44.0 479.3L63.6 477.5L73.4 487.3L53.7 489.2ZM126.9 472.3L145.6 470.6L154.9 479.9L136.2 481.7ZM166.9 469.0L185.3 467.3L194.4 476.3L176.1 478.1ZM244.5 462.4L262.0 460.8L270.7 469.4L253.2 471.1ZM300.4 457.7L317.3 456.2L325.7 464.4L308.9 466.1ZM318.7 456.2L335.3 454.6L343.6 462.8L327.0 464.4ZM336.7 454.6L353.1 453.1L361.4 461.2L344.9 462.8ZM406.9 448.7L422.5 447.3L430.4 454.9L414.7 456.5ZM457.5 444.5L472.6 443.1L480.2 450.4L465.1 451.9ZM474.0 443.1L488.9 441.7L496.4 448.9L481.5 450.4ZM643.8 428.7L656.9 427.5L663.5 433.8L650.5 435.1ZM658.3 427.5L671.1 426.3L677.7 432.5L664.9 433.8ZM78.2 488.4L97.5 486.5L107.2 496.1L87.9 498.2ZM119.3 484.7L138.2 482.8L147.7 492.2L128.8 494.2ZM293.6 468.8L310.5 467.2L319.1 475.5L302.2 477.3ZM417.6 457.6L433.2 456.1L441.1 463.7L425.6 465.3ZM484.3 451.5L499.1 450.1L506.7 457.3L491.9 458.9ZM249.4 483.9L266.8 482.0L275.7 490.7L258.3 492.7ZM268.2 482.0L285.4 480.2L294.2 488.8L277.0 490.7ZM478.2 461.6L493.1 460.0L500.8 467.4L485.9 469.1ZM510.6 458.5L525.1 456.9L532.6 464.1L518.1 465.7ZM647.6 445.2L660.6 443.8L667.4 450.1L654.4 451.6ZM62.7 514.4L82.2 512.2L92.2 522.1L72.8 524.4ZM104.2 510.1L123.2 508.0L133.0 517.6L114.0 519.8ZM280.0 491.8L297.0 489.9L305.9 498.5L288.8 500.6ZM387.7 480.7L403.6 478.9L411.9 486.8L396.0 488.7ZM472.2 471.9L487.1 470.2L495.0 477.6L480.0 479.4ZM699.1 448.3L711.5 446.9L718.2 453.0L705.7 454.5ZM54.9 527.8L74.5 525.5L84.7 535.5L65.1 537.9ZM117.1 520.9L136.0 518.7L145.8 528.3L127.0 530.7ZM254.3 505.8L271.7 503.7L280.8 512.5L263.5 514.7ZM466.1 482.4L481.1 480.6L489.1 488.1L474.1 490.0ZM679.9 458.8L692.5 457.2L699.4 463.5L686.7 465.1ZM89.0 536.5L108.2 534.1L118.3 544.0L99.1 546.6ZM228.3 520.2L245.9 518.0L255.3 527.0L237.7 529.4ZM266.2 515.8L283.4 513.6L292.6 522.4L275.3 524.7ZM392.2 501.0L408.0 499.0L416.5 507.1L400.7 509.2ZM426.5 497.0L441.9 495.0L450.2 502.9L434.8 505.0ZM492.7 489.2L507.4 487.4L515.4 494.8L500.7 496.8ZM508.8 487.4L523.4 485.5L531.2 492.8L516.7 494.8ZM571.5 480.0L585.3 478.2L592.8 485.2L579.0 487.1ZM586.7 478.2L600.4 476.5L607.8 483.3L594.2 485.2ZM368.3 514.6L384.4 512.4L393.1 520.7L377.0 523.0ZM437.1 506.1L452.4 504.0L460.8 511.8L445.5 514.0ZM502.9 497.9L517.5 495.9L525.5 503.4L510.9 505.5ZM565.8 490.1L579.7 488.2L587.4 495.3L573.5 497.3ZM94.3 561.4L113.5 558.7L123.8 568.7L104.7 571.5ZM396.7 521.8L412.5 519.6L421.2 527.7L405.4 530.1ZM447.7 515.1L462.9 513.0L471.3 520.8L456.1 523.1ZM544.6 502.5L558.7 500.4L566.6 507.7L552.4 509.8ZM649.8 488.7L662.7 486.8L670.0 493.4L657.0 495.4ZM664.1 486.8L677.0 484.9L684.1 491.4L671.3 493.4ZM692.4 483.1L704.9 481.3L711.9 487.6L699.4 489.5ZM65.9 578.3L85.3 575.4L96.0 585.6L76.5 588.7ZM127.7 569.8L146.4 567.0L156.7 576.8L138.0 579.8ZM407.5 531.2L423.2 528.8L431.9 536.9L416.3 539.4ZM441.5 526.5L456.7 524.2L465.3 532.1L450.0 534.5ZM507.1 517.4L521.6 515.3L529.8 522.8L515.2 525.1ZM538.8 513.1L553.0 510.9L561.0 518.2L546.8 520.5ZM569.8 508.8L583.7 506.7L591.5 513.8L577.6 516.0ZM600.1 504.6L613.7 502.6L621.3 509.5L607.8 511.7ZM644.4 498.5L657.4 496.5L664.8 503.2L651.8 505.3ZM673.1 494.6L685.8 492.6L693.1 499.1L680.3 501.1ZM58.1 592.7L77.6 589.7L88.5 600.1L68.9 603.2ZM199.7 572.2L217.7 569.4L227.7 578.9L209.8 581.8ZM275.9 561.2L293.0 558.5L302.6 567.5L285.5 570.3ZM330.8 553.2L347.3 550.6L356.6 559.3L340.1 562.0ZM579.4 517.2L593.2 515.0L601.0 522.1L587.3 524.4ZM609.6 512.8L623.0 510.7L630.7 517.6L617.2 519.8ZM624.4 510.7L637.6 508.5L645.2 515.4L632.0 517.6ZM639.0 508.5L652.1 506.4L659.6 513.2L646.5 515.4ZM153.0 591.8L171.5 588.8L181.9 598.7L163.4 601.8ZM527.1 534.9L541.5 532.5L549.7 540.0L535.4 542.5ZM558.4 530.2L572.4 527.8L580.5 535.1L566.5 537.6ZM573.8 527.8L587.6 525.5L595.6 532.7L581.8 535.1ZM662.6 514.3L675.4 512.2L682.9 518.8L670.0 521.1ZM676.8 512.2L689.5 510.0L696.9 516.6L684.2 518.8ZM224.1 593.6L241.8 590.5L251.9 599.9L234.2 603.1ZM335.4 575.8L351.9 573.0L361.4 581.7L344.9 584.7ZM456.3 556.5L471.4 553.9L480.2 561.9L465.1 564.6ZM537.1 543.7L551.3 541.2L559.6 548.7L545.3 551.3ZM583.4 536.3L597.1 533.9L605.1 541.1L591.4 543.6ZM699.7 517.8L712.1 515.6L719.4 522.0L707.0 524.3ZM76.7 630.8L96.0 627.3L107.2 637.7L87.9 641.4ZM117.9 623.9L136.8 620.5L147.7 630.7L128.8 634.2ZM197.6 610.6L215.6 607.4L226.0 617.1L208.0 620.4ZM236.1 604.2L253.7 601.0L263.9 610.5L246.3 613.8ZM328.8 588.8L345.3 585.8L354.9 594.6L338.4 597.7ZM607.9 542.2L621.4 539.8L629.3 546.8L615.9 549.4ZM170.7 628.3L189.0 624.9L199.7 634.8L181.4 638.3ZM322.1 602.0L338.7 598.8L348.5 607.7L331.9 611.0ZM340.1 598.8L356.5 595.7L366.2 604.5L349.8 607.8ZM357.9 595.7L374.1 592.7L383.7 601.3L367.5 604.5ZM427.1 583.7L442.6 580.7L451.7 589.0L436.3 592.0ZM493.4 572.1L508.1 569.3L516.8 577.2L502.1 580.1ZM525.4 566.6L539.7 563.8L548.3 571.4L533.9 574.3ZM632.0 548.0L645.2 545.5L653.1 552.4L639.9 555.0ZM661.0 542.9L673.8 540.5L681.6 547.2L668.7 549.8ZM102.8 654.0L121.8 650.3L133.0 660.7L114.0 664.5ZM163.4 643.0L181.7 639.4L192.6 649.4L174.2 653.1ZM260.0 625.5L277.3 622.1L287.5 631.4L270.2 635.0ZM454.5 590.1L469.6 587.1L478.7 595.3L463.6 598.4ZM519.5 578.3L533.9 575.5L542.6 583.2L528.2 586.1ZM596.8 564.3L610.4 561.6L618.6 568.8L605.1 571.6ZM156.0 658.0L174.4 654.2L185.5 664.3L167.0 668.2ZM195.5 650.5L213.5 646.9L224.2 656.7L206.2 660.5ZM271.8 636.1L288.9 632.6L299.2 641.9L282.1 645.5ZM481.3 596.4L496.2 593.3L505.2 601.3L490.4 604.5ZM545.2 584.3L559.3 581.4L568.0 589.0L553.8 592.0ZM576.1 578.5L589.9 575.6L598.3 583.0L584.5 586.0ZM621.1 570.0L634.4 567.2L642.6 574.3L629.3 577.2ZM108.1 681.2L127.1 677.2L138.5 687.6L119.6 691.8ZM148.6 673.2L167.1 669.3L178.3 679.5L159.8 683.5ZM356.0 632.4L372.2 628.9L382.1 637.7L365.9 641.4ZM475.3 608.9L490.2 605.7L499.3 613.7L484.4 617.1ZM507.7 602.5L522.2 599.4L531.2 607.2L516.7 610.5ZM687.8 567.0L700.3 564.3L708.2 571.0L695.6 573.8ZM100.5 697.1L119.6 692.9L131.2 703.4L112.2 707.7ZM181.0 680.6L199.1 676.6L210.2 686.6L192.1 690.7ZM239.0 668.7L256.5 664.9L267.3 674.5L249.7 678.5ZM331.5 649.8L348.0 646.1L358.2 655.1L341.7 658.9ZM401.9 635.4L417.6 631.9L427.3 640.4L411.6 644.1ZM469.2 621.6L484.2 618.2L493.5 626.4L478.5 629.9ZM501.8 614.9L516.4 611.7L525.5 619.6L510.9 623.0ZM517.8 611.7L532.2 608.4L541.2 616.2L526.8 619.6ZM92.9 713.2L112.0 708.9L123.8 719.5L104.7 724.0ZM231.9 683.7L249.5 679.6L260.4 689.3L242.9 693.5ZM250.9 679.6L268.3 675.6L279.1 685.2L261.7 689.3ZM412.7 645.2L428.3 641.6L438.0 650.2L422.5 653.9ZM146.4 716.2L165.0 711.8L176.5 722.1L158.0 726.6ZM224.9 698.9L242.5 694.7L253.6 704.4L235.9 708.8ZM473.5 644.0L488.4 640.4L497.9 648.6L483.0 652.3ZM537.7 629.9L551.9 626.4L561.0 634.2L546.8 637.8ZM643.4 606.6L656.4 603.4L664.8 610.4L651.8 613.7ZM217.7 714.4L235.5 710.0L246.7 719.8L229.0 724.4ZM417.1 668.8L432.7 664.9L442.6 673.5L427.1 677.5ZM563.0 635.4L577.0 631.9L586.0 639.5L572.0 643.2ZM593.5 628.5L607.1 625.0L615.9 632.4L602.3 636.0ZM681.0 608.5L693.7 605.3L701.9 612.1L689.3 615.4ZM695.1 605.3L707.5 602.1L715.7 608.8L703.2 612.1ZM191.2 734.7L209.2 730.1L220.8 740.2L202.7 744.9ZM304.6 707.9L321.4 703.5L332.2 712.9L315.4 717.3ZM393.6 686.8L409.4 682.7L419.6 691.4L403.8 695.7ZM427.8 678.7L443.2 674.7L453.2 683.2L437.8 687.3ZM444.6 674.7L459.9 670.8L469.8 679.2L454.5 683.2ZM510.1 659.2L524.6 655.5L534.1 663.4L519.6 667.3ZM675.8 620.0L688.5 616.7L696.8 623.6L684.2 627.0ZM689.9 616.7L702.4 613.4L710.7 620.2L698.2 623.6ZM103.6 770.6L122.6 765.6L134.9 776.2L115.9 781.4ZM279.4 727.5L296.5 723.0L307.5 732.5L290.5 737.2ZM297.9 723.0L314.7 718.5L325.7 727.9L308.8 732.5ZM520.2 668.6L534.6 664.7L544.0 672.6L529.6 676.6ZM597.4 649.6L611.0 646.0L620.0 653.4L606.4 657.2ZM612.4 646.0L625.8 642.4L634.6 649.7L621.3 653.4ZM698.7 624.8L711.1 621.5L719.4 628.2L707.0 631.7ZM234.8 752.7L252.4 747.9L263.9 757.7L246.3 762.6ZM398.1 711.3L413.8 707.0L424.2 715.7L408.5 720.2ZM465.6 694.2L480.6 690.1L490.5 698.4L475.5 702.7ZM636.4 651.0L649.5 647.3L658.3 654.5L645.2 658.3ZM189.0 779.0L207.1 773.9L219.0 784.1L200.9 789.3ZM265.6 759.0L282.8 754.1L294.2 763.7L277.0 768.8ZM302.6 749.3L319.4 744.5L330.6 753.9L313.8 758.8ZM374.3 730.6L390.3 726.0L401.0 734.9L384.9 739.6ZM408.9 721.5L424.6 717.0L435.0 725.7L419.4 730.3ZM524.3 691.3L538.6 687.2L548.3 695.1L533.9 699.4ZM540.0 687.2L554.2 683.1L563.8 690.9L549.6 695.2ZM674.2 652.1L686.9 648.4L695.6 655.3L682.9 659.2ZM239.8 780.2L257.3 775.1L269.0 784.9L251.4 790.2ZM258.7 775.1L276.0 770.1L287.5 779.8L270.2 785.0ZM277.4 770.1L294.4 765.1L305.9 774.6L288.8 779.8ZM314.1 760.1L330.8 755.3L342.0 764.6L325.3 769.6ZM367.8 745.7L383.9 740.9L394.7 749.9L378.6 754.8ZM486.2 713.7L501.0 709.3L511.0 717.5L496.2 722.0ZM502.4 709.3L517.0 705.0L526.9 713.1L512.3 717.5ZM683.1 660.5L695.7 656.7L704.4 663.6L691.8 667.5ZM194.1 807.6L212.1 802.2L224.2 812.3L206.2 817.9ZM232.7 796.8L250.3 791.5L262.2 801.4L244.6 806.8ZM270.5 786.3L287.6 781.1L299.2 790.7L282.1 796.1ZM289.0 781.1L306.0 776.0L317.5 785.5L300.5 790.8ZM361.3 761.0L377.4 756.1L388.4 765.1L372.2 770.2ZM480.2 727.9L495.0 723.3L505.2 731.6L490.3 736.2ZM605.2 693.0L618.7 688.9L628.0 696.3L614.5 700.6ZM663.7 676.7L676.5 672.8L685.4 679.8L672.6 683.9ZM677.9 672.8L690.6 668.8L699.4 675.8L686.7 679.8ZM106.7 847.8L125.7 842.0L138.5 852.7L119.6 858.7ZM318.9 786.9L335.5 781.7L346.9 791.0L330.2 796.4ZM522.5 728.4L536.9 723.9L546.9 731.8L532.5 736.5ZM629.4 697.7L642.6 693.5L651.8 700.8L638.6 705.1ZM658.4 689.4L671.3 685.3L680.3 692.3L667.4 696.6ZM199.2 836.6L217.1 830.8L229.5 840.9L211.5 846.8ZM218.5 830.8L236.3 825.2L248.5 835.1L230.7 841.0ZM275.3 814.0L292.4 808.5L304.2 818.1L287.1 823.8ZM312.1 803.1L328.8 797.8L340.4 807.1L323.7 812.6ZM579.0 724.1L592.7 719.6L602.4 727.2L588.6 731.9ZM341.5 808.6L357.9 803.2L369.4 812.3L353.0 817.9ZM478.4 766.9L493.3 761.9L503.7 770.2L488.9 775.3ZM526.7 752.2L541.0 747.4L551.1 755.3L536.8 760.2ZM542.4 747.4L556.5 742.6L566.6 750.5L552.4 755.3ZM557.9 742.6L571.9 737.9L581.8 745.7L567.9 750.5ZM633.2 719.7L646.3 715.3L655.7 722.5L642.6 727.1ZM676.4 706.5L689.0 702.2L698.1 709.2L685.4 713.6ZM690.4 702.2L703.0 698.0L711.9 704.9L699.4 709.2ZM204.2 866.0L222.1 859.9L234.7 870.0L216.8 876.2ZM352.8 819.4L369.0 813.8L380.5 822.9L364.2 828.6ZM370.4 813.8L386.5 808.4L397.8 817.3L381.8 823.0ZM488.7 776.7L503.4 771.7L513.9 779.9L499.2 785.1ZM552.2 756.8L566.3 752.0L576.3 759.7L562.3 764.7ZM598.0 742.4L611.6 737.7L621.3 745.2L607.8 750.0ZM671.1 719.5L683.9 715.1L693.0 722.1L680.3 726.6ZM216.4 877.7L234.2 871.5L246.7 881.5L229.0 887.9ZM254.5 865.4L271.9 859.4L284.2 869.1L266.8 875.3ZM328.3 841.6L344.8 835.9L356.5 845.1L340.0 851.0ZM363.9 830.1L380.0 824.5L391.6 833.5L375.4 839.3ZM482.6 791.8L497.5 786.6L508.1 794.8L493.3 800.2ZM651.5 737.3L664.5 732.7L673.9 739.8L660.9 744.6ZM189.8 902.3L207.9 895.8L220.7 906.0L202.7 912.6ZM339.6 852.6L356.0 846.7L367.8 855.8L351.4 861.9ZM409.6 829.4L425.2 823.7L436.5 832.4L420.9 838.2ZM426.6 823.7L442.1 818.1L453.2 826.7L437.8 832.5ZM540.7 785.9L554.8 780.7L565.2 788.5L551.0 793.9ZM556.2 780.7L570.2 775.6L580.5 783.3L566.5 788.6ZM631.6 755.7L644.8 750.9L654.4 758.1L641.2 763.1ZM278.1 888.3L295.2 882.0L307.5 891.6L290.5 898.0ZM296.6 882.0L313.5 875.8L325.7 885.2L308.8 891.6ZM403.3 845.6L419.0 839.8L430.4 848.5L414.7 854.5ZM454.0 828.3L469.1 822.7L480.2 831.1L465.0 836.9ZM519.0 806.1L533.5 800.8L544.0 808.7L529.6 814.3ZM175.3 939.8L193.5 932.9L206.7 943.1L188.5 950.2ZM289.8 899.7L306.7 893.2L319.1 902.7L302.2 909.3ZM379.5 868.2L395.5 862.2L407.2 871.0L391.2 877.3ZM431.0 850.2L446.4 844.3L457.8 852.9L442.4 858.9ZM480.8 832.8L495.7 827.1L506.7 835.3L491.8 841.1ZM226.4 937.9L244.0 931.1L257.0 941.0L239.4 948.0ZM245.4 931.1L262.9 924.3L275.7 934.1L258.3 941.0ZM441.6 860.6L456.9 854.6L468.3 863.0L453.0 869.2ZM458.3 854.6L473.4 848.6L484.6 857.0L469.5 863.1ZM538.9 825.6L553.1 820.0L563.8 827.8L549.6 833.5ZM615.2 798.1L628.6 792.8L638.6 800.2L625.3 805.6ZM630.0 792.8L643.2 787.6L653.1 794.8L639.9 800.2ZM673.3 777.3L686.0 772.2L695.6 779.1L682.9 784.4ZM199.9 963.9L217.9 956.8L231.2 966.8L213.2 974.1ZM219.3 956.8L237.0 949.7L250.2 959.6L232.4 966.9ZM312.9 922.3L329.6 915.6L342.0 924.9L325.3 931.7ZM331.0 915.6L347.5 909.0L359.8 918.2L343.3 924.9ZM401.4 889.6L417.1 883.3L428.9 892.0L413.1 898.5ZM548.8 835.2L562.9 829.5L573.5 837.2L559.4 843.1Z" fill="#c09272"/><path d="M40.8 421.1L60.5 420.0L69.6 429.3L49.9 430.6ZM260.5 409.3L277.8 408.3L285.9 416.4L268.6 417.5ZM369.5 403.5L385.6 402.5L393.1 410.0L377.1 411.0ZM487.8 397.1L502.6 396.3L509.6 403.0L494.8 404.0ZM627.0 389.7L640.3 388.9L646.5 394.9L633.3 395.8ZM670.4 387.3L683.2 386.6L689.2 392.3L676.5 393.2ZM32.9 433.0L52.7 431.7L62.0 441.1L42.2 442.5ZM176.4 424.4L194.6 423.2L203.2 431.9L185.0 433.1ZM272.3 418.7L289.5 417.6L297.6 425.7L280.4 426.9ZM432.0 409.2L447.4 408.2L454.8 415.3L439.4 416.4ZM606.7 398.7L620.2 397.9L626.7 404.0L613.2 405.0ZM621.6 397.9L634.9 397.0L641.3 403.1L628.0 404.0ZM650.8 396.1L663.7 395.3L670.0 401.2L657.1 402.1ZM246.6 430.5L264.0 429.3L272.4 437.6L254.9 438.9ZM284.0 428.0L301.1 426.8L309.2 434.9L292.2 436.3ZM295.7 437.4L312.5 436.1L320.8 444.2L303.9 445.6ZM385.1 431.0L401.0 429.7L408.8 437.3L392.9 438.7ZM419.5 428.5L435.0 427.3L442.6 434.7L427.1 436.0ZM453.2 426.1L468.3 424.9L475.7 432.1L460.6 433.4ZM534.1 420.3L548.3 419.2L555.4 425.9L541.1 427.1ZM610.6 414.8L624.0 413.7L630.7 420.0L617.3 421.2ZM72.8 465.1L92.1 463.5L101.6 472.9L82.2 474.7ZM93.5 463.5L112.6 461.9L122.0 471.2L102.9 473.0ZM134.3 460.3L153.0 458.7L162.2 467.8L143.5 469.5ZM154.4 458.7L172.9 457.2L181.9 466.2L163.5 467.8ZM174.3 457.2L192.5 455.6L201.4 464.5L183.2 466.2ZM213.3 454.1L231.1 452.6L239.9 461.3L222.1 462.9ZM288.8 448.2L305.8 446.8L314.2 455.0L297.2 456.6ZM361.1 442.6L377.2 441.2L385.3 449.0L369.1 450.5ZM480.0 433.3L494.9 432.0L502.3 439.2L487.4 440.5ZM147.0 470.6L165.5 469.0L174.8 478.1L156.2 479.9ZM186.7 467.3L204.8 465.6L213.8 474.6L195.7 476.3ZM225.4 464.0L243.1 462.4L251.9 471.1L234.2 472.8ZM372.2 451.6L388.2 450.2L396.3 458.0L380.2 459.6ZM490.3 441.7L505.0 440.3L512.5 447.5L497.7 448.9ZM538.2 437.6L552.4 436.3L559.6 443.2L545.4 444.6ZM98.9 486.5L117.9 484.7L127.5 494.2L108.5 496.2ZM256.4 472.2L273.7 470.5L282.5 479.1L265.2 480.9ZM311.9 467.2L328.7 465.5L337.1 473.8L320.4 475.6ZM365.7 462.3L381.8 460.7L390.0 468.7L373.9 470.4ZM563.5 444.4L577.4 443.0L584.6 449.7L570.7 451.2ZM594.0 441.6L607.6 440.2L614.6 446.8L601.0 448.3ZM681.5 433.7L694.1 432.4L700.6 438.5L688.0 439.8ZM49.5 503.3L69.1 501.2L79.0 511.1L59.4 513.3ZM70.5 501.2L89.9 499.2L99.7 509.0L80.3 511.1ZM132.1 495.3L150.8 493.3L160.4 502.7L141.7 504.8ZM152.2 493.3L170.7 491.4L180.1 500.6L161.7 502.7ZM341.4 474.9L357.7 473.2L366.2 481.3L349.8 483.2ZM494.5 460.0L509.2 458.5L516.8 465.7L502.1 467.4ZM526.5 456.9L540.8 455.4L548.3 462.5L534.0 464.1ZM557.8 453.9L571.8 452.4L579.1 459.3L565.1 460.9ZM588.4 450.9L602.0 449.4L609.2 456.1L595.5 457.7ZM164.8 503.8L183.1 501.7L192.6 511.0L174.3 513.2ZM204.0 499.7L221.9 497.7L231.2 506.8L213.3 508.9ZM422.1 477.1L437.5 475.3L445.7 483.1L430.2 484.9ZM438.9 475.3L454.2 473.6L462.3 481.2L447.0 483.1ZM455.6 473.6L470.8 471.9L478.7 479.4L463.6 481.3ZM488.5 470.2L503.3 468.5L511.0 475.9L496.3 477.7ZM552.1 463.6L566.1 462.0L573.5 469.0L559.5 470.7ZM642.2 454.2L655.3 452.7L662.2 459.2L649.2 460.8ZM685.1 449.8L697.7 448.3L704.4 454.5L691.8 456.1ZM177.2 514.3L195.4 512.1L205.0 521.4L186.8 523.7ZM216.2 510.0L234.0 507.9L243.3 516.9L225.5 519.1ZM235.4 507.9L252.9 505.8L262.2 514.7L244.6 516.9ZM291.6 501.6L308.5 499.6L317.5 508.2L300.5 510.4ZM346.0 495.6L362.3 493.7L371.0 501.9L354.6 504.0ZM449.5 484.2L464.7 482.4L472.8 490.0L457.6 492.0ZM607.3 466.8L620.8 465.2L628.0 471.8L614.6 473.6ZM636.8 463.5L650.0 461.9L657.0 468.4L643.9 470.1ZM47.1 541.4L66.8 539.0L77.2 549.1L57.5 551.7ZM109.6 534.1L128.5 531.7L138.5 541.5L119.6 544.0ZM129.9 531.7L148.6 529.4L158.5 539.0L139.8 541.5ZM150.0 529.4L168.5 527.1L178.3 536.6L159.8 539.0ZM443.3 495.0L458.6 493.1L466.8 500.8L451.5 502.9ZM460.0 493.1L475.0 491.2L483.2 498.8L468.1 500.8ZM688.8 466.3L701.3 464.7L708.2 470.9L695.6 472.6ZM201.9 535.2L219.8 532.8L229.5 542.1L211.5 544.6ZM296.4 523.5L313.3 521.3L322.4 529.9L305.5 532.3ZM332.8 519.0L349.2 516.8L358.2 525.3L341.7 527.6ZM470.4 502.0L485.3 499.9L493.5 507.6L478.5 509.7ZM518.9 495.9L533.3 494.0L541.2 501.3L526.8 503.4ZM581.1 488.2L594.8 486.3L602.4 493.3L588.7 495.3ZM655.1 479.1L668.0 477.3L675.2 483.8L662.3 485.7ZM683.6 475.5L696.2 473.8L703.2 480.1L690.6 481.9ZM52.6 566.8L72.2 564.1L82.8 574.3L63.2 577.2ZM155.2 553.4L173.7 550.8L183.7 560.4L165.3 563.2ZM194.7 548.2L212.7 545.7L222.5 555.1L204.5 557.8ZM214.1 545.7L231.9 543.2L241.6 552.5L223.8 555.1ZM344.0 528.7L360.4 526.4L369.4 534.8L353.0 537.3ZM678.4 484.9L691.0 483.1L698.1 489.5L685.5 491.5ZM147.8 567.0L166.3 564.2L176.5 574.0L158.0 576.9ZM187.4 561.5L205.5 558.8L215.5 568.3L197.4 571.1ZM282.7 548.4L299.8 545.8L309.2 554.7L292.2 557.4ZM474.6 521.9L489.5 519.7L497.9 527.4L483.0 529.8ZM629.8 500.5L643.0 498.5L650.5 505.3L637.3 507.4ZM180.2 575.0L198.3 572.2L208.5 581.8L190.3 584.8ZM257.2 563.9L274.5 561.2L284.2 570.3L266.9 573.1ZM294.4 558.5L311.3 555.8L320.8 564.7L303.9 567.5ZM348.7 550.6L365.0 548.1L374.2 556.6L357.9 559.3ZM366.4 548.1L382.5 545.5L391.6 554.0L375.5 556.6ZM452.0 535.6L467.1 533.2L475.7 541.1L460.6 543.7ZM533.0 523.9L547.2 521.6L555.4 529.0L541.1 531.4ZM696.0 500.3L708.5 498.3L715.7 504.6L703.2 506.8ZM112.6 598.0L131.5 594.9L142.2 605.0L123.3 608.2ZM359.8 560.4L376.0 557.7L385.2 566.2L369.1 569.0ZM377.4 557.7L393.4 555.1L402.5 563.5L386.5 566.3ZM412.0 552.5L427.6 549.9L436.5 558.1L420.9 560.8ZM478.9 542.3L493.7 539.8L502.3 547.6L487.4 550.2ZM542.9 532.5L557.0 530.2L565.2 537.6L551.0 540.1ZM648.2 516.5L661.2 514.3L668.7 521.1L655.7 523.4ZM165.6 602.9L183.9 599.7L194.4 609.5L176.0 612.8ZM262.0 587.5L279.3 584.5L289.2 593.7L271.9 596.8ZM280.7 584.5L297.8 581.6L307.5 590.7L290.5 593.7ZM439.6 559.2L454.9 556.5L463.8 564.6L448.5 567.4ZM489.1 551.3L503.9 548.7L512.5 556.5L497.7 559.2ZM521.3 546.2L535.7 543.7L544.0 551.2L529.7 553.9ZM657.3 524.5L670.2 522.2L677.7 529.0L664.8 531.3ZM671.6 522.2L684.3 520.0L691.8 526.6L679.1 529.0ZM138.2 620.5L156.8 617.2L167.6 627.2L148.9 630.7ZM310.7 591.8L327.4 588.8L337.1 597.7L320.4 600.9ZM382.0 579.9L397.9 577.0L407.2 585.5L391.3 588.5ZM515.4 557.7L529.8 555.0L538.4 562.7L523.9 565.4ZM592.9 544.7L606.5 542.2L614.6 549.4L601.0 552.0ZM89.8 642.4L109.0 638.8L120.1 649.2L101.0 653.0ZM303.9 605.1L320.7 602.0L330.6 611.0L313.8 614.3ZM375.5 592.7L391.5 589.6L401.0 598.2L385.0 601.4ZM587.3 555.8L601.0 553.1L609.2 560.4L595.5 563.1ZM297.1 618.7L314.0 615.4L324.0 624.5L307.2 628.0ZM333.5 612.1L349.9 608.9L359.8 617.8L343.3 621.1ZM351.3 608.9L367.6 605.7L377.3 614.4L361.1 617.8ZM581.7 567.0L595.4 564.3L603.8 571.6L590.0 574.4ZM626.6 558.9L639.8 556.2L647.9 563.2L634.6 566.0ZM136.0 661.8L154.6 658.0L165.8 668.2L147.1 672.1ZM308.7 629.1L325.4 625.7L335.5 634.7L318.8 638.3ZM513.6 590.3L528.1 587.3L536.9 595.1L522.5 598.2ZM693.0 556.4L705.5 553.7L713.2 560.4L700.7 563.1ZM87.5 685.3L106.7 681.2L118.3 691.7L99.1 696.0ZM168.5 669.3L186.8 665.4L197.9 675.5L179.6 679.5ZM264.9 650.3L282.1 646.7L292.6 656.1L275.3 659.9ZM408.2 622.1L423.9 618.7L433.5 627.2L417.8 630.7ZM491.6 605.7L506.3 602.5L515.4 610.5L500.6 613.8ZM615.7 581.2L629.0 578.3L637.3 585.5L624.0 588.5ZM200.5 676.6L218.5 672.6L229.5 682.5L211.5 686.6ZM580.0 598.9L593.8 595.8L602.4 603.2L588.7 606.4ZM595.2 595.8L608.8 592.7L617.3 600.1L603.7 603.2ZM668.4 580.8L681.2 577.9L689.2 584.8L676.5 587.8ZM193.3 691.9L211.3 687.8L222.5 697.7L204.5 702.0ZM342.8 660.1L359.2 656.3L369.4 665.3L353.0 669.2ZM446.5 638.1L461.7 634.5L471.3 642.8L456.0 646.5ZM463.1 634.5L478.1 631.0L487.6 639.2L472.6 642.9ZM663.1 592.0L676.0 589.0L684.1 595.9L671.3 599.0ZM166.4 711.8L184.7 707.4L196.1 717.6L177.8 722.1ZM205.6 703.1L223.5 698.9L234.7 708.8L216.8 713.2ZM243.9 694.7L261.4 690.5L272.3 700.2L254.9 704.5ZM318.1 678.3L334.8 674.3L345.2 683.5L328.6 687.6ZM406.3 658.9L422.0 655.1L431.9 663.7L416.3 667.6ZM440.3 651.4L455.6 647.7L465.3 656.1L450.0 659.9ZM457.0 647.7L472.1 644.0L481.7 652.3L466.6 656.1ZM489.8 640.4L504.5 636.9L513.9 644.9L499.2 648.6ZM568.7 623.0L582.6 619.7L591.5 627.2L577.6 630.7ZM628.8 609.8L642.0 606.6L650.5 613.7L637.3 617.1ZM139.0 732.4L157.6 727.8L169.4 738.1L150.7 742.9ZM311.4 693.0L328.1 688.8L338.8 698.0L322.0 702.3ZM400.0 672.7L415.7 668.8L425.8 677.4L410.1 681.5ZM450.8 661.1L466.0 657.3L475.7 665.6L460.6 669.5ZM578.4 631.9L592.1 628.5L601.0 636.0L587.3 639.6ZM171.5 739.4L189.8 734.7L201.4 744.9L183.2 749.7ZM210.6 730.1L228.4 725.6L239.9 735.5L222.0 740.2ZM229.8 725.6L247.5 721.1L258.7 730.9L241.1 735.5ZM248.9 721.1L266.3 716.6L277.4 726.3L260.0 730.9ZM461.3 670.8L476.3 666.9L486.1 675.2L471.1 679.2ZM477.7 666.9L492.6 663.0L502.3 671.2L487.4 675.2ZM572.7 644.4L586.5 640.8L595.6 648.4L581.8 652.1ZM183.9 750.9L202.0 746.1L213.8 756.3L195.6 761.2ZM241.8 736.7L259.3 732.1L270.7 741.8L253.2 746.6ZM421.5 692.7L437.0 688.6L447.2 697.1L431.7 701.4ZM471.7 680.4L486.6 676.4L496.4 684.7L481.5 688.8ZM504.2 672.5L518.8 668.6L528.3 676.6L513.8 680.6ZM627.2 642.4L640.4 638.8L649.2 646.0L636.0 649.7ZM116.5 782.6L135.4 777.5L147.7 788.1L128.8 793.4ZM196.2 762.4L214.2 757.5L226.0 767.6L208.0 772.7ZM380.7 715.7L396.7 711.3L407.2 720.2L391.3 724.7ZM482.0 690.1L496.8 686.0L506.7 694.2L491.8 698.4ZM514.3 681.9L528.7 677.9L538.4 685.9L523.9 690.0ZM545.8 673.9L559.9 670.0L569.4 677.8L555.2 681.8ZM561.3 670.0L575.3 666.1L584.6 673.8L570.6 677.8ZM591.9 662.3L605.5 658.5L614.6 665.9L601.0 669.9ZM693.5 636.5L706.0 633.0L714.4 639.8L701.9 643.4ZM108.9 800.0L127.9 794.6L140.4 805.3L121.4 810.8ZM227.7 768.9L245.4 763.9L257.0 773.8L239.4 778.9ZM284.2 754.1L301.2 749.3L312.5 758.8L295.5 763.8ZM338.9 739.8L355.3 735.2L366.2 744.3L349.8 749.1ZM426.0 717.0L441.4 712.6L451.7 721.2L436.3 725.8ZM555.6 683.1L569.6 679.1L579.1 686.8L565.1 691.0ZM586.3 675.1L599.9 671.2L609.2 678.7L595.5 682.7ZM601.3 671.2L614.9 667.3L624.0 674.7L610.5 678.7ZM220.6 785.4L238.4 780.2L250.2 790.2L232.5 795.5ZM402.6 736.3L418.3 731.6L428.9 740.4L413.2 745.1ZM549.9 696.5L564.0 692.3L573.5 700.1L559.5 704.4ZM610.8 680.0L624.2 676.0L633.3 683.4L619.9 687.5ZM134.5 824.2L153.2 818.6L165.8 829.1L147.1 834.8ZM325.5 770.9L342.1 765.9L353.3 775.2L336.8 780.4ZM692.0 668.8L704.5 665.0L713.2 671.8L700.7 675.8ZM263.5 802.8L280.8 797.4L292.6 807.1L275.3 812.6ZM300.6 792.1L317.5 786.9L329.0 796.3L312.1 801.7ZM389.8 766.5L405.6 761.6L416.5 770.4L400.7 775.5ZM424.1 756.7L439.6 751.8L450.2 760.4L434.7 765.4ZM553.9 719.4L567.9 714.9L577.7 722.7L563.7 727.3ZM584.6 710.6L598.3 706.2L607.8 713.8L594.1 718.2ZM599.7 706.2L613.2 701.9L622.6 709.4L609.1 713.8ZM159.8 848.2L178.2 842.4L190.8 852.7L172.4 858.7ZM293.8 808.5L310.7 803.1L322.4 812.6L305.5 818.2ZM400.7 776.9L416.4 771.8L427.3 780.6L411.6 785.8ZM417.8 771.8L433.3 766.8L444.1 775.5L428.6 780.6ZM434.7 766.8L450.1 761.9L460.8 770.4L445.4 775.5ZM516.7 742.6L531.1 737.9L541.2 745.9L526.8 750.7ZM132.3 872.4L151.0 866.2L164.0 876.8L145.3 883.1ZM172.3 860.2L190.5 854.2L203.2 864.5L184.9 870.6ZM191.9 854.2L210.0 848.3L222.5 858.4L204.5 864.5ZM211.4 848.3L229.2 842.4L241.6 852.4L223.8 858.4ZM230.6 842.4L248.2 836.6L260.4 846.5L242.8 852.5ZM249.6 836.6L267.0 830.9L279.1 840.6L261.7 846.5ZM305.4 819.6L322.2 814.1L333.9 823.5L317.1 829.2ZM394.3 792.5L410.1 787.3L421.2 796.1L405.4 801.5ZM445.3 777.0L460.5 771.9L471.3 780.4L456.0 785.6ZM588.5 733.3L602.2 728.7L611.9 736.2L598.2 741.0ZM662.1 710.9L675.0 706.5L684.1 713.6L671.3 718.0ZM124.8 890.9L143.6 884.6L156.7 895.1L138.0 901.6ZM184.7 872.1L202.8 866.0L215.5 876.2L197.4 882.5ZM261.5 848.0L278.7 842.2L290.9 851.8L273.6 857.9ZM472.3 781.9L487.3 776.7L497.9 785.0L482.9 790.3ZM536.6 761.7L550.8 756.8L561.0 764.7L546.7 769.7ZM567.7 752.0L581.5 747.2L591.5 754.8L577.6 759.8ZM656.8 724.0L669.7 719.5L679.0 726.6L666.1 731.2ZM157.6 896.7L176.0 890.3L189.0 900.7L170.6 907.2ZM235.6 871.5L253.1 865.4L265.6 875.3L248.0 881.6ZM432.9 807.9L448.3 802.5L459.3 811.0L443.9 816.6ZM514.9 781.4L529.4 776.3L539.8 784.3L525.3 789.6ZM247.5 883.1L264.9 876.9L277.4 886.7L260.0 893.1ZM321.6 858.6L338.2 852.6L350.1 861.9L333.5 868.0ZM375.0 840.8L391.0 835.1L402.5 844.0L386.5 849.9ZM509.0 796.4L523.5 791.1L534.1 799.1L519.5 804.6ZM524.9 791.1L539.3 785.9L549.7 793.8L535.4 799.2ZM586.9 770.5L600.5 765.5L610.5 773.1L596.9 778.2ZM142.8 934.4L161.4 927.6L174.7 938.1L156.2 945.1ZM162.8 927.6L181.1 920.9L194.4 931.2L176.0 938.1ZM221.4 907.6L239.1 901.1L251.9 911.0L234.2 917.7ZM259.4 894.7L276.7 888.3L289.2 898.0L271.9 904.5ZM350.8 863.5L367.1 857.5L378.9 866.6L362.6 872.7ZM386.0 851.5L401.9 845.6L413.4 854.5L397.5 860.5ZM581.3 784.9L595.0 779.8L605.1 787.3L591.4 792.6ZM611.4 774.7L624.7 769.6L634.6 777.0L621.3 782.2ZM669.6 754.8L682.3 750.0L691.8 757.0L679.0 761.9ZM697.7 745.2L710.1 740.5L719.4 747.3L707.0 752.2ZM155.4 946.7L173.9 939.8L187.3 950.1L168.8 957.2ZM233.5 919.4L251.0 912.7L263.9 922.6L246.3 929.4ZM308.1 893.2L324.9 886.9L337.1 896.2L320.4 902.8ZM326.3 886.9L342.8 880.6L354.9 889.8L338.4 896.3ZM362.0 874.4L378.1 868.2L390.0 877.2L373.8 883.5ZM649.9 773.5L662.9 768.5L672.6 775.6L659.6 780.8ZM207.1 944.9L225.0 937.9L238.1 947.9L220.3 955.0ZM319.6 904.4L336.2 898.0L348.5 907.2L331.9 913.9ZM390.5 878.9L406.3 872.8L418.1 881.5L402.2 887.9ZM474.8 848.6L489.7 842.8L500.8 851.0L485.9 857.0ZM659.0 782.4L671.9 777.3L681.6 784.3L668.7 789.6ZM294.6 929.0L311.5 922.3L324.0 931.7L307.1 938.6ZM418.5 883.3L434.0 877.1L445.7 885.6L430.1 892.1ZM435.4 877.1L450.8 870.9L462.3 879.4L446.9 885.7ZM485.1 858.7L499.9 852.8L511.0 860.9L496.2 867.0ZM533.1 841.0L547.4 835.2L558.2 843.1L543.9 849.0ZM609.7 812.7L623.1 807.3L633.3 814.6L619.9 820.2ZM682.2 786.0L694.8 780.8L704.4 787.7L691.8 793.0Z" fill="#b99674"/><path d="M19.4 422.3L39.4 421.1L48.6 430.5L28.6 431.8ZM183.7 413.5L201.8 412.4L210.3 420.9L192.1 422.1ZM684.6 386.6L697.1 385.8L703.2 391.5L690.6 392.3ZM116.3 428.0L135.2 426.8L144.0 435.7L125.1 437.1ZM290.9 417.6L307.8 416.5L315.8 424.5L298.9 425.7ZM514.1 404.3L528.6 403.3L535.5 410.0L521.0 411.1ZM576.5 400.5L590.3 399.6L597.0 406.0L583.2 407.0ZM591.7 399.6L605.3 398.7L611.9 405.0L598.3 406.0ZM693.4 393.6L705.9 392.7L711.9 398.4L699.5 399.4ZM67.3 442.3L86.7 440.9L96.0 450.2L76.6 451.7ZM129.1 438.2L147.8 436.9L156.7 445.9L138.0 447.3ZM265.4 429.3L282.6 428.0L290.9 436.2L273.7 437.6ZM425.8 418.7L441.2 417.6L448.7 424.9L433.3 426.1ZM442.6 417.6L457.9 416.5L465.3 423.7L450.0 424.9ZM475.8 415.4L490.7 414.4L497.9 421.4L483.0 422.6ZM586.1 408.2L599.8 407.2L606.5 413.6L592.8 414.7ZM38.4 455.9L58.2 454.4L67.7 464.0L47.9 465.6ZM141.8 448.5L160.4 447.0L169.4 456.0L150.8 457.6ZM220.4 442.8L238.2 441.4L246.8 450.0L229.0 451.5ZM277.2 438.7L294.3 437.4L302.6 445.6L285.5 447.1ZM402.4 429.7L418.1 428.5L425.8 436.0L410.1 437.4ZM595.6 415.9L609.2 414.8L615.9 421.2L602.4 422.3ZM654.5 411.6L667.4 410.6L673.9 416.7L661.0 417.8ZM697.0 408.6L709.5 407.6L715.7 413.4L703.2 414.5ZM307.2 446.8L324.0 445.4L332.2 453.5L315.5 455.0ZM325.4 445.4L341.9 444.0L350.1 452.0L333.5 453.5ZM413.2 438.5L428.8 437.2L436.5 444.7L420.9 446.1ZM463.6 434.6L478.6 433.3L486.1 440.5L471.1 441.9ZM263.4 460.8L280.6 459.2L289.2 467.7L272.0 469.4ZM423.9 447.3L439.4 445.9L447.2 453.4L431.7 454.9ZM569.2 435.0L583.1 433.7L590.1 440.4L576.2 441.8ZM584.5 433.7L598.1 432.5L605.1 439.1L591.4 440.4ZM614.5 431.2L627.8 430.0L634.7 436.4L621.3 437.7ZM57.3 490.3L76.8 488.4L86.6 498.1L67.1 500.2ZM159.6 481.0L178.0 479.2L187.3 488.4L168.9 490.3ZM199.0 477.4L216.9 475.7L226.0 484.6L208.0 486.5ZM348.0 463.9L364.3 462.3L372.6 470.4L356.3 472.1ZM451.3 454.5L466.5 453.0L474.2 460.5L459.1 462.1ZM516.5 448.6L530.9 447.2L538.4 454.2L523.9 455.8ZM548.0 445.8L562.1 444.4L569.4 451.2L555.3 452.7ZM578.8 443.0L592.6 441.6L599.7 448.3L585.9 449.7ZM652.9 436.2L665.9 434.9L672.6 441.2L659.7 442.6ZM211.2 487.6L229.0 485.7L238.1 494.6L220.3 496.6ZM286.8 480.2L303.8 478.4L312.5 486.9L295.5 488.8ZM323.4 476.7L340.0 474.9L348.5 483.2L331.9 485.0ZM394.1 469.8L409.9 468.1L418.1 476.0L402.3 477.7ZM445.1 464.8L460.4 463.2L468.3 470.8L453.0 472.5ZM461.8 463.2L476.8 461.6L484.6 469.1L469.6 470.8ZM573.2 452.4L587.0 450.9L594.2 457.7L580.4 459.3ZM690.3 441.0L702.8 439.7L709.4 445.7L696.9 447.2ZM261.3 493.8L278.6 491.8L287.5 500.5L270.3 502.6ZM627.6 455.8L640.8 454.2L647.9 460.8L634.6 462.4ZM273.1 503.7L290.2 501.6L299.2 510.3L282.1 512.5ZM309.9 499.6L326.7 497.6L335.5 506.1L318.8 508.2ZM381.3 491.7L397.2 489.8L405.7 497.9L389.7 499.9ZM398.6 489.8L414.4 487.9L422.7 495.9L407.0 497.9ZM498.7 478.8L513.3 477.0L521.2 484.4L506.5 486.2ZM284.8 513.6L301.8 511.5L310.9 520.2L293.9 522.4ZM476.4 491.2L491.3 489.2L499.4 496.8L484.5 498.8ZM616.7 474.7L630.0 473.0L637.3 479.7L624.0 481.5ZM81.3 550.2L100.6 547.6L110.9 557.6L91.6 560.3ZM259.2 528.1L276.5 525.8L285.8 534.7L268.6 537.2ZM420.2 508.2L435.7 506.1L444.1 514.0L428.6 516.2ZM550.3 492.0L564.4 490.1L572.1 497.3L558.1 499.3ZM640.6 480.8L653.7 479.1L660.9 485.6L647.9 487.5ZM669.4 477.3L682.2 475.5L689.2 481.9L676.5 483.8ZM307.9 533.4L324.7 531.0L333.9 539.7L317.1 542.2ZM361.8 526.4L377.9 524.1L386.8 532.4L370.7 534.9ZM379.3 524.1L395.3 521.8L404.1 530.1L388.1 532.4ZM430.9 517.3L446.3 515.1L454.7 523.1L439.4 525.4ZM464.3 513.0L479.3 510.8L487.6 518.5L472.6 520.8ZM575.5 498.4L589.3 496.4L596.9 503.5L583.2 505.6ZM620.5 492.5L633.8 490.6L641.3 497.4L628.0 499.4ZM86.7 575.4L105.9 572.6L116.4 582.7L97.2 585.7ZM107.3 572.6L126.3 569.8L136.7 579.7L117.7 582.7ZM167.7 564.2L186.0 561.5L196.1 571.1L177.8 574.0ZM245.3 553.5L262.7 550.9L272.4 560.1L254.9 562.8ZM390.3 533.5L406.1 531.2L415.0 539.4L399.1 541.9ZM424.6 528.8L440.1 526.5L448.7 534.5L433.2 537.0ZM523.0 515.3L537.4 513.1L545.5 520.5L531.1 522.8ZM585.1 506.7L598.7 504.6L606.5 511.6L592.8 513.8ZM658.8 496.5L671.7 494.6L679.0 501.1L666.2 503.2ZM79.0 589.7L98.3 586.7L109.0 596.9L89.7 600.1ZM140.4 580.8L159.0 577.9L169.4 587.8L150.8 590.8ZM312.7 555.8L329.4 553.2L338.8 562.0L322.1 564.7ZM383.9 545.5L399.8 543.0L408.8 551.3L392.9 554.0ZM418.3 540.5L433.8 538.1L442.6 546.2L427.1 548.8ZM468.5 533.2L483.5 530.9L492.0 538.7L477.0 541.2ZM548.6 521.6L562.7 519.4L570.8 526.7L556.7 529.1ZM564.1 519.4L578.0 517.2L586.0 524.4L572.1 526.7ZM594.6 515.0L608.2 512.8L615.9 519.8L602.4 522.1ZM324.1 565.8L340.7 563.1L350.1 571.8L333.5 574.7ZM394.8 555.1L410.6 552.5L419.6 560.8L403.8 563.5ZM511.2 537.4L525.7 534.9L534.1 542.5L519.6 545.1ZM618.9 521.0L632.2 518.7L640.0 525.7L626.6 528.0ZM125.4 609.3L144.2 606.1L154.9 616.1L136.2 619.5ZM204.8 596.6L222.7 593.6L232.9 603.1L215.0 606.3ZM299.2 581.6L316.0 578.7L325.7 587.6L308.8 590.7ZM353.3 573.0L369.5 570.1L378.9 578.8L362.7 581.7ZM370.9 570.1L387.0 567.4L396.3 575.9L380.2 578.8ZM388.4 567.4L404.3 564.6L413.4 573.0L397.6 575.9ZM422.7 561.9L438.2 559.2L447.2 567.4L431.7 570.2ZM472.8 553.9L487.7 551.3L496.4 559.2L481.5 561.9ZM505.3 548.7L519.9 546.2L528.3 553.9L513.8 556.5ZM552.7 541.2L566.7 538.7L574.9 546.1L560.9 548.7ZM613.4 531.5L626.8 529.1L634.7 536.1L621.3 538.6ZM97.4 627.3L116.5 623.9L127.5 634.2L108.4 637.8ZM255.1 601.0L272.4 597.9L282.5 607.2L265.1 610.5ZM273.8 597.9L290.9 594.8L300.9 604.0L283.8 607.2ZM466.7 565.8L481.7 563.0L490.5 571.0L475.5 573.8ZM531.2 555.0L545.5 552.4L553.9 559.9L539.7 562.7ZM410.1 586.6L425.7 583.7L435.0 592.0L419.4 595.1ZM617.3 550.6L630.6 548.0L638.6 555.0L625.3 557.7ZM241.1 628.9L258.6 625.5L269.0 634.9L251.5 638.5ZM278.7 622.1L295.7 618.7L305.9 628.0L288.8 631.5ZM503.5 581.2L518.1 578.3L526.9 586.1L512.3 589.2ZM641.2 556.2L654.3 553.6L662.2 560.5L649.2 563.3ZM655.7 553.6L668.6 551.0L676.5 557.8L663.5 560.5ZM74.4 673.4L93.8 669.5L105.3 680.1L86.0 684.2ZM234.0 643.2L251.6 639.6L262.2 649.2L244.6 652.9ZM362.5 618.9L378.6 615.6L388.4 624.3L372.3 627.8ZM414.6 609.1L430.1 605.8L439.6 614.3L424.0 617.6ZM529.5 587.3L543.8 584.3L552.5 592.0L538.2 595.1ZM591.3 575.6L604.9 572.8L613.2 580.0L599.6 583.0ZM664.7 561.7L677.5 559.0L685.4 565.8L672.6 568.6ZM227.0 657.8L244.6 654.0L255.3 663.7L237.7 667.6ZM246.0 654.0L263.5 650.3L274.0 659.9L256.6 663.7ZM338.1 635.9L354.6 632.4L364.6 641.3L348.2 645.0ZM391.0 625.5L406.8 622.1L416.5 630.7L400.7 634.2ZM585.7 587.2L599.3 584.2L607.8 591.5L594.1 594.6ZM645.0 575.5L658.0 572.6L666.1 579.6L653.1 582.5ZM673.7 569.8L686.4 567.0L694.3 573.8L681.6 576.7ZM79.9 701.3L99.1 697.1L110.9 707.7L91.6 712.1ZM121.0 692.9L139.8 688.7L151.3 699.1L132.5 703.4ZM141.2 688.7L159.8 684.7L171.2 694.9L152.6 699.1ZM276.6 661.0L293.7 657.2L304.2 666.6L287.1 670.5ZM295.1 657.2L312.0 653.5L322.4 662.7L305.5 666.6ZM313.4 653.5L330.1 649.8L340.4 658.9L323.7 662.8ZM419.0 631.9L434.5 628.4L444.1 636.9L428.6 640.5ZM452.7 625.0L467.8 621.6L477.2 629.8L462.1 633.3ZM485.6 618.2L500.4 614.9L509.6 623.0L494.8 626.4ZM549.3 605.2L563.3 602.0L572.1 609.6L558.1 612.9ZM610.2 592.7L623.6 589.7L632.0 596.9L618.6 600.1ZM654.1 583.7L667.0 580.8L675.2 587.7L662.2 590.8ZM682.6 577.9L695.2 575.0L703.2 581.8L690.5 584.8ZM378.1 652.6L394.1 648.9L404.1 657.6L388.1 661.5ZM511.9 624.2L526.4 620.8L535.5 628.7L521.0 632.2ZM527.8 620.8L542.1 617.4L551.1 625.2L536.8 628.7ZM543.5 617.4L557.6 614.1L566.6 621.8L552.4 625.2ZM559.0 614.1L573.0 610.9L581.8 618.4L567.9 621.8ZM619.5 601.3L632.8 598.1L641.3 605.3L628.0 608.6ZM677.4 589.0L690.0 586.0L698.1 592.8L685.4 595.9ZM354.0 670.4L370.2 666.5L380.5 675.4L364.3 679.5ZM505.9 636.9L520.5 633.4L529.8 641.3L515.2 645.0ZM553.3 626.4L567.3 623.0L576.3 630.7L562.3 634.2ZM584.0 619.7L597.7 616.3L606.5 623.8L592.8 627.2ZM599.1 616.3L612.6 613.1L621.3 620.4L607.8 623.8ZM178.8 723.3L197.0 718.8L208.5 728.9L190.3 733.5ZM198.4 718.8L216.3 714.4L227.7 724.3L209.8 728.9ZM255.8 705.7L273.2 701.4L284.2 711.0L266.8 715.4ZM293.1 697.1L310.0 693.0L320.8 702.3L303.8 706.6ZM434.1 664.9L449.4 661.1L459.3 669.5L443.9 673.5ZM547.5 639.0L561.6 635.4L570.7 643.1L556.6 646.8ZM557.3 648.0L571.3 644.4L580.5 652.1L566.5 655.8ZM603.0 637.2L616.5 633.7L625.3 641.1L611.8 644.7ZM124.0 765.6L142.8 760.6L154.9 771.1L136.1 776.3ZM222.7 741.4L240.4 736.7L251.9 746.6L234.2 751.4ZM334.2 714.1L350.7 709.7L361.4 718.9L344.9 723.4ZM369.7 705.4L385.8 701.1L396.3 710.0L380.2 714.5ZM387.2 701.1L403.1 696.9L413.4 705.7L397.6 710.1ZM582.3 653.3L596.0 649.6L605.1 657.2L591.4 661.0ZM96.0 787.8L115.1 782.6L127.5 793.3L108.4 798.7ZM176.6 767.4L194.8 762.4L206.7 772.6L188.5 777.8ZM272.5 743.1L289.7 738.4L300.9 748.0L283.8 752.8ZM327.5 729.2L344.1 724.7L354.9 733.9L338.4 738.5ZM415.2 707.0L430.8 702.7L441.1 711.3L425.5 715.8ZM530.1 677.9L544.4 673.9L553.9 681.8L539.6 685.9ZM606.9 658.5L620.3 654.7L629.3 662.1L615.9 666.0ZM621.7 654.7L635.0 651.0L643.9 658.3L630.6 662.1ZM492.2 699.7L506.9 695.5L516.8 703.6L502.1 708.0ZM571.0 679.1L584.9 675.1L594.2 682.7L580.4 686.8ZM688.3 648.4L700.9 644.8L709.4 651.6L696.9 655.4ZM162.0 801.2L180.4 795.9L192.6 806.2L174.2 811.7ZM181.8 795.9L199.9 790.6L212.0 800.8L193.8 806.2ZM295.8 765.1L312.7 760.1L324.0 769.6L307.2 774.7ZM332.2 755.3L348.7 750.4L359.8 759.6L343.3 764.6ZM436.6 727.1L451.9 722.6L462.3 731.1L446.9 735.7ZM453.3 722.6L468.5 718.1L478.7 726.5L463.6 731.1ZM565.4 692.3L579.3 688.2L588.7 695.8L574.8 700.1ZM625.6 676.0L638.8 672.1L647.9 679.4L634.6 683.4ZM640.2 672.1L653.3 668.2L662.2 675.3L649.2 679.4ZM307.4 776.0L324.1 770.9L335.5 780.3L318.7 785.5ZM396.2 751.3L412.0 746.5L422.7 755.3L406.9 760.2ZM413.4 746.5L429.0 741.7L439.6 750.4L424.0 755.3ZM430.4 741.7L445.8 737.1L456.3 745.6L440.9 750.5ZM447.2 737.1L462.4 732.4L472.7 740.9L457.5 745.7ZM496.4 723.3L511.1 718.9L521.1 727.0L506.5 731.6ZM559.6 705.7L573.6 701.4L583.2 709.2L569.3 713.6ZM575.0 701.4L588.8 697.2L598.3 704.8L584.5 709.2ZM590.2 697.2L603.8 693.0L613.2 700.5L599.6 704.9ZM206.3 819.2L224.2 813.7L236.4 823.7L218.5 829.4ZM354.7 776.6L370.9 771.5L382.1 780.6L365.8 785.8ZM441.0 751.8L456.2 747.0L466.8 755.5L451.5 760.5ZM457.6 747.0L472.7 742.3L483.1 750.7L468.1 755.6ZM490.4 737.6L505.2 733.0L515.4 741.1L500.6 745.9ZM139.8 854.1L158.4 848.2L171.2 858.7L152.5 864.8ZM237.7 825.2L255.2 819.6L267.3 829.4L249.7 835.2ZM594.1 719.6L607.7 715.2L617.3 722.7L603.7 727.3ZM609.1 715.2L622.5 710.8L632.0 718.2L618.6 722.7ZM623.9 710.8L637.2 706.5L646.5 713.8L633.3 718.3ZM653.1 702.2L666.0 698.0L675.2 705.1L662.2 709.4ZM667.4 698.0L680.2 693.8L689.2 700.8L676.5 705.1ZM681.6 693.8L694.2 689.6L703.2 696.5L690.5 700.8ZM112.0 878.6L130.9 872.4L144.0 883.0L125.1 889.4ZM268.4 830.9L285.6 825.2L297.6 834.9L280.4 840.7ZM323.6 814.1L340.1 808.6L351.7 817.9L335.1 823.5ZM376.9 797.8L392.9 792.5L404.1 801.4L388.1 806.9ZM618.5 724.2L631.8 719.7L641.3 727.0L628.0 731.6ZM647.7 715.3L660.7 710.9L670.0 718.0L657.0 722.5ZM223.5 859.9L241.2 853.9L253.6 863.9L235.9 870.0ZM316.9 830.6L333.5 825.0L345.2 834.3L328.6 840.1ZM455.8 787.0L470.9 781.9L481.7 790.3L466.6 795.6ZM504.8 771.7L519.4 766.7L529.8 774.8L515.2 779.9ZM520.8 766.7L535.2 761.7L545.5 769.7L531.1 774.8ZM582.9 747.2L596.6 742.4L606.5 750.0L592.8 754.9ZM685.3 715.1L697.8 710.7L706.9 717.6L694.3 722.1ZM137.6 903.2L156.2 896.7L169.4 907.2L150.7 913.8ZM197.0 884.0L215.0 877.7L227.7 887.8L209.7 894.3ZM562.0 766.2L575.9 761.3L586.0 769.0L572.0 774.1ZM592.5 756.4L606.1 751.5L615.9 759.0L602.3 764.0ZM622.3 746.7L635.6 742.0L645.2 749.3L632.0 754.2ZM665.9 732.7L678.6 728.1L688.0 735.1L675.2 739.8ZM130.1 922.1L148.8 915.4L162.2 926.0L143.4 932.8ZM209.3 895.8L227.1 889.4L239.9 899.5L222.0 906.0ZM476.6 807.1L491.5 801.7L502.3 810.0L487.4 815.5ZM674.8 741.4L687.5 736.7L696.8 743.6L684.2 748.5ZM182.5 920.9L200.7 914.2L213.8 924.4L195.6 931.2ZM202.1 914.2L220.0 907.6L232.9 917.7L215.0 924.5ZM368.5 857.5L384.6 851.5L396.3 860.5L380.2 866.6ZM437.3 834.0L452.6 828.3L463.8 836.8L448.5 842.7ZM271.2 906.2L288.4 899.7L300.9 909.3L283.7 915.9ZM464.4 838.5L479.4 832.8L490.5 841.1L475.5 847.0ZM575.6 799.6L589.4 794.2L599.7 801.8L585.9 807.3ZM620.7 783.8L634.0 778.6L643.9 785.9L630.6 791.2ZM127.9 973.4L146.6 966.1L160.3 976.6L141.6 984.1ZM491.1 842.8L505.8 837.0L516.8 845.1L502.1 851.1ZM523.2 831.2L537.5 825.6L548.3 833.5L533.9 839.3ZM140.6 985.8L159.2 978.5L173.0 988.9L154.3 996.4ZM468.7 864.8L483.7 858.7L494.9 867.0L480.0 873.2ZM564.3 829.5L578.2 823.9L588.7 831.5L574.8 837.3ZM594.7 818.3L608.3 812.7L618.6 820.2L605.0 825.9ZM624.5 807.3L637.8 801.9L647.9 809.1L634.6 814.7ZM653.7 796.5L666.6 791.2L676.4 798.3L663.5 803.7ZM696.2 780.8L708.6 775.7L718.2 782.5L705.7 787.8Z" fill="#c28e72"/><path d="M61.9 420.0L81.4 418.9L90.3 428.1L70.9 429.3ZM315.9 406.4L332.6 405.4L340.4 413.1L323.7 414.2ZM334.0 405.4L350.5 404.4L358.2 412.1L341.7 413.1ZM421.4 400.7L436.9 399.8L444.1 407.0L428.7 408.0ZM597.3 391.3L610.8 390.5L617.3 396.6L603.7 397.5ZM698.5 385.8L711.0 385.1L716.9 390.7L704.5 391.5ZM448.8 408.2L464.0 407.2L471.3 414.3L456.1 415.3ZM498.1 405.2L512.7 404.3L519.7 411.1L505.1 412.1ZM530.0 403.3L544.3 402.4L551.1 409.0L536.8 410.0ZM561.2 401.5L575.1 400.5L581.8 407.0L567.9 408.0ZM46.3 443.7L65.9 442.3L75.3 451.7L55.6 453.2ZM108.7 439.6L127.7 438.2L136.7 447.3L117.8 448.8ZM227.5 431.8L245.2 430.5L253.6 438.9L236.0 440.3ZM302.5 426.8L319.3 425.6L327.3 433.6L310.5 434.9ZM320.7 425.6L337.3 424.5L345.3 432.3L328.6 433.6ZM508.2 413.3L522.7 412.3L529.8 419.1L515.2 420.2ZM539.9 411.2L554.1 410.2L561.0 416.9L546.8 418.0ZM601.2 407.2L614.7 406.2L621.3 412.5L607.8 413.6ZM121.6 449.9L140.4 448.5L149.5 457.6L130.7 459.2ZM181.6 445.6L199.7 444.2L208.5 453.0L190.3 454.5ZM258.5 440.1L275.8 438.7L284.2 447.1L266.9 448.5ZM349.9 433.5L366.2 432.2L374.2 440.0L357.9 441.4ZM469.7 424.9L484.7 423.7L492.0 430.9L477.1 432.1ZM486.1 423.7L500.8 422.6L508.1 429.6L493.3 430.9ZM502.2 422.6L516.8 421.4L524.0 428.4L509.4 429.6ZM549.7 419.2L563.8 418.1L570.8 424.7L556.7 425.9ZM565.2 418.1L579.1 417.0L586.0 423.5L572.1 424.7ZM625.4 413.7L638.7 412.7L645.2 418.9L632.0 420.0ZM683.0 409.6L695.6 408.6L701.9 414.5L689.3 415.6ZM51.8 466.7L71.4 465.1L80.9 474.7L61.3 476.5ZM251.5 451.1L268.9 449.7L277.4 458.1L260.1 459.7ZM378.6 441.2L394.6 439.8L402.5 447.6L386.6 449.0ZM605.1 423.5L618.6 422.4L625.3 428.8L611.9 430.0ZM649.2 420.1L662.2 419.0L668.7 425.1L655.7 426.3ZM663.6 419.0L676.4 417.9L682.9 423.9L670.0 425.1ZM677.8 417.9L690.4 416.8L696.9 422.7L684.2 423.9ZM691.8 416.8L704.4 415.7L710.7 421.6L698.2 422.8ZM65.0 477.5L84.5 475.8L94.1 485.4L74.7 487.3ZM106.5 474.0L125.5 472.3L134.9 481.7L115.9 483.6ZM206.2 465.6L224.0 464.0L232.9 472.8L215.1 474.6ZM522.4 439.0L536.8 437.6L544.0 444.6L529.7 446.0ZM629.2 430.0L642.4 428.7L649.2 435.1L636.0 436.4ZM672.5 426.3L685.3 425.1L691.8 431.2L679.1 432.5ZM686.7 425.1L699.2 423.9L705.7 429.9L693.1 431.2ZM700.6 423.9L713.0 422.8L719.4 428.7L707.0 429.9ZM36.1 492.2L55.9 490.3L65.8 500.2L46.0 502.2ZM218.3 475.7L236.1 473.9L245.0 482.7L227.3 484.6ZM91.3 499.2L110.4 497.2L120.2 506.9L101.0 509.0ZM191.7 489.5L209.8 487.6L219.0 496.6L201.0 498.6ZM305.2 478.4L322.0 476.7L330.6 485.0L313.8 486.9ZM411.3 468.1L426.9 466.5L435.0 474.2L419.4 476.0ZM542.2 455.4L556.4 453.9L563.8 460.8L549.6 462.5ZM603.4 449.4L616.9 448.0L624.0 454.6L610.5 456.1ZM662.0 443.8L674.8 442.4L681.6 448.6L668.8 450.1ZM124.6 508.0L143.4 505.9L153.1 515.4L134.3 517.6ZM184.5 501.7L202.6 499.7L212.0 508.9L193.9 511.0ZM223.3 497.7L241.0 495.7L250.2 504.7L232.5 506.8ZM316.7 488.0L333.3 486.2L342.0 494.5L325.4 496.5ZM334.7 486.2L351.2 484.3L359.8 492.6L343.3 494.5ZM352.6 484.3L368.8 482.5L377.3 490.6L361.1 492.6ZM520.6 466.9L535.0 465.2L542.6 472.4L528.2 474.1ZM597.9 458.8L611.4 457.3L618.6 464.0L605.1 465.6ZM196.8 512.1L214.8 510.0L224.2 519.1L206.3 521.4ZM432.7 486.1L448.1 484.2L456.3 492.0L440.9 493.9ZM514.7 477.0L529.2 475.3L536.9 482.5L522.5 484.4ZM577.2 470.1L590.9 468.4L598.3 475.3L584.5 477.1ZM693.9 457.2L706.4 455.7L713.2 461.9L700.7 463.5ZM169.9 527.1L188.2 524.8L197.9 534.2L179.6 536.6ZM374.8 503.1L390.8 501.0L399.4 509.2L383.4 511.3ZM540.5 483.7L554.7 481.8L562.4 489.0L548.2 490.9ZM601.8 476.5L615.3 474.7L622.7 481.5L609.1 483.3ZM102.0 547.6L121.0 545.1L131.2 555.0L112.2 557.6ZM162.6 540.1L180.9 537.7L190.8 547.2L172.5 549.8ZM314.7 521.3L331.4 519.0L340.4 527.6L323.7 530.0ZM350.6 516.8L366.9 514.6L375.7 523.0L359.5 525.3ZM385.8 512.4L401.7 510.3L410.3 518.4L394.4 520.7ZM403.1 510.3L418.8 508.2L427.3 516.2L411.6 518.5ZM486.7 499.9L501.5 497.9L509.6 505.5L494.8 507.6ZM697.6 473.8L710.0 472.1L716.9 478.3L704.5 480.1ZM114.9 558.7L133.8 556.0L144.0 565.9L125.1 568.7ZM135.2 556.0L153.8 553.4L164.0 563.2L145.3 565.9ZM252.3 540.7L269.6 538.3L279.1 547.3L261.7 549.9ZM289.6 535.8L306.5 533.4L315.8 542.2L298.9 544.8ZM326.1 531.0L342.6 528.7L351.7 537.3L335.2 539.7ZM496.9 508.7L511.6 506.6L519.7 514.1L505.0 516.3ZM513.0 506.6L527.5 504.5L535.5 511.9L521.0 514.1ZM560.1 500.4L574.1 498.4L581.8 505.5L567.9 507.7ZM206.9 558.8L224.8 556.2L234.7 565.5L216.8 568.3ZM264.1 550.9L281.3 548.4L290.9 557.4L273.6 560.1ZM355.2 538.4L371.5 535.9L380.5 544.4L364.3 547.0ZM490.9 519.7L505.7 517.4L513.9 525.1L499.2 527.4ZM687.2 492.6L699.8 490.7L706.9 497.1L694.4 499.1ZM120.2 583.7L139.0 580.8L149.5 590.8L130.6 593.9ZM484.9 530.9L499.7 528.5L508.1 536.2L493.3 538.7ZM92.1 601.1L111.2 598.0L122.0 608.2L102.9 611.5ZM132.9 594.9L151.6 591.8L162.2 601.8L143.5 605.0ZM212.0 582.9L229.8 580.0L239.9 589.4L222.0 592.5ZM250.2 577.1L267.6 574.2L277.4 583.4L260.0 586.4ZM287.5 571.4L304.5 568.6L314.2 577.6L297.2 580.5ZM495.1 539.8L509.8 537.4L518.3 545.0L503.6 547.6ZM633.6 518.7L646.8 516.5L654.4 523.3L641.3 525.7ZM63.6 619.1L83.0 615.8L94.1 626.3L74.6 629.7ZM243.2 590.5L260.6 587.5L270.7 596.8L253.2 600.0ZM317.4 578.7L334.0 575.8L343.6 584.7L327.0 587.7ZM568.1 538.7L582.0 536.3L590.1 543.6L576.2 546.1ZM598.5 533.9L612.0 531.5L620.0 538.6L606.4 541.1ZM158.2 617.2L176.6 613.9L187.3 623.8L168.8 627.2ZM217.0 607.4L234.7 604.2L245.0 613.7L227.3 617.1ZM450.2 568.5L465.3 565.8L474.2 573.8L459.1 576.7ZM499.3 560.3L514.0 557.7L522.6 565.4L508.0 568.2ZM666.3 532.5L679.1 530.1L686.7 536.8L673.9 539.3ZM444.0 580.7L459.2 577.8L468.3 586.0L453.0 589.0ZM460.6 577.8L475.7 575.0L484.6 583.0L469.6 586.0ZM602.4 553.1L615.9 550.6L624.0 557.7L610.5 560.4ZM646.6 545.5L659.6 542.9L667.4 549.8L654.4 552.4ZM222.0 632.4L239.7 628.9L250.2 638.5L232.5 642.1ZM403.8 599.4L419.5 596.2L428.9 604.7L413.2 607.9ZM420.9 596.2L436.4 593.2L445.7 601.5L430.2 604.7ZM437.8 593.2L453.1 590.1L462.3 598.4L447.0 601.5ZM471.0 587.1L486.0 584.2L495.0 592.2L480.0 595.3ZM175.8 654.2L194.1 650.5L205.0 660.5L186.8 664.3ZM214.9 646.9L232.6 643.2L243.3 652.9L225.5 656.7ZM344.8 622.3L361.1 618.9L371.0 627.8L354.6 631.3ZM431.5 605.8L446.9 602.7L456.3 611.0L440.9 614.3ZM448.3 602.7L463.5 599.5L472.7 607.7L457.6 611.0ZM464.9 599.5L479.9 596.4L489.1 604.5L474.0 607.7ZM560.7 581.4L574.7 578.5L583.2 586.0L569.3 589.0ZM606.3 572.8L619.7 570.0L628.0 577.1L614.5 580.1ZM650.3 564.4L663.3 561.7L671.3 568.6L658.3 571.4ZM678.9 559.0L691.6 556.4L699.4 563.1L686.7 565.8ZM425.3 618.7L440.7 615.4L450.2 623.8L434.8 627.2ZM442.1 615.4L457.4 612.1L466.8 620.4L451.5 623.8ZM458.8 612.1L473.9 608.9L483.2 617.1L468.1 620.4ZM523.6 599.4L538.0 596.3L546.9 604.0L532.5 607.2ZM555.0 593.2L569.0 590.2L577.7 597.7L563.7 600.9ZM570.4 590.2L584.3 587.2L592.8 594.6L579.0 597.7ZM630.4 578.3L643.6 575.5L651.8 582.5L638.6 585.5ZM659.4 572.6L672.3 569.8L680.3 576.7L667.4 579.6ZM161.2 684.7L179.6 680.6L190.8 690.7L172.4 694.9ZM349.4 646.1L365.7 642.5L375.7 651.4L359.4 655.2ZM367.1 642.5L383.2 638.9L393.1 647.7L377.0 651.4ZM435.9 628.4L451.3 625.0L460.8 633.3L445.4 636.9ZM625.0 589.7L638.2 586.7L646.5 593.8L633.3 596.9ZM696.6 575.0L709.0 572.2L716.9 578.9L704.5 581.8ZM133.7 704.5L152.4 700.3L164.0 710.6L145.3 715.0ZM288.3 671.7L305.3 667.8L315.8 677.1L298.8 681.2ZM306.7 667.8L323.4 663.9L333.9 673.1L317.1 677.1ZM395.5 648.9L411.3 645.2L421.2 653.9L405.4 657.7ZM479.5 631.0L494.4 627.6L503.7 635.7L488.9 639.3ZM495.8 627.6L510.5 624.2L519.7 632.1L505.0 635.7ZM634.2 598.1L647.4 595.1L655.7 602.1L642.6 605.4ZM691.4 586.0L703.9 583.0L711.9 589.8L699.4 592.8ZM126.3 720.6L145.0 716.2L156.7 726.6L138.0 731.2ZM281.4 686.4L298.5 682.3L309.2 691.7L292.2 696.0ZM336.2 674.3L352.6 670.4L363.0 679.4L346.5 683.5ZM371.6 666.5L387.7 662.7L397.8 671.5L381.8 675.5ZM389.1 662.7L404.9 658.9L415.0 667.6L399.1 671.5ZM672.1 600.2L684.8 597.1L693.0 604.0L680.3 607.2ZM686.2 597.1L698.8 594.0L706.9 600.8L694.4 604.0ZM700.2 594.0L712.6 591.0L720.6 597.7L708.2 600.8ZM159.0 727.8L177.4 723.3L189.0 733.5L170.6 738.2ZM236.9 710.0L254.4 705.7L265.6 715.4L248.0 719.9ZM467.4 657.3L482.4 653.5L492.0 661.8L477.0 665.7ZM483.8 653.5L498.6 649.8L508.1 658.0L493.3 661.8ZM516.0 646.2L530.5 642.6L539.8 650.5L525.3 654.2ZM531.9 642.6L546.1 639.0L555.3 646.8L541.1 650.5ZM608.5 625.0L622.0 621.6L630.7 629.0L617.2 632.5ZM638.0 618.3L651.1 615.0L659.6 622.1L646.5 625.5ZM666.9 611.7L679.6 608.5L688.0 615.4L675.2 618.7ZM90.6 758.5L109.8 753.6L122.0 764.3L102.8 769.4ZM131.5 748.8L150.2 744.1L162.2 754.5L143.5 759.4ZM151.6 744.1L170.1 739.4L181.9 749.7L163.4 754.5ZM376.2 690.9L392.2 686.8L402.5 695.6L386.5 699.9ZM647.2 626.8L660.2 623.4L668.7 630.4L655.7 634.0ZM203.4 746.1L221.3 741.4L232.9 751.4L215.0 756.3ZM352.1 709.7L368.3 705.4L378.9 714.4L362.7 718.9ZM438.4 688.6L453.7 684.5L463.8 692.9L448.5 697.2ZM536.0 664.7L550.2 660.9L559.6 668.7L545.3 672.6ZM641.8 638.8L654.9 635.2L663.5 642.4L650.5 646.0ZM684.7 628.3L697.3 624.8L705.7 631.7L693.1 635.2ZM156.8 772.4L175.2 767.4L187.3 777.7L168.8 782.9ZM215.6 757.5L233.4 752.7L245.0 762.6L227.3 767.6ZM309.4 733.8L326.1 729.2L337.1 738.5L320.4 743.3ZM363.2 720.2L379.3 715.7L390.0 724.7L373.8 729.3ZM498.2 686.0L512.9 681.9L522.6 690.0L507.9 694.2ZM576.7 666.1L590.5 662.3L599.7 669.8L585.9 673.8ZM665.3 643.7L678.1 640.1L686.7 647.1L673.9 650.8ZM129.3 794.6L148.0 789.4L160.3 799.9L141.6 805.3ZM149.4 789.4L167.9 784.2L180.1 794.6L161.6 799.9ZM246.8 763.9L264.2 759.0L275.7 768.7L258.3 773.8ZM356.7 735.2L372.9 730.6L383.7 739.6L367.5 744.3ZM442.8 712.6L458.1 708.3L468.3 716.7L453.0 721.2ZM459.5 708.3L474.5 704.0L484.6 712.3L469.6 716.8ZM660.0 655.8L672.8 652.1L681.6 659.1L668.7 663.0ZM142.0 806.6L160.6 801.2L173.0 811.7L154.4 817.2ZM201.3 790.6L219.2 785.4L231.2 795.4L213.3 800.8ZM350.1 750.4L366.4 745.7L377.3 754.7L361.0 759.7ZM419.7 731.6L435.2 727.1L445.7 735.7L430.1 740.4ZM469.9 718.1L484.8 713.7L494.9 722.0L480.0 726.5ZM534.2 700.7L548.5 696.5L558.2 704.3L543.9 708.7ZM595.8 684.1L609.4 680.0L618.6 687.5L605.1 691.7ZM669.0 664.3L681.7 660.5L690.5 667.5L677.8 671.4ZM114.3 829.8L133.1 824.2L145.8 834.8L126.9 840.6ZM174.5 813.0L192.7 807.6L205.0 817.8L186.7 823.5ZM213.5 802.2L231.3 796.8L243.3 806.8L225.5 812.3ZM251.7 791.5L269.1 786.3L280.8 796.0L263.4 801.4ZM127.1 842.0L145.8 836.2L158.5 846.8L139.8 852.7ZM167.1 830.5L185.5 824.8L197.9 835.1L179.6 841.0ZM186.9 824.8L204.9 819.2L217.3 829.4L199.2 835.2ZM225.6 813.7L243.3 808.2L255.3 818.1L237.7 823.8ZM244.7 808.2L262.1 802.8L274.0 812.6L256.6 818.2ZM282.2 797.4L299.2 792.1L310.9 801.7L293.8 807.1ZM474.1 742.3L489.0 737.6L499.3 745.9L484.4 750.7ZM569.3 714.9L583.2 710.6L592.8 718.2L579.0 722.7ZM614.6 701.9L628.0 697.7L637.3 705.1L623.9 709.4ZM672.7 685.3L685.4 681.2L694.3 688.2L681.6 692.4ZM179.6 842.4L197.8 836.6L210.2 846.8L192.1 852.7ZM330.2 797.8L346.7 792.5L358.2 801.7L341.7 807.2ZM348.1 792.5L364.4 787.2L375.7 796.3L359.4 801.7ZM383.4 782.0L399.3 776.9L410.3 785.8L394.4 791.1ZM451.5 761.9L466.7 757.0L477.2 765.4L462.1 770.5ZM468.1 757.0L483.0 752.1L493.5 760.4L478.5 765.4ZM152.4 866.2L170.9 860.2L183.7 870.6L165.2 876.8ZM359.3 803.2L375.5 797.8L386.8 806.9L370.6 812.4ZM510.7 757.0L525.3 752.2L535.5 760.2L521.0 765.2ZM573.3 737.9L587.1 733.3L596.9 740.9L583.1 745.7ZM603.6 728.7L617.1 724.2L626.7 731.6L613.2 736.3ZM280.1 842.2L297.2 836.4L309.2 845.9L292.1 851.9ZM699.2 710.7L711.7 706.3L720.6 713.2L708.2 717.6ZM273.3 859.4L290.4 853.4L302.6 863.0L285.4 869.2ZM310.1 847.5L326.9 841.6L338.8 851.0L322.0 857.0ZM346.2 835.9L362.5 830.1L374.1 839.3L357.8 845.1ZM381.4 824.5L397.4 818.9L408.8 827.8L392.8 833.5ZM530.8 776.3L545.0 771.2L555.3 779.1L541.1 784.3ZM577.3 761.3L591.1 756.4L601.0 764.0L587.3 769.0ZM637.0 742.0L650.1 737.3L659.6 744.5L646.5 749.4ZM150.2 915.4L168.7 908.8L181.9 919.2L163.4 926.0ZM170.1 908.8L188.4 902.3L201.4 912.6L183.2 919.3ZM266.3 876.9L283.6 870.7L295.9 880.4L278.7 886.7ZM303.4 864.6L320.2 858.6L332.2 868.0L315.4 874.2ZM357.4 846.7L373.6 840.8L385.2 849.9L369.0 855.9ZM392.4 835.1L408.2 829.4L419.6 838.2L403.8 844.0ZM443.5 818.1L458.7 812.6L469.8 821.1L454.5 826.8ZM492.9 801.7L507.6 796.4L518.3 804.5L503.6 810.0ZM616.8 760.6L630.2 755.7L639.9 763.0L626.6 768.1ZM314.9 875.8L331.5 869.6L343.6 878.9L327.0 885.2ZM332.9 869.6L349.4 863.5L361.4 872.7L344.9 879.0ZM420.4 839.8L435.9 834.0L447.2 842.7L431.7 848.6ZM503.0 811.6L517.6 806.1L528.3 814.2L513.7 819.8ZM640.8 764.6L653.9 759.7L663.5 766.9L650.5 772.0ZM683.7 750.0L696.3 745.2L705.7 752.1L693.1 757.0ZM194.9 932.9L212.9 926.1L226.0 936.2L208.0 943.2ZM252.4 912.7L269.8 906.2L282.5 915.9L265.1 922.6ZM497.1 827.1L511.7 821.4L522.6 829.5L507.9 835.3ZM529.0 815.9L543.3 810.4L553.9 818.3L539.6 823.9ZM605.8 789.0L619.3 783.8L629.3 791.2L615.9 796.5ZM664.3 768.5L677.1 763.5L686.7 770.5L673.9 775.7ZM678.5 763.5L691.1 758.6L700.6 765.5L688.0 770.6ZM148.0 966.1L166.5 959.0L180.1 969.3L161.6 976.7ZM187.6 951.9L205.7 944.9L219.0 955.0L200.9 962.2ZM282.9 917.6L300.0 911.0L312.5 920.5L295.5 927.3ZM301.4 911.0L318.2 904.4L330.6 913.8L313.8 920.5ZM337.6 898.0L354.0 891.6L366.2 900.7L349.7 907.3ZM373.1 885.2L389.1 878.9L401.0 887.9L384.9 894.3ZM407.7 872.8L423.4 866.6L435.0 875.3L419.3 881.6ZM424.8 866.6L440.2 860.6L451.7 869.1L436.3 875.3ZM507.2 837.0L521.8 831.2L532.6 839.3L518.1 845.2ZM554.5 820.0L568.6 814.4L579.1 822.1L565.0 827.8ZM257.3 942.8L274.7 935.9L287.5 945.5L270.2 952.6ZM452.2 870.9L467.3 864.8L478.7 873.1L463.5 879.4ZM668.0 791.2L680.8 786.0L690.5 793.0L677.7 798.3Z" fill="#b58e71"/><path d="M144.0 415.6L162.6 414.5L171.2 423.2L152.6 424.4ZM203.2 412.4L221.2 411.4L229.5 419.8L211.6 420.9ZM241.7 410.3L259.1 409.3L267.3 417.5L249.8 418.6ZM404.3 401.6L420.0 400.7L427.3 408.0L411.6 409.0ZM455.0 398.9L470.1 398.0L477.2 405.0L462.1 406.0ZM535.8 394.6L550.0 393.7L556.8 400.2L542.5 401.2ZM566.9 392.9L580.8 392.1L587.4 398.4L573.5 399.3ZM582.2 392.1L595.9 391.3L602.4 397.5L588.7 398.4ZM656.1 388.1L669.0 387.3L675.2 393.2L662.3 394.0ZM54.1 431.7L73.7 430.4L82.8 439.8L63.3 441.1ZM95.8 429.2L114.9 428.0L123.8 437.1L104.7 438.4ZM136.6 426.8L155.2 425.6L164.0 434.4L145.3 435.8ZM215.4 422.1L233.2 420.9L241.6 429.3L223.8 430.6ZM234.6 420.9L252.2 419.8L260.5 428.1L242.9 429.3ZM327.4 415.4L343.9 414.3L351.7 422.1L335.2 423.3ZM380.6 412.2L396.5 411.2L404.1 418.7L388.1 419.8ZM415.1 410.2L430.6 409.2L438.1 416.4L422.5 417.5ZM481.8 406.2L496.7 405.2L503.7 412.1L488.9 413.2ZM545.7 402.4L559.8 401.5L566.6 408.0L552.4 409.0ZM679.3 394.4L692.0 393.6L698.1 399.4L685.5 400.3ZM25.0 445.1L44.9 443.7L54.3 453.2L34.4 454.8ZM149.2 436.9L167.7 435.6L176.5 444.5L158.0 445.9ZM208.3 433.0L226.1 431.8L234.7 440.3L216.8 441.7ZM391.5 421.0L407.3 419.8L415.0 427.3L399.2 428.6ZM408.7 419.8L424.4 418.7L431.9 426.1L416.3 427.3ZM492.1 414.4L506.8 413.3L513.9 420.2L499.2 421.4ZM524.1 412.3L538.5 411.2L545.5 418.0L531.1 419.1ZM80.5 452.9L99.7 451.4L109.0 460.7L89.8 462.3ZM313.9 436.1L330.6 434.8L338.8 442.8L322.1 444.2ZM580.5 417.0L594.2 415.9L601.0 422.3L587.3 423.5ZM640.1 412.7L653.1 411.6L659.6 417.8L646.6 418.9ZM270.3 449.7L287.4 448.2L295.9 456.6L278.7 458.1ZM396.0 439.8L411.8 438.5L419.6 446.1L403.8 447.6ZM430.2 437.2L445.6 435.9L453.2 443.3L437.8 444.7ZM447.0 435.9L462.2 434.6L469.8 441.9L454.6 443.3ZM512.3 430.8L526.8 429.5L534.1 436.5L519.6 437.8ZM528.2 429.5L542.6 428.3L549.7 435.2L535.4 436.5ZM634.7 421.2L647.8 420.1L654.4 426.3L641.3 427.6ZM282.0 459.2L299.0 457.7L307.6 466.1L290.5 467.7ZM354.5 453.1L370.8 451.6L378.9 459.6L362.7 461.2ZM389.6 450.2L405.5 448.7L413.4 456.4L397.6 458.0ZM440.8 445.9L456.1 444.5L463.8 451.9L448.5 453.4ZM506.4 440.3L521.0 439.0L528.3 446.0L513.8 447.5ZM599.5 432.5L613.1 431.2L620.0 437.7L606.4 439.1ZM275.1 470.5L292.2 468.8L300.9 477.3L283.8 479.1ZM330.1 465.5L346.6 463.9L354.9 472.1L338.4 473.8ZM400.5 459.1L416.2 457.6L424.3 465.3L408.5 467.0ZM434.6 456.1L449.9 454.5L457.8 462.1L442.4 463.7ZM532.3 447.2L546.6 445.8L553.9 452.7L539.7 454.2ZM609.0 440.2L622.4 438.9L629.3 445.4L615.9 446.8ZM623.8 438.9L637.1 437.6L643.9 444.0L630.7 445.4ZM638.5 437.6L651.5 436.2L658.3 442.6L645.2 444.0ZM695.5 432.4L707.9 431.1L714.4 437.1L702.0 438.5ZM172.1 491.4L190.3 489.5L199.7 498.6L181.4 500.7ZM376.7 471.5L392.7 469.8L401.0 477.7L385.0 479.5ZM618.3 448.0L631.6 446.6L638.6 453.1L625.3 454.6ZM633.0 446.6L646.2 445.2L653.1 451.6L640.0 453.1ZM504.7 468.5L519.2 466.9L526.9 474.1L512.3 475.9ZM567.5 462.0L581.4 460.4L588.7 467.3L574.9 469.0ZM582.8 460.4L596.5 458.8L603.8 465.6L590.1 467.3ZM656.7 452.7L669.6 451.3L676.5 457.6L663.6 459.2ZM671.0 451.3L683.7 449.8L690.5 456.1L677.8 457.6ZM137.4 518.7L156.0 516.5L165.8 526.0L147.1 528.3ZM328.1 497.6L344.6 495.6L353.3 504.0L336.8 506.1ZM363.7 493.7L379.9 491.7L388.4 499.9L372.3 502.0ZM415.8 487.9L431.3 486.1L439.6 493.9L424.0 495.9ZM546.3 473.5L560.4 471.8L568.0 478.9L553.8 480.7ZM561.8 471.8L575.8 470.1L583.2 477.1L569.3 478.9ZM592.3 468.4L605.9 466.8L613.2 473.6L599.6 475.3ZM622.2 465.2L635.4 463.5L642.6 470.1L629.3 471.8ZM651.4 461.9L664.3 460.3L671.3 466.8L658.3 468.4ZM665.7 460.3L678.5 458.8L685.4 465.1L672.6 466.8ZM68.2 539.0L87.6 536.5L97.8 546.6L78.4 549.1ZM189.6 524.8L207.7 522.5L217.3 531.8L199.2 534.2ZM247.3 518.0L264.8 515.8L274.0 524.7L256.6 527.0ZM321.4 509.3L338.0 507.2L346.9 515.7L330.3 517.9ZM339.4 507.2L355.8 505.1L364.6 513.5L348.2 515.7ZM357.2 505.1L373.4 503.1L382.1 511.3L365.9 513.5ZM409.4 499.0L425.1 497.0L433.5 505.0L417.8 507.1ZM524.8 485.5L539.1 483.7L546.9 490.9L532.5 492.8ZM556.1 481.8L570.1 480.0L577.7 487.1L563.7 489.0ZM631.4 473.0L644.6 471.3L651.8 477.9L638.6 479.7ZM646.0 471.3L659.0 469.6L666.1 476.1L653.1 477.9ZM660.4 469.6L673.3 467.9L680.3 474.4L667.5 476.1ZM674.7 467.9L687.4 466.3L694.3 472.6L681.6 474.4ZM122.4 545.1L141.2 542.6L151.3 552.3L132.5 555.0ZM142.6 542.6L161.2 540.1L171.2 549.7L152.6 552.4ZM182.3 537.7L200.5 535.2L210.2 544.6L192.1 547.2ZM240.3 530.5L257.8 528.1L267.3 537.2L249.8 539.6ZM277.9 525.8L295.0 523.5L304.2 532.3L287.1 534.7ZM271.0 538.3L288.2 535.8L297.6 544.7L280.4 547.3ZM480.7 510.8L495.5 508.7L503.7 516.3L488.9 518.6ZM590.7 496.4L604.3 494.5L611.9 501.4L598.3 503.5ZM605.7 494.5L619.1 492.5L626.7 499.4L613.2 501.4ZM635.2 490.6L648.4 488.7L655.7 495.4L642.6 497.4ZM301.2 545.8L318.0 543.3L327.3 552.1L310.5 554.7ZM319.4 543.3L336.0 540.8L345.3 549.5L328.6 552.1ZM337.4 540.8L353.8 538.4L363.0 546.9L346.6 549.5ZM615.1 502.6L628.4 500.5L636.0 507.4L622.6 509.5ZM99.7 586.7L118.8 583.7L129.4 593.8L110.3 596.9ZM160.4 577.9L178.8 575.0L189.0 584.8L170.7 587.8ZM219.1 569.4L236.8 566.6L246.7 576.0L229.0 578.9ZM435.2 538.1L450.6 535.6L459.3 543.7L443.9 546.2ZM501.1 528.5L515.7 526.2L524.0 533.8L509.4 536.2ZM667.9 504.4L680.6 502.3L688.0 508.9L675.2 511.0ZM682.0 502.3L694.6 500.3L701.9 506.7L689.3 508.9ZM71.3 604.3L90.7 601.1L101.6 611.5L82.2 614.8ZM269.0 574.2L286.1 571.4L295.9 580.5L278.7 583.4ZM305.9 568.6L322.7 565.8L332.2 574.7L315.5 577.6ZM84.4 615.8L103.6 612.5L114.6 622.8L95.4 626.3ZM145.6 606.1L164.2 602.9L174.8 612.8L156.2 616.1ZM405.7 564.6L421.3 561.9L430.4 570.2L414.7 573.0ZM628.2 529.1L641.4 526.8L649.2 533.7L636.0 536.2ZM685.7 520.0L698.3 517.8L705.7 524.3L693.1 526.6ZM178.0 613.9L196.2 610.6L206.7 620.4L188.5 623.8ZM346.7 585.8L363.0 582.8L372.6 591.5L356.2 594.6ZM364.4 582.8L380.6 579.9L390.0 588.5L373.9 591.5ZM433.4 571.3L448.8 568.5L457.8 576.7L442.4 579.6ZM562.4 549.8L576.4 547.3L584.6 554.6L570.7 557.3ZM637.4 537.3L650.5 534.9L658.3 541.8L645.2 544.3ZM69.0 646.0L88.4 642.4L99.7 652.9L80.3 656.7ZM110.4 638.8L129.3 635.3L140.4 645.5L121.4 649.2ZM130.7 635.3L149.4 631.8L160.4 641.9L141.6 645.6ZM150.8 631.8L169.3 628.3L180.1 638.3L161.6 641.9ZM209.8 621.5L227.7 618.2L238.1 627.8L220.3 631.3ZM477.1 575.0L492.0 572.1L500.8 580.1L485.9 583.0ZM556.7 561.1L570.7 558.4L579.1 565.9L565.1 568.6ZM689.3 538.0L701.9 535.6L709.4 542.2L696.9 544.7ZM82.1 657.8L101.4 654.0L112.7 664.5L93.5 668.4ZM143.4 646.6L162.0 643.0L173.0 653.1L154.4 656.9ZM535.3 575.5L549.6 572.6L558.2 580.2L543.9 583.2ZM611.8 561.6L625.2 558.9L633.3 566.0L619.9 568.8ZM95.2 669.5L114.3 665.6L125.7 676.1L106.6 680.1ZM115.7 665.6L134.6 661.8L145.8 672.1L127.0 676.1ZM397.4 612.3L413.2 609.1L422.7 617.6L406.9 621.0ZM497.6 593.3L512.2 590.3L521.1 598.2L506.5 601.3ZM635.8 567.2L648.9 564.4L657.0 571.4L643.9 574.3ZM128.5 677.2L147.2 673.2L158.5 683.5L139.8 687.6ZM207.7 661.6L225.6 657.8L236.4 667.6L218.5 671.5ZM283.5 646.7L300.5 643.0L310.9 652.3L293.8 656.1ZM320.1 639.5L336.7 635.9L346.9 645.0L330.3 648.6ZM384.6 638.9L400.5 635.4L410.3 644.0L394.4 647.7ZM639.6 586.7L652.7 583.7L660.9 590.8L647.9 593.9ZM153.8 700.3L172.3 696.1L183.7 706.3L165.2 710.6ZM173.7 696.1L191.9 691.9L203.2 701.9L185.0 706.3ZM324.8 663.9L341.4 660.1L351.7 669.2L335.2 673.2ZM429.7 641.6L445.1 638.1L454.7 646.5L439.3 650.2ZM85.2 729.7L104.5 725.1L116.4 735.8L97.2 740.5ZM262.8 690.5L280.0 686.4L290.9 695.9L273.6 700.2ZM299.9 682.3L316.7 678.3L327.3 687.6L310.5 691.8ZM423.4 655.1L438.9 651.4L448.7 659.9L433.2 663.7ZM521.9 633.4L536.3 629.9L545.5 637.7L531.1 641.3ZM614.0 613.1L627.4 609.8L636.0 617.0L622.6 620.4ZM118.7 737.0L137.6 732.4L149.5 742.9L130.6 747.6ZM274.6 701.4L291.7 697.1L302.6 706.6L285.4 711.0ZM347.4 684.7L363.7 680.7L374.1 689.7L357.8 693.9ZM365.1 680.7L381.3 676.7L391.6 685.5L375.4 689.7ZM652.5 615.0L665.5 611.7L673.9 618.7L660.9 622.1ZM111.2 753.6L130.1 748.8L142.2 759.4L123.3 764.4ZM267.7 716.6L284.9 712.2L295.9 721.8L278.7 726.3ZM410.8 682.7L426.4 678.7L436.5 687.3L420.9 691.5ZM494.0 663.0L508.7 659.2L518.3 667.3L503.6 671.2ZM617.9 633.7L631.2 630.2L639.9 637.5L626.6 641.1ZM144.2 760.6L162.8 755.8L174.7 766.1L156.2 771.2ZM164.2 755.8L182.5 750.9L194.4 761.2L176.0 766.2ZM260.7 732.1L278.0 727.5L289.2 737.1L271.9 741.9ZM316.1 718.5L332.8 714.1L343.6 723.4L327.0 727.9ZM455.1 684.5L470.3 680.4L480.2 688.8L465.1 693.0ZM488.0 676.4L502.8 672.5L512.5 680.6L497.7 684.7ZM449.0 698.4L464.2 694.2L474.2 702.6L459.0 707.0ZM650.9 647.3L663.9 643.7L672.6 650.8L659.6 654.5ZM679.5 640.1L692.1 636.5L700.6 643.4L688.0 647.1ZM208.5 773.9L226.3 768.9L238.1 778.9L220.3 784.1ZM320.8 744.5L337.5 739.8L348.5 749.1L331.9 753.9ZM631.0 663.4L644.2 659.6L653.1 666.8L639.9 670.8ZM385.3 740.9L401.2 736.3L411.9 745.1L396.0 749.9ZM580.7 688.2L594.4 684.1L603.8 691.6L590.0 695.9ZM378.8 756.1L394.8 751.3L405.6 760.2L389.7 765.2ZM463.8 732.4L478.8 727.9L489.1 736.2L474.0 740.9ZM634.8 684.8L647.9 680.7L657.0 688.0L643.9 692.1ZM407.0 761.6L422.7 756.7L433.5 765.4L417.8 770.4ZM506.6 733.0L521.1 728.4L531.2 736.5L516.7 741.2ZM538.3 723.9L552.5 719.4L562.4 727.2L548.2 731.9ZM686.8 681.2L699.4 677.2L708.2 684.1L695.6 688.2ZM119.5 860.1L138.4 854.1L151.3 864.8L132.5 870.9ZM256.6 819.6L273.9 814.0L285.8 823.7L268.5 829.4ZM484.4 752.1L499.2 747.3L509.6 755.5L494.8 760.5ZM548.2 733.3L562.3 728.7L572.1 736.5L558.0 741.2ZM638.6 706.5L651.7 702.2L660.9 709.4L647.8 713.8ZM287.0 825.2L304.0 819.6L315.8 829.1L298.8 834.9ZM411.5 787.3L427.1 782.1L438.0 790.8L422.4 796.1ZM428.5 782.1L443.9 777.0L454.7 785.5L439.3 790.8ZM145.0 884.6L163.6 878.3L176.5 888.7L158.0 895.2ZM165.0 878.3L183.3 872.1L196.1 882.4L177.8 888.8ZM242.6 853.9L260.1 848.0L272.3 857.8L254.9 863.9ZM298.6 836.4L315.5 830.6L327.3 840.1L310.5 846.0ZM405.1 802.9L420.8 797.6L431.9 806.3L416.3 811.8ZM439.1 792.3L454.4 787.0L465.3 795.6L450.0 801.0ZM613.0 737.7L626.4 733.1L636.0 740.5L622.6 745.2ZM177.4 890.3L195.6 884.0L208.5 894.2L190.3 900.7ZM291.8 853.4L308.7 847.5L320.8 857.0L303.8 863.1ZM415.9 813.3L431.5 807.9L442.6 816.5L427.1 822.2ZM466.2 797.1L481.2 791.8L492.0 800.2L477.0 805.6ZM694.1 723.6L706.6 719.1L715.7 725.9L703.2 730.5ZM460.1 812.6L475.2 807.1L486.1 815.5L471.0 821.1ZM571.6 775.6L585.5 770.5L595.6 778.2L581.7 783.4ZM646.2 750.9L659.2 746.1L668.7 753.2L655.7 758.2ZM660.6 746.1L673.4 741.4L682.9 748.4L670.0 753.3ZM122.6 941.3L141.4 934.4L154.9 945.0L136.1 952.1ZM240.5 901.1L258.0 894.7L270.7 904.5L253.2 911.1ZM470.5 822.7L485.5 817.1L496.4 825.4L481.5 831.1ZM550.5 795.4L564.6 790.1L574.9 797.9L560.8 803.3ZM626.1 769.6L639.4 764.6L649.2 771.9L635.9 777.0ZM655.3 759.7L668.2 754.8L677.7 761.9L664.8 766.9ZM135.4 953.7L154.0 946.7L167.6 957.2L148.9 964.4ZM214.3 926.1L232.1 919.4L245.0 929.3L227.2 936.2ZM396.9 862.2L412.7 856.1L424.2 864.9L408.5 871.1ZM513.1 821.4L527.6 815.9L538.4 823.9L523.9 829.6ZM544.7 810.4L558.9 804.9L569.4 812.7L555.2 818.3ZM635.4 778.6L648.5 773.5L658.3 780.7L645.2 786.0ZM167.9 959.0L186.2 951.9L199.7 962.1L181.4 969.4ZM264.3 924.3L281.5 917.6L294.2 927.2L277.0 934.1ZM355.4 891.6L371.7 885.2L383.7 894.2L367.4 900.7ZM570.0 814.4L583.8 808.9L594.2 816.5L580.4 822.2ZM585.2 808.9L598.9 803.5L609.2 811.0L595.5 816.6ZM180.4 971.2L198.5 963.9L212.0 974.1L193.8 981.5ZM238.4 949.7L255.9 942.8L269.0 952.5L251.4 959.7ZM348.9 909.0L365.2 902.5L377.3 911.5L361.0 918.2ZM579.6 823.9L593.3 818.3L603.8 825.8L590.0 831.5ZM639.2 801.9L652.3 796.5L662.2 803.7L649.1 809.2Z" fill="#bd9474"/><path d="M82.8 418.9L102.0 417.8L110.9 426.8L91.6 428.1ZM504.0 396.3L518.6 395.4L525.5 402.1L510.9 403.1ZM520.0 395.4L534.4 394.6L541.2 401.2L526.8 402.1ZM156.6 425.6L175.0 424.4L183.7 433.1L165.3 434.4ZM253.6 419.8L270.9 418.7L279.1 426.9L261.8 428.1ZM345.3 414.3L361.6 413.3L369.4 420.9L353.0 422.1ZM465.4 407.2L480.4 406.2L487.6 413.2L472.6 414.3ZM636.3 397.0L649.4 396.1L655.7 402.1L642.6 403.1ZM88.1 440.9L107.3 439.6L116.5 448.8L97.3 450.3ZM356.5 423.3L372.7 422.1L380.5 429.8L364.3 431.1ZM459.3 416.5L474.4 415.4L481.7 422.5L466.6 423.7ZM616.1 406.2L629.4 405.3L636.0 411.5L622.6 412.5ZM630.8 405.3L644.0 404.3L650.5 410.4L637.3 411.5ZM674.1 402.4L686.8 401.5L693.1 407.4L680.4 408.4ZM688.2 401.5L700.8 400.6L706.9 406.4L694.4 407.4ZM59.6 454.4L79.1 452.9L88.5 462.3L69.0 464.0ZM101.1 451.4L120.2 449.9L129.4 459.1L110.3 460.7ZM161.8 447.0L180.2 445.6L189.0 454.5L170.7 456.0ZM201.1 444.2L219.0 442.8L227.7 451.5L209.8 453.0ZM436.4 427.3L451.8 426.1L459.3 433.4L443.9 434.7ZM668.8 410.6L681.6 409.6L688.0 415.6L675.2 416.7ZM30.6 468.4L50.4 466.7L60.1 476.4L40.2 478.2ZM193.9 455.6L211.9 454.1L220.8 462.9L202.7 464.5ZM496.3 432.0L510.9 430.8L518.3 437.8L503.6 439.2ZM544.0 428.3L558.1 427.1L565.2 433.9L551.0 435.2ZM559.5 427.1L573.5 425.9L580.5 432.6L566.5 433.9ZM574.9 425.9L588.7 424.7L595.6 431.3L581.8 432.6ZM620.0 422.4L633.3 421.2L640.0 427.5L626.7 428.8ZM85.9 475.8L105.1 474.0L114.6 483.6L95.4 485.4ZM553.8 436.3L567.8 435.0L574.9 441.8L560.9 443.2ZM139.6 482.8L158.2 481.0L167.6 490.3L149.0 492.2ZM179.4 479.2L197.6 477.4L206.7 486.5L188.6 488.4ZM237.5 473.9L255.0 472.2L263.9 480.9L246.3 482.8ZM383.2 460.7L399.1 459.1L407.2 467.0L391.3 468.7ZM467.9 453.0L482.9 451.5L490.5 458.9L475.6 460.5ZM500.5 450.1L515.1 448.6L522.6 455.8L508.0 457.3ZM667.3 434.9L680.1 433.7L686.7 439.8L673.9 441.2ZM111.8 497.2L130.7 495.3L140.4 504.8L121.4 506.9ZM230.4 485.7L248.0 483.9L257.0 492.7L239.4 494.6ZM359.1 473.2L375.3 471.5L383.7 479.5L367.5 481.4ZM428.3 466.5L443.7 464.8L451.7 472.5L436.3 474.2ZM676.2 442.4L688.9 441.0L695.6 447.2L682.9 448.6ZM41.6 516.6L61.3 514.4L71.5 524.4L51.8 526.7ZM83.6 512.2L102.8 510.1L112.7 519.8L93.5 522.1ZM144.8 505.9L163.4 503.8L173.0 513.2L154.4 515.4ZM242.4 495.7L259.9 493.8L269.0 502.6L251.5 504.7ZM298.4 489.9L315.3 488.0L324.1 496.5L307.2 498.5ZM370.2 482.5L386.3 480.7L394.7 488.7L378.6 490.6ZM405.0 478.9L420.7 477.1L428.9 484.9L413.2 486.8ZM536.4 465.2L550.7 463.6L558.2 470.7L543.9 472.4ZM612.8 457.3L626.2 455.8L633.3 462.4L619.9 464.0ZM75.9 525.5L95.2 523.2L105.3 533.1L86.0 535.5ZM96.6 523.2L115.7 520.9L125.7 530.7L106.6 533.1ZM157.4 516.5L175.8 514.3L185.5 523.7L167.1 526.0ZM482.5 480.6L497.3 478.8L505.2 486.2L490.4 488.1ZM530.6 475.3L544.9 473.5L552.5 480.7L538.2 482.5ZM209.1 522.5L226.9 520.2L236.4 529.4L218.6 531.8ZM303.2 511.5L320.0 509.3L329.0 517.9L312.2 520.2ZM60.4 552.8L79.9 550.2L90.3 560.3L70.9 563.0ZM221.2 532.8L238.9 530.5L248.5 539.6L230.8 542.1ZM453.8 504.0L469.0 502.0L477.2 509.7L462.1 511.9ZM534.7 494.0L548.9 492.0L556.8 499.3L542.5 501.3ZM596.2 486.3L609.8 484.5L617.3 491.4L603.7 493.3ZM611.2 484.5L624.6 482.7L632.0 489.4L618.6 491.4ZM626.0 482.7L639.2 480.8L646.5 487.5L633.3 489.4ZM73.6 564.1L92.9 561.4L103.4 571.5L84.1 574.4ZM175.1 550.8L193.3 548.2L203.2 557.7L185.0 560.5ZM233.3 543.2L250.9 540.7L260.5 549.9L242.9 552.5ZM413.9 519.6L429.5 517.3L438.1 525.4L422.5 527.7ZM528.9 504.5L543.2 502.5L551.1 509.8L536.8 511.9ZM226.2 556.2L243.9 553.5L253.6 562.8L236.0 565.6ZM372.9 535.9L388.9 533.5L397.8 541.9L381.8 544.4ZM458.1 524.2L473.2 521.9L481.7 529.7L466.6 532.1ZM554.4 510.9L568.4 508.8L576.3 516.0L562.3 518.3ZM238.2 566.6L255.8 563.9L265.6 573.1L248.0 576.0ZM401.2 543.0L416.9 540.5L425.8 548.7L410.1 551.3ZM517.1 526.2L531.6 523.9L539.8 531.4L525.3 533.8ZM653.5 506.4L666.5 504.4L673.9 511.0L661.0 513.2ZM172.9 588.8L191.1 585.8L201.4 595.5L183.2 598.7ZM192.5 585.8L210.6 582.9L220.8 592.5L202.7 595.6ZM231.2 580.0L248.8 577.1L258.7 586.4L241.1 589.4ZM342.1 563.1L358.4 560.4L367.8 569.0L351.4 571.9ZM429.0 549.9L444.4 547.3L453.2 555.4L437.8 558.1ZM445.8 547.3L461.0 544.8L469.8 552.8L454.5 555.4ZM462.4 544.8L477.5 542.3L486.1 550.2L471.1 552.8ZM589.0 525.5L602.6 523.2L610.5 530.3L596.9 532.7ZM604.0 523.2L617.5 521.0L625.3 528.0L611.8 530.4ZM690.9 510.0L703.4 507.9L710.7 514.4L698.2 516.6ZM105.0 612.5L124.0 609.3L134.9 619.5L115.9 622.9ZM185.3 599.7L203.4 596.6L213.8 606.3L195.6 609.6ZM642.8 526.8L655.9 524.5L663.5 531.3L650.5 533.7ZM292.3 594.8L309.3 591.8L319.1 600.8L302.2 604.0ZM399.3 577.0L415.0 574.1L424.2 582.5L408.5 585.5ZM416.4 574.1L432.0 571.3L441.1 579.6L425.5 582.5ZM483.1 563.0L497.9 560.3L506.7 568.2L491.8 571.0ZM546.9 552.4L561.0 549.8L569.4 557.3L555.2 560.0ZM577.8 547.3L591.5 544.7L599.7 552.0L585.9 554.6ZM622.8 539.8L636.0 537.3L643.9 544.3L630.6 546.8ZM651.9 534.9L664.9 532.5L672.6 539.3L659.6 541.8ZM680.5 530.1L693.1 527.8L700.6 534.4L688.0 536.8ZM694.5 527.8L707.0 525.5L714.4 532.0L702.0 534.4ZM190.4 624.9L208.4 621.5L219.0 631.3L201.0 634.8ZM229.1 618.2L246.7 614.8L257.0 624.4L239.4 627.8ZM248.1 614.8L265.5 611.6L275.7 621.0L258.3 624.4ZM266.9 611.6L284.1 608.3L294.2 617.6L277.0 621.0ZM285.5 608.3L302.5 605.1L312.5 614.3L295.5 617.6ZM392.9 589.6L408.7 586.6L418.1 595.1L402.3 598.2ZM509.5 569.3L524.0 566.6L532.6 574.3L518.1 577.2ZM541.1 563.8L555.3 561.1L563.8 568.6L549.6 571.5ZM572.1 558.4L585.9 555.8L594.2 563.1L580.4 565.9ZM675.2 540.5L687.9 538.0L695.6 544.7L682.9 547.2ZM123.2 650.3L142.0 646.6L153.1 656.9L134.3 660.7ZM183.1 639.4L201.3 635.9L212.0 645.7L193.9 649.4ZM202.7 635.9L220.6 632.4L231.2 642.1L213.3 645.7ZM315.4 615.4L332.1 612.1L342.0 621.1L325.3 624.5ZM369.0 605.7L385.1 602.5L394.7 611.1L378.6 614.5ZM386.5 602.5L402.4 599.4L411.9 607.9L396.0 611.2ZM487.4 584.2L502.1 581.2L511.0 589.1L496.3 592.2ZM551.0 572.6L565.0 569.8L573.5 577.3L559.5 580.2ZM566.4 569.8L580.3 567.0L588.7 574.4L574.8 577.3ZM670.0 551.0L682.7 548.4L690.5 555.2L677.8 557.8ZM684.1 548.4L696.7 545.9L704.4 552.5L691.8 555.2ZM698.1 545.9L710.6 543.4L718.2 549.9L705.7 552.5ZM253.0 639.6L270.4 636.1L280.8 645.5L263.4 649.2ZM290.3 632.6L307.3 629.1L317.5 638.3L300.5 641.9ZM326.8 625.7L343.4 622.3L353.3 631.2L336.8 634.8ZM380.0 615.6L396.0 612.3L405.7 620.9L389.7 624.3ZM188.2 665.4L206.3 661.6L217.3 671.5L199.2 675.5ZM301.9 643.0L318.7 639.5L329.0 648.6L312.1 652.3ZM373.6 628.9L389.6 625.5L399.4 634.2L383.4 637.8ZM539.4 596.3L553.6 593.2L562.4 600.8L548.2 604.0ZM600.7 584.2L614.3 581.2L622.6 588.5L609.1 591.5ZM219.9 672.6L237.6 668.7L248.5 678.5L230.7 682.5ZM257.9 664.9L275.2 661.0L285.8 670.5L268.5 674.5ZM533.6 608.4L547.9 605.2L556.8 612.9L542.5 616.2ZM564.7 602.0L578.6 598.9L587.4 606.4L573.4 609.7ZM113.4 708.9L132.3 704.5L144.0 715.0L125.1 719.5ZM212.7 687.8L230.5 683.7L241.6 693.5L223.8 697.7ZM269.7 675.6L286.9 671.7L297.6 681.1L280.4 685.2ZM360.6 656.3L376.7 652.6L386.8 661.5L370.7 665.3ZM574.4 610.9L588.2 607.6L596.9 615.1L583.1 618.5ZM589.6 607.6L603.2 604.4L611.9 611.8L598.2 615.1ZM604.6 604.4L618.1 601.3L626.7 608.6L613.2 611.8ZM648.8 595.1L661.7 592.0L670.0 599.0L657.0 602.2ZM105.9 725.1L124.9 720.6L136.7 731.2L117.7 735.8ZM186.1 707.4L204.2 703.1L215.5 713.2L197.4 717.6ZM657.8 603.4L670.7 600.2L679.0 607.2L666.1 610.5ZM98.3 741.7L117.3 737.0L129.4 747.6L110.3 752.5ZM329.5 688.8L346.0 684.7L356.6 693.8L340.0 698.1ZM382.7 676.7L398.6 672.7L408.8 681.5L392.8 685.6ZM500.0 649.8L514.6 646.2L524.0 654.2L509.4 658.0ZM623.4 621.6L636.6 618.3L645.2 625.5L632.0 629.0ZM286.3 712.2L303.2 707.9L314.2 717.3L297.2 721.8ZM322.8 703.5L339.4 699.3L350.1 708.5L333.5 712.9ZM340.8 699.3L357.2 695.1L367.8 704.1L351.4 708.5ZM358.6 695.1L374.8 690.9L385.2 699.9L369.1 704.2ZM526.0 655.5L540.4 651.7L549.7 659.6L535.4 663.4ZM541.8 651.7L555.9 648.0L565.2 655.8L551.0 659.6ZM587.9 640.8L601.6 637.2L610.5 644.7L596.9 648.4ZM632.6 630.2L645.8 626.8L654.4 633.9L641.3 637.5ZM661.6 623.4L674.4 620.0L682.9 627.0L670.0 630.5ZM404.5 696.9L420.1 692.7L430.4 701.4L414.7 705.7ZM551.6 660.9L565.6 657.1L574.9 664.8L560.9 668.7ZM567.0 657.1L580.9 653.3L590.1 661.0L576.2 664.8ZM656.3 635.2L669.2 631.7L677.7 638.8L664.8 642.4ZM670.6 631.7L683.3 628.3L691.8 635.2L679.0 638.8ZM136.8 777.5L155.4 772.4L167.6 782.9L148.9 788.1ZM253.8 747.9L271.1 743.1L282.5 752.8L265.1 757.7ZM291.1 738.4L308.0 733.8L319.1 743.2L302.2 748.0ZM345.5 724.7L361.8 720.2L372.6 729.2L356.2 733.9ZM432.2 702.7L447.6 698.4L457.8 707.0L442.4 711.3ZM169.3 784.2L187.6 779.0L199.7 789.3L181.4 794.6ZM391.7 726.0L407.5 721.5L418.1 730.3L402.2 734.9ZM475.9 704.0L490.8 699.7L500.8 707.9L485.9 712.3ZM508.3 695.5L522.9 691.3L532.6 699.4L518.1 703.7ZM616.3 667.3L629.6 663.4L638.6 670.7L625.3 674.7ZM645.6 659.6L658.6 655.8L667.4 663.0L654.4 666.8ZM101.3 817.6L120.4 812.1L133.0 822.8L114.0 828.5ZM121.8 812.1L140.6 806.6L153.1 817.2L134.3 822.8ZM518.4 705.0L532.8 700.7L542.6 708.7L528.2 713.1ZM654.7 668.2L667.6 664.3L676.4 671.4L663.5 675.4ZM697.1 656.7L709.6 653.0L718.2 659.8L705.7 663.6ZM154.6 818.6L173.1 813.0L185.5 823.4L167.0 829.1ZM343.5 765.9L359.9 761.0L371.0 770.1L354.6 775.2ZM512.5 718.9L527.0 714.4L536.9 722.5L522.4 727.0ZM528.4 714.4L542.7 710.1L552.5 718.0L538.2 722.5ZM544.1 710.1L558.2 705.7L568.0 713.5L553.8 718.0ZM620.1 688.9L633.4 684.8L642.6 692.1L629.3 696.3ZM649.3 680.7L662.3 676.7L671.3 683.9L658.3 688.0ZM147.2 836.2L165.7 830.5L178.3 840.9L159.8 846.8ZM336.9 781.7L353.3 776.6L364.6 785.8L348.1 791.1ZM372.3 771.5L388.4 766.5L399.4 775.5L383.4 780.6ZM644.0 693.5L657.0 689.4L666.1 696.5L653.1 700.8ZM365.8 787.2L382.0 782.0L393.1 791.0L377.0 796.4ZM500.6 747.3L515.3 742.6L525.5 750.7L510.8 755.6ZM532.5 737.9L546.8 733.3L556.8 741.2L542.5 745.9ZM563.7 728.7L577.6 724.1L587.4 731.8L573.4 736.5ZM695.6 689.6L708.1 685.5L716.9 692.3L704.5 696.6ZM461.9 771.9L477.0 766.9L487.6 775.2L472.5 780.4ZM494.7 761.9L509.3 757.0L519.7 765.2L505.0 770.2ZM334.9 825.0L351.4 819.4L363.0 828.6L346.5 834.3ZM387.9 808.4L403.7 802.9L415.0 811.8L399.1 817.4ZM422.2 797.6L437.7 792.3L448.7 800.9L433.2 806.4ZM627.8 733.1L641.0 728.5L650.5 735.8L637.3 740.5ZM642.4 728.5L655.4 724.0L664.8 731.2L651.8 735.8ZM117.3 909.7L136.2 903.2L149.5 913.8L130.6 920.5ZM398.8 818.9L414.5 813.3L425.8 822.1L410.0 827.8ZM449.7 802.5L464.8 797.1L475.7 805.6L460.5 811.1ZM498.9 786.6L513.5 781.4L524.0 789.5L509.4 794.8ZM546.4 771.2L560.6 766.2L570.7 774.0L556.6 779.2ZM607.5 751.5L620.9 746.7L630.7 754.1L617.2 759.1ZM680.0 728.1L692.7 723.6L701.9 730.5L689.3 735.2ZM228.5 889.4L246.1 883.1L258.7 893.0L241.1 899.5ZM285.0 870.7L302.0 864.6L314.2 874.1L297.2 880.4ZM601.9 765.5L615.4 760.6L625.3 768.0L611.8 773.1ZM688.9 736.7L701.4 732.1L710.7 738.9L698.1 743.7ZM486.9 817.1L501.6 811.6L512.5 819.8L497.7 825.5ZM534.9 800.8L549.1 795.4L559.6 803.3L545.3 808.8ZM566.0 790.1L579.9 784.9L590.1 792.6L576.2 798.0ZM596.4 779.8L610.0 774.7L620.0 782.1L606.4 787.4ZM344.2 880.6L360.6 874.4L372.6 883.5L356.2 889.9ZM414.1 856.1L429.6 850.2L441.1 858.8L425.5 865.0ZM447.8 844.3L463.0 838.5L474.2 846.9L459.0 852.9ZM560.3 804.9L574.2 799.6L584.6 807.3L570.6 812.8ZM590.8 794.2L604.4 789.0L614.6 796.5L601.0 801.9ZM692.5 758.6L705.0 753.7L714.4 760.6L701.9 765.6ZM600.3 803.5L613.8 798.1L624.0 805.6L610.5 811.1ZM644.6 787.6L657.6 782.4L667.4 789.5L654.4 794.9ZM687.4 772.2L699.9 767.2L709.4 774.0L696.9 779.2ZM160.6 978.5L179.0 971.2L192.6 981.4L174.2 988.9ZM276.1 935.9L293.2 929.0L305.9 938.5L288.8 945.5ZM366.6 902.5L382.7 896.0L394.7 904.9L378.6 911.6ZM384.1 896.0L400.0 889.6L411.9 898.4L396.0 905.0ZM501.3 852.8L515.9 846.8L526.9 854.9L512.3 861.0ZM517.3 846.8L531.7 841.0L542.6 848.9L528.2 854.9Z" fill="#c69b7b"/></g><g clip-path="url(#vs)"><rect x="104" y="490" width="100" height="135" fill="#a68c98"/><path d="M104 488.0L204 496.0" stroke="#6e5c9c" stroke-width="1.0"/><path d="M104 491.6L204 499.6" stroke="#6e5c9c" stroke-width="1.0"/><path d="M104 495.2L204 503.2" stroke="#6e5c9c" stroke-width="1.0"/><path d="M104 498.8L204 506.8" stroke="#6e5c9c" stroke-width="1.0"/><path d="M104 502.4L204 510.4" stroke="#6e5c9c" stroke-width="1.0"/><path d="M104 506.0L204 514.0" stroke="#6e5c9c" stroke-width="1.0"/><path d="M104 509.6L204 517.6" stroke="#6e5c9c" stroke-width="1.0"/><path d="M104 513.2L204 521.2" stroke="#6e5c9c" stroke-width="1.0"/><path d="M104 516.8L204 524.8" stroke="#6e5c9c" stroke-width="1.0"/><path d="M104 520.4L204 528.4" stroke="#6e5c9c" stroke-width="1.0"/><path d="M104 524.0L204 532.0" stroke="#6e5c9c" stroke-width="1.0"/><path d="M104 527.6L204 535.6" stroke="#6e5c9c" stroke-width="1.0"/><path d="M104 531.2L204 539.2" stroke="#6e5c9c" stroke-width="1.0"/><path d="M104 534.8L204 542.8" stroke="#6e5c9c" stroke-width="1.0"/><path d="M104 538.4L204 546.4" stroke="#6e5c9c" stroke-width="1.0"/><path d="M104 542.0L204 550.0" stroke="#6e5c9c" stroke-width="1.0"/><path d="M104 545.6L204 553.6" stroke="#6e5c9c" stroke-width="1.0"/><path d="M104 549.2L204 557.2" stroke="#6e5c9c" stroke-width="1.0"/><path d="M104 552.8L204 560.8" stroke="#6e5c9c" stroke-width="1.0"/><path d="M104 556.4L204 564.4" stroke="#6e5c9c" stroke-width="1.0"/><path d="M104 560.0L204 568.0" stroke="#6e5c9c" stroke-width="1.0"/><path d="M104 563.6L204 571.6" stroke="#6e5c9c" stroke-width="1.0"/><path d="M104 567.2L204 575.2" stroke="#6e5c9c" stroke-width="1.0"/><path d="M104 570.8L204 578.8" stroke="#6e5c9c" stroke-width="1.0"/><path d="M104 574.4L204 582.4" stroke="#6e5c9c" stroke-width="1.0"/><path d="M104 578.0L204 586.0" stroke="#6e5c9c" stroke-width="1.0"/><path d="M104 581.6L204 589.6" stroke="#6e5c9c" stroke-width="1.0"/><path d="M104 585.2L204 593.2" stroke="#6e5c9c" stroke-width="1.0"/><path d="M104 588.8L204 596.8" stroke="#6e5c9c" stroke-width="1.0"/><path d="M104 592.4L204 600.4" stroke="#6e5c9c" stroke-width="1.0"/><path d="M104 596.0L204 604.0" stroke="#6e5c9c" stroke-width="1.0"/><path d="M104 599.6L204 607.6" stroke="#6e5c9c" stroke-width="1.0"/><path d="M104 603.2L204 611.2" stroke="#6e5c9c" stroke-width="1.0"/><path d="M104 606.8L204 614.8" stroke="#6e5c9c" stroke-width="1.0"/><path d="M104 610.4L204 618.4" stroke="#6e5c9c" stroke-width="1.0"/><path d="M104 614.0L204 622.0" stroke="#6e5c9c" stroke-width="1.0"/><path d="M104 617.6L204 625.6" stroke="#6e5c9c" stroke-width="1.0"/><path d="M104 621.2L204 629.2" stroke="#6e5c9c" stroke-width="1.0"/><path d="M104 624.8L204 632.8" stroke="#6e5c9c" stroke-width="1.0"/><path d="M104 628.4L204 636.4" stroke="#6e5c9c" stroke-width="1.0"/></g><path d="M104 623.5L199 607" stroke="#2a2ad0" stroke-width="1.6"/><path d="M104 384.5H689M104 776.5H689" stroke="#c9a5a5" stroke-width="1" stroke-dasharray="1 1"/></g></svg>
<div class="a" style="left:104px;top:777px;width:585px;height:18px;background:#303030;"></div>
<svg class="a" style="left:106px;top:781px;" width="12" height="11" viewBox="0 0 12 11"><path d="M2 10V1M1 9h10" stroke="#ddd"/><rect x="5" y="3" width="5" height="6" rx="1" fill="#ddd"/></svg>
<div class="t" style="left:127px;top:783px;font-size:10px;color:#cdcdcd;letter-spacing:-0.2px;font-weight:bold;">[366, 96]</div>
<div class="a" style="left:187px;top:780px;width:1px;height:13px;background:#555;"></div>
<div class="a" style="left:191px;top:780px;width:31px;height:14px;background:#30363a;border:1px solid #191919;border-radius:2px"></div>
<div class="t" style="left:195px;top:784px;font-size:9.5px;color:#c8c8c8;letter-spacing:-0.3px;">1x1</div>
<svg class="a" style="left:212px;top:784px;" width="7" height="5" viewBox="0 0 7 5"><path d="M0 0h7L3.5 4z" fill="#6ab0d8"/></svg>
<div class="a" style="left:226px;top:780px;width:1px;height:13px;background:#555;"></div>
<svg class="a" style="left:234px;top:780px;" width="12" height="13" viewBox="0 0 12 13"><path d="M2 11h9M2 11l7-8" stroke="#ccc"/><circle cx="2.5" cy="11" r="1.5" fill="#ddd"/></svg>
<div class="t" style="left:254px;top:783px;font-size:10px;color:#d8d8d8;letter-spacing:-0.3px;font-weight:bold;">Raw</div>
<div class="a" style="left:277px;top:781px;width:10px;height:11px;background:#c89a72;border-radius:1px"></div>
<div class="t" style="left:293px;top:784px;font-size:9.5px;color:#d84444;letter-spacing:-0.2px;">0.423</div>
<div class="t" style="left:327px;top:784px;font-size:9.5px;color:#44c044;letter-spacing:-0.2px;">0.232</div>
<div class="t" style="left:361px;top:784px;font-size:9.5px;color:#4a8ed4;letter-spacing:-0.2px;">0.117</div>
<div class="a" style="left:391px;top:780px;width:1px;height:13px;background:#555;"></div>
<div class="a" style="left:396px;top:780px;width:36px;height:14px;background:#30363a;border:1px solid #191919;border-radius:2px"></div>
<div class="t" style="left:399px;top:784px;font-size:9.5px;color:#c8c8c8;letter-spacing:-0.3px;">HSV</div>
<svg class="a" style="left:421px;top:784px;" width="7" height="5" viewBox="0 0 7 5"><path d="M0 0h7L3.5 4z" fill="#6ab0d8"/></svg>
<div class="t" style="left:440px;top:784px;font-size:9.5px;color:#cfcfcf;letter-spacing:-0.2px;">22.5</div>
<div class="t" style="left:470px;top:784px;font-size:9.5px;color:#cfcfcf;letter-spacing:-0.2px;">0.72</div>
<div class="t" style="left:500px;top:784px;font-size:9.5px;color:#cfcfcf;letter-spacing:-0.2px;">0.42</div>
<div class="a" style="left:526px;top:780px;width:1px;height:13px;background:#555;"></div>
<div class="t" style="left:539px;top:784px;font-size:9px;color:#6a6a6a;letter-spacing:-0.3px;">Finished in [00:00</div>
<div class="a" style="left:689px;top:332px;width:225px;height:464px;background:#303030;"></div>
<div class="a" style="left:690px;top:332px;width:2px;height:464px;background:#262626;"></div>
<div class="a" style="left:697px;top:333px;width:212px;height:19px;background:#3a3a3a;"></div>
<div class="a" style="left:697px;top:333px;width:36px;height:19px;background:#303030;"></div>
<div class="t" style="left:698px;top:339px;font-size:10px;color:#4aa0d8;letter-spacing:-0.2px;font-weight:bold;">Layers</div>
<div class="a" style="left:734px;top:333px;width:29px;height:19px;background:#404040;"></div>
<div class="t" style="left:737px;top:339px;font-size:10px;color:#e0e0e0;letter-spacing:-0.2px;font-weight:bold;">Stats</div>
<div class="a" style="left:697px;top:352px;width:212px;height:26px;background:#2c2c2c;"></div>
<svg class="a" style="left:700px;top:356px;" width="20" height="20" viewBox="0 0 20 20"><path d="M2 12l8 4 8-4M2 15l8 4 8-4" fill="none" stroke="#ddd" stroke-width="1.4"/><path d="M10 2v8M6 6h8" stroke="#30c040" stroke-width="2"/></svg>
<svg class="a" style="left:727px;top:356px;" width="20" height="20" viewBox="0 0 20 20"><path d="M2 12l8 4 8-4M2 15l8 4 8-4" fill="none" stroke="#ddd" stroke-width="1.4"/><path d="M10 2v8M6 6h8" stroke="#777" stroke-width="2"/></svg>
<svg class="a" style="left:754px;top:356px;" width="20" height="20" viewBox="0 0 20 20"><path d="M2 12l8 4 8-4M2 15l8 4 8-4" fill="none" stroke="#ddd" stroke-width="1.4"/><path d="M10 2v8M6 6h8" stroke="#4aa0d8" stroke-width="2"/></svg>
<svg class="a" style="left:781px;top:356px;" width="20" height="20" viewBox="0 0 20 20"><path d="M2 12l8 4 8-4M2 15l8 4 8-4" fill="none" stroke="#ddd" stroke-width="1.4"/><path d="M10 2v8M6 6h8" stroke="#4aa0d8" stroke-width="2"/></svg>
<svg class="a" style="left:810px;top:356px;" width="18" height="18" viewBox="0 0 18 18"><path d="M6 4h10M6 9h10M6 14h10" stroke="#ddd" stroke-width="1.6"/><circle cx="2.5" cy="4" r="1.3" fill="#ddd"/><circle cx="2.5" cy="9" r="1.3" fill="#ddd"/><circle cx="2.5" cy="14" r="1.3" fill="#ddd"/></svg>
<svg class="a" style="left:837px;top:357px;" width="18" height="16" viewBox="0 0 18 16"><path d="M4 10q4-7 10-3M4 5v5h5" fill="none" stroke="#555" stroke-width="1.5"/></svg>
<svg class="a" style="left:864px;top:357px;" width="18" height="16" viewBox="0 0 18 16"><path d="M14 10q-4-7-10-3M14 5v5H9" fill="none" stroke="#555" stroke-width="1.5"/></svg>
<div class="a" style="left:697px;top:378px;width:212px;height:17px;background:#363636;"></div>
<svg class="a" style="left:699px;top:381px;" width="14" height="10" viewBox="0 0 14 10"><ellipse cx="7" cy="5" rx="6" ry="3.5" fill="none" stroke="#bbb" stroke-width="1.2"/><circle cx="7" cy="5" r="1.8" fill="#bbb"/></svg>
<svg class="a" style="left:724px;top:379px;" width="13" height="14" viewBox="0 0 13 14"><rect x=".5" y=".5" width="12" height="13" fill="none" stroke="#aaa"/><path d="M3 12q0-8 8-9" fill="none" stroke="#ddd" stroke-width="1.2"/></svg>
<div class="t" style="left:739px;top:383px;font-size:9.5px;color:#cfcfcf;letter-spacing:-0.35px;">Display Correction</div>
<div class="a" style="left:697px;top:395px;width:212px;height:16px;background:#343434;"></div>
<svg class="a" style="left:740px;top:395px;" width="12" height="13" viewBox="0 0 12 13"><rect x=".5" y=".5" width="11" height="12" fill="none" stroke="#aaa"/><path d="M6 3v7M2.5 6.5h7" stroke="#ddd" stroke-width="1.2"/></svg>
<div class="t" style="left:755px;top:399px;font-size:9.5px;color:#cfcfcf;letter-spacing:-0.35px;">Lens Effects</div>
<svg class="a" style="left:740px;top:410px;" width="12" height="5" viewBox="0 0 12 5"><rect x=".5" y=".5" width="11" height="10" fill="none" stroke="#aaa"/></svg>
<div class="a" style="left:606px;top:414px;width:882px;height:477px;background:#444444;"></div>
<div class="a" style="left:606px;top:414px;width:1px;height:477px;background:#5a5a5a;"></div>
<div class="a" style="left:607px;top:414px;width:881px;height:23px;background:#ffffff;"></div>
<div class="t" style="left:613px;top:422px;font-size:10px;color:#222;letter-spacing:-0.3px;">Style Editor</div>
<div class="a" style="left:607px;top:437px;width:881px;height:17px;background:#404040;"></div>
<div class="t" style="left:613px;top:442px;font-size:9.5px;color:#dcdcdc;letter-spacing:-0.3px;">Edit</div>
<div class="t" style="left:641px;top:442px;font-size:9.5px;color:#dcdcdc;letter-spacing:-0.3px;">View</div>
<div class="t" style="left:673px;top:442px;font-size:9.5px;color:#dcdcdc;letter-spacing:-0.3px;">Options</div>
<div class="t" style="left:718px;top:442px;font-size:9.5px;color:#dcdcdc;letter-spacing:-0.3px;">Style</div>
<div class="t" style="left:750px;top:442px;font-size:9.5px;color:#dcdcdc;letter-spacing:-0.3px;">Segments</div>
<div class="t" style="left:803px;top:442px;font-size:9.5px;color:#dcdcdc;letter-spacing:-0.3px;">Base Objects</div>
<div class="a" style="left:607px;top:453px;width:881px;height:2px;background:#a8a8a8;"></div>
<div class="a" style="left:607px;top:455px;width:881px;height:21px;background:#3c3c3c;"></div>
<div class="a" style="left:608px;top:457px;width:5px;height:18px;background:repeating-conic-gradient(#222 0 25%,#555 0 50%) 0 0/2px 2px"></div>
<svg class="a" style="left:616px;top:456px;" width="18" height="18" viewBox="0 0 18 18"><path d="M5 5h6a4 4 0 0 1 0 8H8" fill="none" stroke="#3a9ae0" stroke-width="2.4"/><path d="M1 5l5-4v8z" fill="#3a9ae0"/></svg>
<svg class="a" style="left:636px;top:456px;" width="18" height="18" viewBox="0 0 18 18"><path d="M13 5H7a4 4 0 0 0 0 8h3" fill="none" stroke="#3a9ae0" stroke-width="2.4"/><path d="M17 5l-5-4v8z" fill="#3a9ae0"/></svg>
<svg class="a" style="left:661px;top:456px;" width="18" height="18" viewBox="0 0 18 18"><rect x="3" y="2" width="8" height="10" fill="#ddd" stroke="#888" stroke-width=".8"/><rect x="7" y="6" width="8" height="10" fill="#eee" stroke="#888" stroke-width=".8"/></svg>
<svg class="a" style="left:681px;top:456px;" width="18" height="18" viewBox="0 0 18 18"><rect x="3" y="4" width="12" height="12" fill="#bbb"/><rect x="6" y="2" width="6" height="4" fill="#ddd"/></svg>
<svg class="a" style="left:701px;top:456px;" width="18" height="18" viewBox="0 0 18 18"><path d="M4 4l10 10M14 4L4 14" stroke="#bbb" stroke-width="3"/></svg>
<svg class="a" style="left:726px;top:456px;" width="18" height="18" viewBox="0 0 18 18"><path d="M3 9l4 5 8-10" fill="none" stroke="#aaa" stroke-width="2.6"/></svg>
<svg class="a" style="left:746px;top:456px;" width="18" height="18" viewBox="0 0 18 18"><circle cx="9" cy="9" r="6" fill="none" stroke="#888" stroke-width="1.5"/><path d="M5 13l8-8" stroke="#888" stroke-width="1.5"/></svg>
<svg class="a" style="left:766px;top:456px;" width="18" height="18" viewBox="0 0 18 18"><path d="M3 3h12v2H3zM9 5v10M5 9h8" stroke="#ccc" stroke-width="2"/></svg>
<svg class="a" style="left:786px;top:456px;" width="18" height="18" viewBox="0 0 18 18"><rect x="4" y="2" width="10" height="14" fill="#bbb"/><path d="M9 6v7M6 10l3 3 3-3" fill="none" stroke="#eee" stroke-width="1.5"/></svg>
<svg class="a" style="left:811px;top:456px;" width="18" height="18" viewBox="0 0 18 18"><path d="M3 8a6 6 0 0 1 11-3M15 10a6 6 0 0 1-11 3" fill="none" stroke="#3aa0e8" stroke-width="2.6"/><path d="M15 1v6h-6zM3 17v-6h6z" fill="#3aa0e8"/></svg>
<svg class="a" style="left:831px;top:456px;" width="18" height="18" viewBox="0 0 18 18"><rect x="3" y="3" width="9" height="12" fill="#aaa"/><path d="M8 9h8l-3-3M16 9l-3 3" stroke="#ddd" stroke-width="1.5" fill="none"/></svg>
<svg class="a" style="left:857px;top:456px;" width="18" height="18" viewBox="0 0 18 18"><rect x="3" y="2" width="9" height="14" fill="#eee"/><path d="M5 5h5M5 8h5M5 11h5" stroke="#e04040" stroke-width="1.3"/><rect x="13" y="3" width="2.5" height="12" fill="#f0c020"/></svg>
<div class="a" style="left:657px;top:458px;width:1px;height:15px;background:#2e2e2e;"></div>
<div class="a" style="left:722px;top:458px;width:1px;height:15px;background:#2e2e2e;"></div>
<div class="a" style="left:805px;top:458px;width:1px;height:15px;background:#2e2e2e;"></div>
<div class="a" style="left:853px;top:458px;width:1px;height:15px;background:#2e2e2e;"></div>
<div class="a" style="left:607px;top:476px;width:160px;height:415px;background:#444444;"></div>
<div class="a" style="left:607px;top:476px;width:160px;height:11px;background:#2d2d2d;"></div>
<div class="t" style="left:674px;transform:translateX(-50%);top:478px;font-size:9.5px;color:#dcdcdc;letter-spacing:-0.3px;">Properties</div>
<svg class="a" style="left:755px;top:477px;" width="9" height="9" viewBox="0 0 9 9"><path d="M1.5 1.5l6 6M7.5 1.5l-6 6" stroke="#111" stroke-width="1.6"/></svg>
<div class="a" style="left:767px;top:476px;width:3px;height:415px;background:#2e2e2e;"></div>
<div class="a" style="left:770px;top:476px;width:651px;height:18px;background:#3a3a3a;"></div>
<div class="a" style="left:771px;top:477px;width:47px;height:16px;background:#474747;"></div>
<div class="t" style="left:777px;top:481px;font-size:9.5px;color:#e4e4e4;letter-spacing:-0.3px;">Top level</div>
<div class="a" style="left:770px;top:493px;width:647px;height:397px;background:#4e4e4e;"></div>
<div class="a" style="left:770px;top:493px;width:647px;height:1px;background:#6a6a6a;"></div>
<div class="a" style="left:770px;top:493px;width:1px;height:397px;background:#6a6a6a;"></div>
<div class="a" style="left:1416px;top:493px;width:1px;height:397px;background:#6a6a6a;"></div>
<div class="a" style="left:770px;top:889px;width:647px;height:1px;background:#6a6a6a;"></div>
<svg class="a" style="left:0;top:0" width="1488" height="907" viewBox="0 0 1488 907"><defs><clipPath id="cvc"><rect x="771" y="494" width="645" height="395"/></clipPath></defs><g clip-path="url(#cvc)"><path d="M890.6 513.9C922.6 513.9 922.6 519.7 954.6 519.7" fill="none" stroke="#d9a57a" stroke-width="1.8"/><path d="M891.5 537.9C923.05 537.9 923.05 532.8 954.6 532.8" fill="none" stroke="#d9a57a" stroke-width="1.8"/><path d="M901.5 558C928.05 558 928.05 546 954.6 546" fill="none" stroke="#d9a57a" stroke-width="1.8"/><path d="M1032.6 531.4C1058.6 531.4 1058.6 536.9 1084.6 536.9" fill="none" stroke="#d9a57a" stroke-width="1.8"/><path d="M1180.4 529C1219.3000000000002 529 1219.3000000000002 534.4 1258.2 534.4" fill="none" stroke="#d9a57a" stroke-width="1.8"/><path d="M1175.3 595.3C1216.75 595.3 1216.75 548 1258.2 548" fill="none" stroke="#d9a57a" stroke-width="1.8"/><path d="M1175.3 595.3C1216.75 595.3 1216.75 561 1258.2 561" fill="none" stroke="#d9a57a" stroke-width="1.8"/><path d="M1026 607C1062.65 607 1062.65 590.3 1099.3 590.3" fill="none" stroke="#d9a57a" stroke-width="1.8"/><path d="M1018 631.2C1058.65 631.2 1058.65 603.4 1099.3 603.4" fill="none" stroke="#d9a57a" stroke-width="1.8"/><path d="M1172 493C1200 510 1225 521.7 1258.2 521.7" fill="none" stroke="#9ad870" stroke-width="1.8"/><path d="M1197 725.6C1225 720 1230 600 1258.2 592" fill="none" stroke="#e7d48a" stroke-width="1.6"/><path d="M1202.3 750.3C1230 745 1235 612 1258.2 605.4" fill="none" stroke="#e7d48a" stroke-width="1.6"/><path d="M1198.8 775C1232 770 1238 625 1258.2 618.5" fill="none" stroke="#e7d48a" stroke-width="1.6"/><rect x="792.7" y="505.8" width="91.89999999999998" height="16.19999999999999" rx="5" fill="#e9a66e" stroke="#111" stroke-width="1.8"/><rect x="883.6" y="509.9" width="5" height="8" fill="#bbb" stroke="#111" stroke-width="1"/><circle cx="890.6" cy="513.9" r="3.6" fill="#f5f520" stroke="#111" stroke-width="1.1"/><g transform="translate(799.7,507.9)"><rect x="3" y="0" width="5" height="5" fill="#3a7ad0"/><rect x="0" y="5" width="5" height="6" fill="#5a9ae0"/><rect x="6" y="5" width="5" height="6" fill="#2a5ab0"/></g><svg x="792.7" y="505.8" width="90.39999999999998" height="16.19999999999999"><text x="21.0" y="11.699999999999994" font-size="9.8" fill="#1a1a1a" font-family="Liberation Sans" letter-spacing="-0.3">rc_standard_tile</text></svg><rect x="784" y="530" width="101.39999999999998" height="16" rx="5" fill="#e9a66e" stroke="#111" stroke-width="1.8"/><rect x="884.4" y="533.9" width="5" height="8" fill="#bbb" stroke="#111" stroke-width="1"/><circle cx="891.5" cy="537.9" r="3.6" fill="#f5f520" stroke="#111" stroke-width="1.1"/><g transform="translate(791,532.0)"><rect x="3" y="0" width="5" height="5" fill="#3a7ad0"/><rect x="0" y="5" width="5" height="6" fill="#5a9ae0"/><rect x="6" y="5" width="5" height="6" fill="#2a5ab0"/></g><svg x="784" y="530" width="99.89999999999998" height="16"><text x="21" y="11.6" font-size="9.8" fill="#1a1a1a" font-family="Liberation Sans" letter-spacing="-0.3">rc_standard_tile00</text></svg><rect x="794.7" y="550.6" width="100.79999999999995" height="16.100000000000023" rx="5" fill="#e9a66e" stroke="#111" stroke-width="1.8"/><rect x="894.5" y="554" width="5" height="8" fill="#bbb" stroke="#111" stroke-width="1"/><circle cx="901.5" cy="558" r="3.6" fill="#f5f520" stroke="#111" stroke-width="1.1"/><g transform="translate(801.7,552.6500000000001)"><rect x="3" y="0" width="5" height="5" fill="#3a7ad0"/><rect x="0" y="5" width="5" height="6" fill="#5a9ae0"/><rect x="6" y="5" width="5" height="6" fill="#2a5ab0"/></g><svg x="794.7" y="550.6" width="99.29999999999995" height="16.100000000000023"><text x="21.0" y="11.650000000000011" font-size="9.8" fill="#1a1a1a" font-family="Liberation Sans" letter-spacing="-0.3">rc_standard_tile00:</text></svg><rect x="919" y="599.4" width="101" height="15.300000000000068" rx="5" fill="#e9a66e" stroke="#111" stroke-width="1.8"/><rect x="1019" y="603" width="5" height="8" fill="#bbb" stroke="#111" stroke-width="1"/><circle cx="1026" cy="607" r="3.6" fill="#f5f520" stroke="#111" stroke-width="1.1"/><g transform="translate(926,601.05)"><rect x="3" y="0" width="5" height="5" fill="#3a7ad0"/><rect x="0" y="5" width="5" height="6" fill="#5a9ae0"/><rect x="6" y="5" width="5" height="6" fill="#2a5ab0"/></g><svg x="919" y="599.4" width="99.5" height="15.300000000000068"><text x="21" y="11.250000000000034" font-size="9.8" fill="#1a1a1a" font-family="Liberation Sans" letter-spacing="-0.3">_rc_tile_and_a_half</text></svg><rect x="920.3" y="623.5" width="91.70000000000005" height="15.799999999999955" rx="5" fill="#e9a66e" stroke="#111" stroke-width="1.8"/><rect x="1011" y="627.2" width="5" height="8" fill="#bbb" stroke="#111" stroke-width="1"/><circle cx="1018" cy="631.2" r="3.6" fill="#f5f520" stroke="#111" stroke-width="1.1"/><g transform="translate(927.3,625.4)"><rect x="3" y="0" width="5" height="5" fill="#3a7ad0"/><rect x="0" y="5" width="5" height="6" fill="#5a9ae0"/><rect x="6" y="5" width="5" height="6" fill="#2a5ab0"/></g><svg x="920.3" y="623.5" width="90.20000000000005" height="15.799999999999955"><text x="21.0" y="11.499999999999977" font-size="9.8" fill="#1a1a1a" font-family="Liberation Sans" letter-spacing="-0.3">rc_standard_tile</text></svg><rect x="1121.2" y="717.6" width="69.70000000000005" height="15.899999999999977" rx="5" fill="#e8d088" stroke="#111" stroke-width="1.8"/><rect x="1189.9" y="721.6" width="5" height="8" fill="#bbb" stroke="#111" stroke-width="1"/><circle cx="1197" cy="725.6" r="3.6" fill="#f5f520" stroke="#111" stroke-width="1.1"/><rect x="1128.2" y="719.55" width="13" height="12" fill="#d8ecf8"/><text x="1129.2" y="730.55" font-size="11" fill="#2a7ad0" font-family="Liberation Sans">X</text><text x="1137.2" y="724.55" font-size="7" fill="#222" font-family="Liberation Sans" font-weight="bold">2</text><svg x="1121.2" y="717.6" width="68.20000000000005" height="15.899999999999977"><text x="24.0" y="11.549999999999988" font-size="9.8" fill="#1a1a1a" font-family="Liberation Sans" letter-spacing="-0.3">Left Verge</text></svg><rect x="1121.2" y="742.3" width="75.0" height="15.900000000000091" rx="5" fill="#e8d088" stroke="#111" stroke-width="1.8"/><rect x="1195.2" y="746.3" width="5" height="8" fill="#bbb" stroke="#111" stroke-width="1"/><circle cx="1202.3" cy="750.3" r="3.6" fill="#f5f520" stroke="#111" stroke-width="1.1"/><rect x="1128.2" y="744.25" width="13" height="12" fill="#d8ecf8"/><text x="1129.2" y="755.25" font-size="11" fill="#2a7ad0" font-family="Liberation Sans">X</text><text x="1137.2" y="749.25" font-size="7" fill="#222" font-family="Liberation Sans" font-weight="bold">2</text><svg x="1121.2" y="742.3" width="73.5" height="15.900000000000091"><text x="24.0" y="11.550000000000045" font-size="9.8" fill="#1a1a1a" font-family="Liberation Sans" letter-spacing="-0.3">Right Verge</text></svg><rect x="1131.4" y="767.4" width="60.399999999999864" height="15.899999999999977" rx="5" fill="#e8d088" stroke="#111" stroke-width="1.8"/><rect x="1190.8" y="771" width="5" height="8" fill="#bbb" stroke="#111" stroke-width="1"/><circle cx="1198.8" cy="775" r="3.6" fill="#f5f520" stroke="#111" stroke-width="1.1"/><rect x="1138.4" y="769.3499999999999" width="13" height="12" fill="#d8ecf8"/><text x="1139.4" y="780.3499999999999" font-size="11" fill="#2a7ad0" font-family="Liberation Sans">X</text><text x="1147.4" y="774.3499999999999" font-size="7" fill="#222" font-family="Liberation Sans" font-weight="bold">2</text><svg x="1131.4" y="767.4" width="58.899999999999864" height="15.899999999999977"><text x="24.0" y="11.549999999999988" font-size="9.8" fill="#1a1a1a" font-family="Liberation Sans" letter-spacing="-0.3">Material</text></svg><rect x="1020.5" y="513" width="12.099999999999909" height="36.60000000000002" rx="5" fill="#b4b4c4" stroke="#111" stroke-width="1.8"/><rect x="954.6" y="495" width="71.89999999999998" height="73.70000000000005" rx="5" fill="#b4b4c4" stroke="#111" stroke-width="1.8"/><path d="M955.5 511.3V500q0-4.1 4.1-4.1H1021.5q4.1 0 4.1 4.1V511.3z" fill="#e86a6c"/><path d="M954.6 511.3H1026.5" stroke="#111" stroke-width="1.2"/><circle cx="967" cy="503.5" r="5" fill="#d03030"/><path d="M964 501l6 5M970 501l-6 5" stroke="#f08080" stroke-width="1"/><text x="996.55" y="506.75" text-anchor="middle" font-size="9.8" fill="#6a1414" font-family="Liberation Sans" letter-spacing="-0.3">Randomize</text><circle cx="954.6" cy="519.7" r="3.6" fill="#f5f520" stroke="#111" stroke-width="1.1"/><svg x="954.6" y="511.70000000000005" width="69.89999999999998" height="16"><text x="7" y="11.5" font-size="9.6" fill="#222" font-family="Liberation Sans" letter-spacing="-0.3">rc_standard_tile</text></svg><circle cx="954.6" cy="532.8" r="3.6" fill="#f5f520" stroke="#111" stroke-width="1.1"/><svg x="954.6" y="524.8" width="69.89999999999998" height="16"><text x="7" y="11.5" font-size="9.6" fill="#222" font-family="Liberation Sans" letter-spacing="-0.3">rc_standard_tile</text></svg><circle cx="954.6" cy="546" r="3.6" fill="#f5f520" stroke="#111" stroke-width="1.1"/><svg x="954.6" y="538" width="69.89999999999998" height="16"><text x="7" y="11.5" font-size="9.6" fill="#222" font-family="Liberation Sans" letter-spacing="-0.3">rc_standard_tile</text></svg><circle cx="954.6" cy="559.6" r="3.6" fill="#22dd22" stroke="#111" stroke-width="1.1"/><svg x="954.6" y="551.6" width="69.89999999999998" height="16"><text x="7" y="11.5" font-size="9.6" fill="#222" font-family="Liberation Sans" letter-spacing="-0.3">&lt;empty&gt;</text></svg><circle cx="1032.6" cy="531.4" r="3.6" fill="#f5f520" stroke="#111" stroke-width="1.1"/><rect x="1168" y="520" width="12.400000000000091" height="18.5" rx="5" fill="#b4b4c4" stroke="#111" stroke-width="1.8"/><rect x="1084.6" y="511.9" width="89.40000000000009" height="33.60000000000002" rx="5" fill="#b4b4c4" stroke="#111" stroke-width="1.8"/><path d="M1085.5 528V516.9q0-4.1 4.1-4.1H1169q4.1 0 4.1 4.1V528z" fill="#b96ae6"/><path d="M1084.6 528H1174" stroke="#111" stroke-width="1.2"/><rect x="1092" y="514.5" width="9" height="10" fill="#cfc8a0" stroke="#333" stroke-width=".8"/><path d="M1095 516.5v6M1098 516.5v6" stroke="#2a7a2a" stroke-width="1"/><text x="1135.3" y="523.5500000000001" text-anchor="middle" font-size="9.8" fill="#4a1670" font-family="Liberation Sans" letter-spacing="-0.3">MirrorVariations</text><circle cx="1084.6" cy="536.9" r="3.6" fill="#f5f520" stroke="#111" stroke-width="1.1"/><svg x="1084.6" y="528.9" width="87.40000000000009" height="16"><text x="7" y="11.5" font-size="9.6" fill="#222" font-family="Liberation Sans" letter-spacing="-0.3">Input</text></svg><circle cx="1180.4" cy="529" r="3.6" fill="#f5f520" stroke="#111" stroke-width="1.1"/><rect x="1162.9" y="580.8" width="12.399999999999864" height="28.200000000000045" rx="5" fill="#b4b4c4" stroke="#111" stroke-width="1.8"/><rect x="1099.3" y="565.7" width="69.60000000000014" height="60.5" rx="5" fill="#b4b4c4" stroke="#111" stroke-width="1.8"/><path d="M1100.2 581.8V570.7q0-4.1 4.1-4.1H1163.9q4.1 0 4.1 4.1V581.8z" fill="#e86a6c"/><path d="M1099.3 581.8H1168.9" stroke="#111" stroke-width="1.2"/><rect x="1105" y="569" width="6" height="9" fill="#d8e8f8" stroke="#3a7ad0" stroke-width=".8"/><rect x="1111" y="571" width="6" height="9" fill="#3a7ad0"/><text x="1140.1" y="577.35" text-anchor="middle" font-size="9.8" fill="#6a1414" font-family="Liberation Sans" letter-spacing="-0.3">Sequence</text><circle cx="1099.3" cy="590.3" r="3.6" fill="#f5f520" stroke="#111" stroke-width="1.1"/><svg x="1099.3" y="582.3" width="67.60000000000014" height="16"><text x="7" y="11.5" font-size="9.6" fill="#222" font-family="Liberation Sans" letter-spacing="-0.3">_rc_tile_and_a_</text></svg><circle cx="1099.3" cy="603.4" r="3.6" fill="#f5f520" stroke="#111" stroke-width="1.1"/><svg x="1099.3" y="595.4" width="67.60000000000014" height="16"><text x="7" y="11.5" font-size="9.6" fill="#222" font-family="Liberation Sans" letter-spacing="-0.3">rc_standard_tile</text></svg><circle cx="1099.3" cy="617" r="3.6" fill="#22dd22" stroke="#111" stroke-width="1.1"/><svg x="1099.3" y="609" width="67.60000000000014" height="16"><text x="7" y="11.5" font-size="9.6" fill="#222" font-family="Liberation Sans" letter-spacing="-0.3">&lt;empty&gt;</text></svg><circle cx="1175.3" cy="595.3" r="3.6" fill="#f5f520" stroke="#111" stroke-width="1.1"/><rect x="1258.6" y="497" width="77.20000000000005" height="131.20000000000005" rx="5" fill="#b4b4c4" stroke="#111" stroke-width="1.8"/><path d="M1259.5 513.3V502q0-4.1 4.1-4.1H1330.8q4.1 0 4.1 4.1V513.3z" fill="#b96ae6"/><path d="M1258.6 513.3H1335.8" stroke="#111" stroke-width="1.2"/><path d="M1258.6 583.2H1335.8" stroke="#111" stroke-width="1.2"/><rect x="1266" y="500" width="9" height="10" fill="#cfc8a0" stroke="#333" stroke-width=".8"/><path d="M1269 502v6M1272 502v6" stroke="#2a7a2a" stroke-width="1"/><text x="1303.1999999999998" y="508.75" text-anchor="middle" font-size="9.8" fill="#4a1670" font-family="Liberation Sans" letter-spacing="-0.3">Roof Macro</text><circle cx="1258.6" cy="521.7" r="3.6" fill="#f5f520" stroke="#111" stroke-width="1.1"/><svg x="1258.6" y="513.7" width="75.20000000000005" height="16"><text x="7" y="11.5" font-size="9.6" fill="#222" font-family="Liberation Sans" letter-spacing="-0.3">Clipping area</text></svg><circle cx="1258.6" cy="534.4" r="3.6" fill="#f5f520" stroke="#111" stroke-width="1.1"/><svg x="1258.6" y="526.4" width="75.20000000000005" height="16"><text x="7" y="11.5" font-size="9.6" fill="#222" font-family="Liberation Sans" letter-spacing="-0.3">Tiles</text></svg><circle cx="1258.6" cy="548" r="3.6" fill="#f5f520" stroke="#111" stroke-width="1.1"/><svg x="1258.6" y="540" width="75.20000000000005" height="16"><text x="7" y="11.5" font-size="9.6" fill="#222" font-family="Liberation Sans" letter-spacing="-0.3">Left Verge</text></svg><circle cx="1258.6" cy="561" r="3.6" fill="#f5f520" stroke="#111" stroke-width="1.1"/><svg x="1258.6" y="553" width="75.20000000000005" height="16"><text x="7" y="11.5" font-size="9.6" fill="#222" font-family="Liberation Sans" letter-spacing="-0.3">Right Verge</text></svg><circle cx="1258.6" cy="574.2" r="3.6" fill="#22dd22" stroke="#111" stroke-width="1.1"/><svg x="1258.6" y="566.2" width="75.20000000000005" height="16"><text x="7" y="11.5" font-size="9.6" fill="#222" font-family="Liberation Sans" letter-spacing="-0.3">Null</text></svg><circle cx="1258.6" cy="592" r="3.6" fill="#f5f520" stroke="#111" stroke-width="1.1"/><svg x="1258.6" y="584" width="75.20000000000005" height="16"><text x="7" y="11.5" font-size="9.6" fill="#222" font-family="Liberation Sans" letter-spacing="-0.3">Left Verge</text></svg><circle cx="1258.6" cy="605.4" r="3.6" fill="#f5f520" stroke="#111" stroke-width="1.1"/><svg x="1258.6" y="597.4" width="75.20000000000005" height="16"><text x="7" y="11.5" font-size="9.6" fill="#222" font-family="Liberation Sans" letter-spacing="-0.3">Right Verge</text></svg><circle cx="1258.6" cy="618.5" r="3.6" fill="#f5f520" stroke="#111" stroke-width="1.1"/><svg x="1258.6" y="610.5" width="75.20000000000005" height="16"><text x="7" y="11.5" font-size="9.6" fill="#222" font-family="Liberation Sans" letter-spacing="-0.3">Material</text></svg></g></svg>
<div class="a" style="left:1417px;top:476px;width:71px;height:415px;background:#3e3e3e;"></div>
<div class="a" style="left:1419px;top:476px;width:69px;height:11px;background:#262626;"></div>
<div class="t" style="left:1466px;top:478px;font-size:9.5px;color:#dcdcdc;letter-spacing:-0.3px;">Item</div>
<div class="a" style="left:1420px;top:487px;width:2px;height:387px;background:#2c2c2c;"></div>
<div class="a" style="left:1422px;top:487px;width:66px;height:387px;background:#474747;"></div>
<svg class="a" style="left:1424px;top:492px;" width="6" height="6" viewBox="0 0 6 6"><path d="M5 0v5H0z" fill="#aaa"/></svg>
<div class="t" style="left:1432px;top:491px;font-size:9.5px;color:#dcdcdc;letter-spacing:-0.3px;">Generators</div>
<svg class="a" style="left:1440px;top:502px;" width="12" height="12" viewBox="0 0 12 12"><path d="M10 3a5 5 0 1 0 0 6" fill="none" stroke="#d03a3a" stroke-width="2.4" stroke-dasharray="1.6 .8"/></svg>
<div class="t" style="left:1457px;top:504px;font-size:9.5px;color:#dcdcdc;letter-spacing:-0.3px;">Linear 1</div>
<svg class="a" style="left:1440px;top:516px;" width="12" height="12" viewBox="0 0 12 12"><rect x="1" y="1" width="10" height="10" fill="#f4f4f4" stroke="#c04040" stroke-width="1"/><path d="M1 4.3h10M1 7.6h10M4.3 1v10M7.6 1v10" stroke="#c04040" stroke-width=".8"/></svg>
<div class="t" style="left:1457px;top:518px;font-size:9.5px;color:#dcdcdc;letter-spacing:-0.3px;">Array 2S</div>
<svg class="a" style="left:1424px;top:533px;" width="6" height="6" viewBox="0 0 6 6"><path d="M5 0v5H0z" fill="#aaa"/></svg>
<div class="t" style="left:1432px;top:532px;font-size:9.5px;color:#dcdcdc;letter-spacing:-0.3px;">Objects</div>
<svg class="a" style="left:1440px;top:544px;" width="12" height="12" viewBox="0 0 12 12"><rect x="3.5" y="0.5" width="5" height="5" fill="#4a8ae0"/><rect x="0.5" y="5.5" width="5" height="6" fill="#3a7ad0"/><rect x="6.5" y="5.5" width="5" height="6" fill="#2a5ab0"/></svg>
<div class="t" style="left:1457px;top:546px;font-size:9.5px;color:#dcdcdc;letter-spacing:-0.3px;">Segment</div>
<svg class="a" style="left:1440px;top:558px;" width="12" height="12" viewBox="0 0 12 12"><path d="M1 11q2-7 5-4t5-6" fill="none" stroke="#bbb" stroke-width="1.3"/></svg>
<div class="t" style="left:1457px;top:560px;font-size:9.5px;color:#dcdcdc;letter-spacing:-0.3px;">Spline</div>
<svg class="a" style="left:1440px;top:572px;" width="12" height="12" viewBox="0 0 12 12"><path d="M6 1l5 5-5 5-5-5z" fill="#ddd"/><path d="M3.5 3.5l5 5M8.5 3.5l-5 5" stroke="#555" stroke-width=".8"/></svg>
<div class="t" style="left:1457px;top:574px;font-size:9.5px;color:#dcdcdc;letter-spacing:-0.3px;">Surface</div>
<svg class="a" style="left:1424px;top:588px;" width="6" height="6" viewBox="0 0 6 6"><path d="M5 0v5H0z" fill="#aaa"/></svg>
<div class="t" style="left:1432px;top:587px;font-size:9.5px;color:#dcdcdc;letter-spacing:-0.3px;">Parameters</div>
<svg class="a" style="left:1440px;top:599px;" width="12" height="12" viewBox="0 0 12 12"><rect x="0.5" y="0.5" width="11" height="11" rx="2" fill="#d5e9f7" stroke="#8ab8e0" stroke-width=".8"/><text x="6" y="10" text-anchor="middle" font-size="9" font-weight="bold" fill="#2a7ad0" font-family="Liberation Sans">x</text></svg>
<div class="t" style="left:1457px;top:601px;font-size:9.5px;color:#dcdcdc;letter-spacing:-0.3px;">Numeric</div>
<svg class="a" style="left:1440px;top:613px;" width="12" height="12" viewBox="0 0 12 12"><rect x="0.5" y="0.5" width="11" height="11" rx="2" fill="#d5e9f7" stroke="#8ab8e0" stroke-width=".8"/><text x="6" y="10" text-anchor="middle" font-size="9" font-weight="bold" fill="#2a7ad0" font-family="Liberation Sans">2</text></svg>
<div class="t" style="left:1457px;top:615px;font-size:9.5px;color:#dcdcdc;letter-spacing:-0.3px;">Constant</div>
<svg class="a" style="left:1440px;top:627px;" width="12" height="12" viewBox="0 0 12 12"><rect x="0.5" y="0.5" width="11" height="11" rx="2" fill="#d5e9f7" stroke="#8ab8e0" stroke-width=".8"/><text x="6" y="10" text-anchor="middle" font-size="9" font-weight="bold" fill="#2a7ad0" font-family="Liberation Sans">R</text></svg>
<div class="t" style="left:1457px;top:629px;font-size:9.5px;color:#dcdcdc;letter-spacing:-0.3px;">Random</div>
<svg class="a" style="left:1424px;top:644px;" width="6" height="6" viewBox="0 0 6 6"><path d="M5 0v5H0z" fill="#aaa"/></svg>
<div class="t" style="left:1432px;top:643px;font-size:9.5px;color:#dcdcdc;letter-spacing:-0.3px;">Operators</div>
<svg class="a" style="left:1440px;top:655px;" width="12" height="12" viewBox="0 0 12 12"><circle cx="3.5" cy="3.5" r="2.5" fill="#2a4ad0"/><circle cx="8.5" cy="3.5" r="2.5" fill="#eee"/><circle cx="3.5" cy="8.5" r="2.5" fill="#30a030"/><circle cx="8.5" cy="8.5" r="2.5" fill="#d02a2a"/></svg>
<div class="t" style="left:1457px;top:657px;font-size:9.5px;color:#dcdcdc;letter-spacing:-0.3px;">Materials</div>
<svg class="a" style="left:1440px;top:669px;" width="12" height="12" viewBox="0 0 12 12"><rect x="0.5" y="4" width="4" height="3" fill="#8ac0f0"/><rect x="6" y="1" width="5" height="4" fill="#50c050"/><rect x="6" y="7" width="5" height="4" fill="#4a90e0"/></svg>
<div class="t" style="left:1457px;top:671px;font-size:9.5px;color:#dcdcdc;letter-spacing:-0.3px;">Conditional</div>
<svg class="a" style="left:1440px;top:682px;" width="12" height="12" viewBox="0 0 12 12"><circle cx="6" cy="6" r="5.5" fill="#d02a2a"/><path d="M3 3l6 6M9 3L3 9" stroke="#f08080" stroke-width=".8"/></svg>
<div class="t" style="left:1457px;top:684px;font-size:9.5px;color:#dcdcdc;letter-spacing:-0.3px;">Random</div>
<svg class="a" style="left:1440px;top:696px;" width="12" height="12" viewBox="0 0 12 12"><rect x="0.5" y="1" width="5" height="8" fill="#d8ecf8" stroke="#3a7ad0" stroke-width=".8"/><rect x="6" y="3" width="5.5" height="8.5" fill="#3a7ad0"/></svg>
<div class="t" style="left:1457px;top:698px;font-size:9.5px;color:#dcdcdc;letter-spacing:-0.3px;">Sequence</div>
<svg class="a" style="left:1440px;top:710px;" width="12" height="12" viewBox="0 0 12 12"><path d="M0 3h5" stroke="#e0b020" stroke-width="1.5"/><rect x="6" y="0.5" width="5" height="11" fill="#4a90e0"/><path d="M6 3.5h5M6 6.5h5M6 9h5" stroke="#cfe3fb" stroke-width=".8"/></svg>
<div class="t" style="left:1457px;top:712px;font-size:9.5px;color:#dcdcdc;letter-spacing:-0.3px;">Selector</div>
<svg class="a" style="left:1440px;top:724px;" width="12" height="12" viewBox="0 0 12 12"><path d="M2 1.5h8" stroke="#e0b020" stroke-width="1.3"/><rect x="0.5" y="4" width="5" height="8" fill="#4a90e0"/><rect x="6" y="6" width="5.5" height="6" fill="#2a6ac0"/></svg>
<div class="t" style="left:1457px;top:726px;font-size:9.5px;color:#dcdcdc;letter-spacing:-0.3px;">Compose</div>
<svg class="a" style="left:1440px;top:738px;" width="12" height="12" viewBox="0 0 12 12"><path d="M2 1.5h8" stroke="#e0b020" stroke-width="1.3"/><rect x="0.5" y="6" width="5" height="6" fill="#4a90e0"/><rect x="6" y="4" width="5.5" height="8" fill="#2a6ac0"/></svg>
<div class="t" style="left:1457px;top:740px;font-size:9.5px;color:#dcdcdc;letter-spacing:-0.3px;">Reverse</div>
<svg class="a" style="left:1440px;top:752px;" width="12" height="12" viewBox="0 0 12 12"><rect x="2" y="3" width="8" height="9" fill="#4a90e0"/><path d="M5 5l5-4" stroke="#cfe3fb" stroke-width="1"/></svg>
<div class="t" style="left:1457px;top:754px;font-size:9.5px;color:#dcdcdc;letter-spacing:-0.3px;">Transform</div>
<svg class="a" style="left:1440px;top:766px;" width="12" height="12" viewBox="0 0 12 12"><path d="M0.5 1l4 2v9l-4-2zM11.5 1l-4 2v9l4-2z" fill="#3a8ae0"/><path d="M6 0v12" stroke="#ccc" stroke-width=".8"/></svg>
<div class="t" style="left:1457px;top:768px;font-size:9.5px;color:#dcdcdc;letter-spacing:-0.3px;">Mirror</div>
<svg class="a" style="left:1440px;top:779px;" width="12" height="12" viewBox="0 0 12 12"><rect x="0.5" y="0.5" width="11" height="11" rx="2" fill="#d5e9f7" stroke="#8ab8e0" stroke-width=".8"/><text x="6" y="10" text-anchor="middle" font-size="9" font-weight="bold" fill="#2a7ad0" font-family="Liberation Sans">Σ</text></svg>
<div class="t" style="left:1457px;top:781px;font-size:9.5px;color:#dcdcdc;letter-spacing:-0.3px;">Arithmetic</div>
<svg class="a" style="left:1440px;top:793px;" width="12" height="12" viewBox="0 0 12 12"><rect x="1" y="1" width="10" height="10" fill="#8ab4e4"/></svg>
<div class="t" style="left:1457px;top:795px;font-size:9.5px;color:#dcdcdc;letter-spacing:-0.3px;">UVW XForm</div>
<svg class="a" style="left:1424px;top:810px;" width="6" height="6" viewBox="0 0 6 6"><path d="M5 0v5H0z" fill="#aaa"/></svg>
<div class="t" style="left:1432px;top:809px;font-size:9.5px;color:#dcdcdc;letter-spacing:-0.3px;">Others</div>
<svg class="a" style="left:1440px;top:821px;" width="12" height="12" viewBox="0 0 12 12"><rect x="1.5" y="0.5" width="9" height="11" fill="#cfc8a0" stroke="#444" stroke-width=".8"/><path d="M4.5 3v6M7.5 3v6" stroke="#2a7a2a" stroke-width="1"/></svg>
<div class="t" style="left:1457px;top:823px;font-size:9.5px;color:#dcdcdc;letter-spacing:-0.3px;">Macro</div>
<svg class="a" style="left:1440px;top:835px;" width="12" height="12" viewBox="0 0 12 12"><rect x="0.5" y="0.5" width="7" height="11" fill="#f4f4f4"/><path d="M2 3h4M2 5.5h4M2 8h4" stroke="#e04040" stroke-width="1"/><rect x="9" y="1" width="2.5" height="10" fill="#f0d040"/></svg>
<div class="t" style="left:1457px;top:837px;font-size:9.5px;color:#dcdcdc;letter-spacing:-0.3px;">Note</div>
<div class="a" style="left:1420px;top:874px;width:68px;height:17px;background:#2a2a2a;"></div>
<div class="a" style="left:1421px;top:874px;width:37px;height:16px;background:#363636;"></div>
<div class="t" style="left:1430px;top:881px;font-size:9.5px;color:#e4e4e4;letter-spacing:-0.3px;">Items</div>
<div class="t" style="left:1466px;top:881px;font-size:9.5px;color:#bbb;letter-spacing:-0.3px;">Macro</div>
<div class="a" style="left:1459px;top:432px;width:40px;height:44px;background:#1e2130;border-radius:6px 0 0 6px"></div>
<svg class="a" style="left:1468px;top:445px;" width="12" height="18" viewBox="0 0 12 18"><path d="M9 2L3 9l6 7" fill="none" stroke="#ddd" stroke-width="1.6"/></svg>
<div class="a" style="left:607px;top:891px;width:881px;height:16px;background:#444444;"></div>
<div class="a" style="left:1030px;top:889px;width:16px;height:16px;background:#5a7aa6;border-radius:2px"></div>
<svg class="a" style="left:1032px;top:891px;" width="12" height="12" viewBox="0 0 12 12"><path d="M6 1l5 2.5v5L6 11 1 8.5v-5z M1 3.5L6 6l5-2.5M6 6v5" fill="none" stroke="#dde" stroke-width="1"/></svg>
<div class="t" style="left:1050px;top:894px;font-size:9.5px;color:#c8c8c8;letter-spacing:-0.3px;">Add Time Tag</div>
<svg class="a" style="left:1138px;top:892px;" width="12" height="8" viewBox="0 0 12 8"><path d="M0 4l4-3v6zM12 4l-4-3v6z" fill="#ddd"/></svg>
<div class="a" style="left:1154px;top:890px;width:58px;height:14px;background:#505050;border-radius:2px"></div>
<div class="t" style="left:1158px;top:893px;font-size:9.5px;color:#ccc;letter-spacing:-0.3px;">0</div>
<svg class="a" style="left:1203px;top:892px;" width="6" height="10" viewBox="0 0 6 10"><path d="M0 4l3-3 3 3zM0 6l3 3 3-3z" fill="#ddd"/></svg>
<svg class="a" style="left:1214px;top:890px;" width="14" height="14" viewBox="0 0 14 14"><circle cx="5" cy="5" r="3" fill="none" stroke="#ccc" stroke-width="1.5"/><circle cx="10" cy="9" r="3" fill="none" stroke="#e0a030" stroke-width="1.5"/></svg>
<div class="a" style="left:1239px;top:890px;width:30px;height:15px;background:#505050;border-radius:2px"></div>
<div class="a" style="left:1275px;top:890px;width:36px;height:15px;background:#505050;border-radius:2px"></div>
<div class="t" style="left:1277px;top:894px;font-size:9.5px;color:#c8c8c8;letter-spacing:-0.3px;">Set Key</div>
<svg class="a" style="left:1315px;top:889px;" width="16" height="16" viewBox="0 0 16 16"><path d="M2 14q2-12 6-4t6-8" fill="none" stroke="#4ad0d0" stroke-width="1.5"/></svg>
<div class="a" style="left:1335px;top:890px;width:67px;height:15px;background:#505050;border-radius:2px"></div>
<div class="t" style="left:1343px;top:894px;font-size:9.5px;color:#c8c8c8;letter-spacing:-0.3px;">Key Filters...</div>
<svg class="a" style="left:1417px;top:890px;" width="14" height="15" viewBox="0 0 14 15"><path d="M3 12l4-9 4 9" fill="none" stroke="#ddd" stroke-width="1.4"/></svg>
<svg class="a" style="left:1436px;top:890px;" width="14" height="15" viewBox="0 0 14 15"><path d="M3 12l4-9 4 9" fill="none" stroke="#ddd" stroke-width="1.4"/></svg>
<svg class="a" style="left:1455px;top:890px;" width="14" height="15" viewBox="0 0 14 15"><path d="M3 12l4-9 4 9" fill="none" stroke="#ddd" stroke-width="1.4"/></svg>
<svg class="a" style="left:1473px;top:890px;" width="14" height="15" viewBox="0 0 14 15"><path d="M3 12l4-9 4 9" fill="none" stroke="#ddd" stroke-width="1.4"/></svg>
</body></html>
